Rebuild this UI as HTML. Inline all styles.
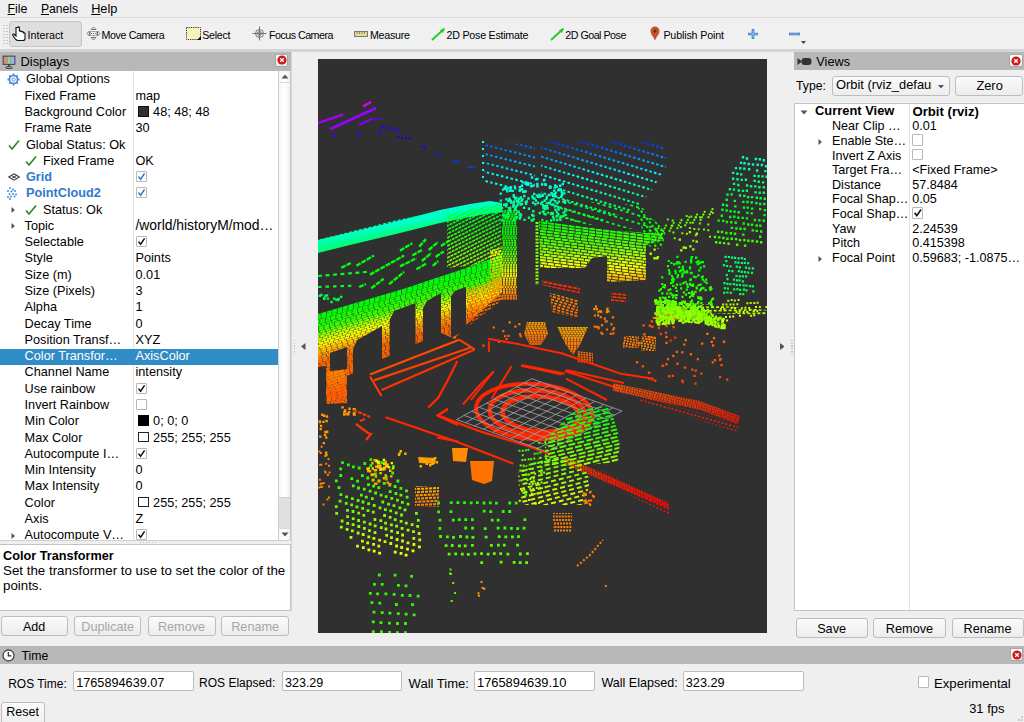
<!DOCTYPE html>
<html><head><meta charset="utf-8"><style>
html,body{margin:0;padding:0;width:1024px;height:722px;overflow:hidden;background:#efefef;}
.t{position:absolute;white-space:nowrap;line-height:1;font-family:"Liberation Sans",sans-serif;}
.r{position:absolute;}
</style></head><body>
<div class="r" style="left:318px;top:59px;width:449px;height:574px;background:#303030;overflow:hidden"><svg width="449" height="574" viewBox="318 59 449 574" style="position:absolute;left:0;top:0"><defs><clipPath id="i1"><path d="M541.0 141.0L663.0 142.0L667.0 165.0L652.0 190.0L637.0 208.0L600.0 222.0L541.0 222.0Z"/></clipPath><linearGradient id="i2" gradientUnits="userSpaceOnUse" x1="0" y1="143" x2="0" y2="222"><stop offset="0.000" stop-color="#0033ff"/><stop offset="0.051" stop-color="#004cff"/><stop offset="0.101" stop-color="#0066ff"/><stop offset="0.152" stop-color="#007fff"/><stop offset="0.203" stop-color="#0099ff"/><stop offset="0.253" stop-color="#00b2ff"/><stop offset="0.304" stop-color="#00cbff"/><stop offset="0.354" stop-color="#00e5ff"/><stop offset="0.405" stop-color="#00ffff"/><stop offset="0.479" stop-color="#00ffe2"/><stop offset="0.554" stop-color="#00ffc5"/><stop offset="0.628" stop-color="#00ffa8"/><stop offset="0.703" stop-color="#00ff8c"/><stop offset="0.777" stop-color="#00ff6f"/><stop offset="0.851" stop-color="#00ff52"/><stop offset="0.926" stop-color="#00ff36"/><stop offset="1" stop-color="#00ff19"/></linearGradient><clipPath id="i3"><path d="M484.0 140.0L535.0 146.0L535.0 190.0L505.0 192.0L484.0 186.0Z"/></clipPath><linearGradient id="i4" gradientUnits="userSpaceOnUse" x1="0" y1="142" x2="0" y2="190"><stop offset="0.000" stop-color="#004cff"/><stop offset="0.125" stop-color="#006aff"/><stop offset="0.250" stop-color="#0089ff"/><stop offset="0.375" stop-color="#00a7ff"/><stop offset="0.500" stop-color="#00c5ff"/><stop offset="0.625" stop-color="#00e3ff"/><stop offset="0.750" stop-color="#00fffb"/><stop offset="0.875" stop-color="#00ffdd"/><stop offset="1" stop-color="#00ffbf"/></linearGradient><linearGradient id="i5" gradientUnits="userSpaceOnUse" x1="0" y1="175" x2="0" y2="220"><stop offset="0.000" stop-color="#00f2ff"/><stop offset="0.125" stop-color="#00fff7"/><stop offset="0.250" stop-color="#00ffe2"/><stop offset="0.375" stop-color="#00ffcd"/><stop offset="0.500" stop-color="#00ffb8"/><stop offset="0.625" stop-color="#00ffa4"/><stop offset="0.750" stop-color="#00ff8f"/><stop offset="0.875" stop-color="#00ff7a"/><stop offset="1" stop-color="#00ff65"/></linearGradient><clipPath id="i6"><path d="M560.0 200.0L640.0 205.0L665.0 232.0L560.0 222.0Z"/></clipPath><linearGradient id="i7" gradientUnits="userSpaceOnUse" x1="0" y1="200" x2="0" y2="232"><stop offset="0.000" stop-color="#00ff3f"/><stop offset="0.125" stop-color="#00ff37"/><stop offset="0.250" stop-color="#00ff2f"/><stop offset="0.375" stop-color="#00ff27"/><stop offset="0.500" stop-color="#00ff1f"/><stop offset="0.625" stop-color="#00ff17"/><stop offset="0.750" stop-color="#00ff0f"/><stop offset="0.875" stop-color="#00ff07"/><stop offset="1" stop-color="#00ff00"/></linearGradient><linearGradient id="i8" gradientUnits="userSpaceOnUse" x1="380" y1="225.5" x2="382.5" y2="237.7"><stop offset="0.000" stop-color="#00ffd8"/><stop offset="0.167" stop-color="#00ffc7"/><stop offset="0.333" stop-color="#00ffb6"/><stop offset="0.500" stop-color="#00ffa5"/><stop offset="0.667" stop-color="#00ff94"/><stop offset="0.833" stop-color="#00ff83"/><stop offset="1" stop-color="#00ff72"/></linearGradient><clipPath id="i9"><path d="M447.0 214.0L500.0 203.0L502.0 258.0L470.0 266.0L447.0 268.0Z"/></clipPath><linearGradient id="i10" gradientUnits="userSpaceOnUse" x1="0" y1="210" x2="0" y2="262"><stop offset="0.000" stop-color="#00ff33"/><stop offset="0.125" stop-color="#00ff1c"/><stop offset="0.250" stop-color="#00ff06"/><stop offset="0.375" stop-color="#0fff00"/><stop offset="0.500" stop-color="#26ff00"/><stop offset="0.625" stop-color="#3cff00"/><stop offset="0.750" stop-color="#52ff00"/><stop offset="0.875" stop-color="#69ff00"/><stop offset="1" stop-color="#7fff00"/></linearGradient><clipPath id="i11"><path d="M318.0 314.0L403.0 289.0L458.6 270.5L502.0 255.0L502.0 292.0L466.0 325.0L455.0 339.0L441.0 333.0L414.0 345.0L380.0 360.0L347.0 376.0L347.0 403.0L327.0 404.0L318.0 366.0Z"/></clipPath><linearGradient id="i12" gradientUnits="userSpaceOnUse" x1="318" y1="315" x2="331" y2="360"><stop offset="0.000" stop-color="#00ff0c"/><stop offset="0.050" stop-color="#00ff02"/><stop offset="0.100" stop-color="#08ff00"/><stop offset="0.150" stop-color="#13ff00"/><stop offset="0.200" stop-color="#1dff00"/><stop offset="0.250" stop-color="#28ff00"/><stop offset="0.300" stop-color="#33ff00"/><stop offset="0.342" stop-color="#50ff00"/><stop offset="0.383" stop-color="#6eff00"/><stop offset="0.425" stop-color="#8cff00"/><stop offset="0.467" stop-color="#aaff00"/><stop offset="0.508" stop-color="#c7ff00"/><stop offset="0.550" stop-color="#e5ff00"/><stop offset="0.592" stop-color="#f8ff00"/><stop offset="0.633" stop-color="#fff200"/><stop offset="0.675" stop-color="#ffdf00"/><stop offset="0.717" stop-color="#ffcc00"/><stop offset="0.758" stop-color="#ffb800"/><stop offset="0.800" stop-color="#ffa500"/><stop offset="0.833" stop-color="#ff9b00"/><stop offset="0.867" stop-color="#ff9000"/><stop offset="0.900" stop-color="#ff8500"/><stop offset="0.933" stop-color="#ff7b00"/><stop offset="0.967" stop-color="#ff7000"/><stop offset="1" stop-color="#ff6600"/></linearGradient><clipPath id="i13"><path d="M327.0 372.0L345.0 370.0L345.0 397.0L327.0 398.0Z"/></clipPath><linearGradient id="i14" gradientUnits="userSpaceOnUse" x1="0" y1="370" x2="0" y2="398"><stop offset="0.000" stop-color="#ff9900"/><stop offset="0.167" stop-color="#ff8c00"/><stop offset="0.333" stop-color="#ff7f00"/><stop offset="0.500" stop-color="#ff7200"/><stop offset="0.667" stop-color="#ff6600"/><stop offset="0.833" stop-color="#ff5900"/><stop offset="1" stop-color="#ff4c00"/></linearGradient><clipPath id="i15"><path d="M466.0 290.0L502.0 278.0L502.0 300.0L470.0 325.0Z"/></clipPath><linearGradient id="i16" gradientUnits="userSpaceOnUse" x1="0" y1="280" x2="0" y2="325"><stop offset="0.000" stop-color="#ffb200"/><stop offset="0.125" stop-color="#ffa400"/><stop offset="0.250" stop-color="#ff9500"/><stop offset="0.375" stop-color="#ff8700"/><stop offset="0.500" stop-color="#ff7900"/><stop offset="0.625" stop-color="#ff6a00"/><stop offset="0.750" stop-color="#ff5c00"/><stop offset="0.875" stop-color="#ff4e00"/><stop offset="1" stop-color="#ff3f00"/></linearGradient><clipPath id="i17"><path d="M502.0 210.0L517.0 210.0L517.0 300.0L502.0 300.0Z"/></clipPath><linearGradient id="i18" gradientUnits="userSpaceOnUse" x1="0" y1="215" x2="0" y2="300"><stop offset="0.000" stop-color="#00ff26"/><stop offset="0.051" stop-color="#00ff1b"/><stop offset="0.103" stop-color="#00ff0f"/><stop offset="0.154" stop-color="#00ff04"/><stop offset="0.206" stop-color="#06ff00"/><stop offset="0.257" stop-color="#11ff00"/><stop offset="0.309" stop-color="#1cff00"/><stop offset="0.360" stop-color="#27ff00"/><stop offset="0.412" stop-color="#33ff00"/><stop offset="0.449" stop-color="#4cff00"/><stop offset="0.485" stop-color="#65ff00"/><stop offset="0.522" stop-color="#7fff00"/><stop offset="0.559" stop-color="#98ff00"/><stop offset="0.596" stop-color="#b2ff00"/><stop offset="0.632" stop-color="#ccff00"/><stop offset="0.669" stop-color="#e5ff00"/><stop offset="0.706" stop-color="#ffff00"/><stop offset="0.743" stop-color="#ffeb00"/><stop offset="0.779" stop-color="#ffd800"/><stop offset="0.816" stop-color="#ffc500"/><stop offset="0.853" stop-color="#ffb200"/><stop offset="0.890" stop-color="#ff9f00"/><stop offset="0.926" stop-color="#ff8c00"/><stop offset="0.963" stop-color="#ff7900"/><stop offset="1" stop-color="#ff6600"/></linearGradient><clipPath id="i19"><path d="M490.0 250.0L502.0 248.0L502.0 300.0L490.0 302.0Z"/></clipPath><linearGradient id="i20" gradientUnits="userSpaceOnUse" x1="0" y1="250" x2="0" y2="300"><stop offset="0.000" stop-color="#ffff00"/><stop offset="0.125" stop-color="#ffeb00"/><stop offset="0.250" stop-color="#ffd800"/><stop offset="0.375" stop-color="#ffc500"/><stop offset="0.500" stop-color="#ffb200"/><stop offset="0.625" stop-color="#ff9f00"/><stop offset="0.750" stop-color="#ff8c00"/><stop offset="0.875" stop-color="#ff7900"/><stop offset="1" stop-color="#ff6600"/></linearGradient><clipPath id="i21"><path d="M539.0 221.0L600.0 229.0L646.0 233.0L663.0 234.0L663.0 240.0L646.0 245.0L646.0 280.0L607.0 282.0L607.0 256.0L592.0 258.0L585.0 268.0L540.0 268.0Z"/></clipPath><linearGradient id="i22" gradientUnits="userSpaceOnUse" x1="0" y1="222" x2="0" y2="280"><stop offset="0.000" stop-color="#00ff00"/><stop offset="0.050" stop-color="#0bff00"/><stop offset="0.099" stop-color="#16ff00"/><stop offset="0.149" stop-color="#21ff00"/><stop offset="0.198" stop-color="#2cff00"/><stop offset="0.248" stop-color="#37ff00"/><stop offset="0.297" stop-color="#42ff00"/><stop offset="0.347" stop-color="#4eff00"/><stop offset="0.397" stop-color="#59ff00"/><stop offset="0.429" stop-color="#67ff00"/><stop offset="0.461" stop-color="#75ff00"/><stop offset="0.494" stop-color="#84ff00"/><stop offset="0.526" stop-color="#92ff00"/><stop offset="0.558" stop-color="#a0ff00"/><stop offset="0.591" stop-color="#afff00"/><stop offset="0.623" stop-color="#bdff00"/><stop offset="0.655" stop-color="#ccff00"/><stop offset="0.698" stop-color="#dbff00"/><stop offset="0.741" stop-color="#ebff00"/><stop offset="0.784" stop-color="#fbff00"/><stop offset="0.828" stop-color="#fff200"/><stop offset="0.871" stop-color="#ffe200"/><stop offset="0.914" stop-color="#ffd200"/><stop offset="0.957" stop-color="#ffc200"/><stop offset="1" stop-color="#ffb200"/></linearGradient><clipPath id="i23"><path d="M637.0 206.0L666.0 230.0L662.0 250.0L645.0 245.0Z"/></clipPath><linearGradient id="i24" gradientUnits="userSpaceOnUse" x1="0" y1="205" x2="0" y2="250"><stop offset="0.000" stop-color="#00ff19"/><stop offset="0.125" stop-color="#00ff13"/><stop offset="0.250" stop-color="#00ff0c"/><stop offset="0.375" stop-color="#00ff06"/><stop offset="0.500" stop-color="#00ff00"/><stop offset="0.625" stop-color="#06ff00"/><stop offset="0.750" stop-color="#0cff00"/><stop offset="0.875" stop-color="#13ff00"/><stop offset="1" stop-color="#19ff00"/></linearGradient><clipPath id="i25"><path d="M542.0 279.0L580.0 287.0L580.0 294.0L542.0 285.0Z"/></clipPath><linearGradient id="i26" gradientUnits="userSpaceOnUse" x1="0" y1="279" x2="0" y2="294"><stop offset="0.000" stop-color="#ff3f00"/><stop offset="0.125" stop-color="#ff3a00"/><stop offset="0.250" stop-color="#ff3600"/><stop offset="0.375" stop-color="#ff3100"/><stop offset="0.500" stop-color="#ff2c00"/><stop offset="0.625" stop-color="#ff2700"/><stop offset="0.750" stop-color="#ff2300"/><stop offset="0.875" stop-color="#ff1e00"/><stop offset="1" stop-color="#ff1900"/></linearGradient><linearGradient id="i27" gradientUnits="userSpaceOnUse" x1="0" y1="155" x2="0" y2="246"><stop offset="0.000" stop-color="#00ffcc"/><stop offset="0.062" stop-color="#00ffba"/><stop offset="0.124" stop-color="#00ffa8"/><stop offset="0.185" stop-color="#00ff97"/><stop offset="0.247" stop-color="#00ff85"/><stop offset="0.309" stop-color="#00ff74"/><stop offset="0.371" stop-color="#00ff62"/><stop offset="0.433" stop-color="#00ff51"/><stop offset="0.495" stop-color="#00ff3f"/><stop offset="0.558" stop-color="#00ff2e"/><stop offset="0.621" stop-color="#00ff1c"/><stop offset="0.684" stop-color="#00ff0b"/><stop offset="0.747" stop-color="#06ff00"/><stop offset="0.810" stop-color="#17ff00"/><stop offset="0.874" stop-color="#29ff00"/><stop offset="0.937" stop-color="#3aff00"/><stop offset="1" stop-color="#4cff00"/></linearGradient><linearGradient id="i28" gradientUnits="userSpaceOnUse" x1="0" y1="217" x2="0" y2="240"><stop offset="0.000" stop-color="#59ff00"/><stop offset="0.125" stop-color="#5eff00"/><stop offset="0.250" stop-color="#62ff00"/><stop offset="0.375" stop-color="#67ff00"/><stop offset="0.500" stop-color="#6cff00"/><stop offset="0.625" stop-color="#71ff00"/><stop offset="0.750" stop-color="#75ff00"/><stop offset="0.875" stop-color="#7aff00"/><stop offset="1" stop-color="#7fff00"/></linearGradient><linearGradient id="i29" gradientUnits="userSpaceOnUse" x1="0" y1="254" x2="0" y2="305"><stop offset="0.000" stop-color="#00ff19"/><stop offset="0.125" stop-color="#00ff0e"/><stop offset="0.250" stop-color="#00ff03"/><stop offset="0.375" stop-color="#07ff00"/><stop offset="0.500" stop-color="#13ff00"/><stop offset="0.625" stop-color="#1eff00"/><stop offset="0.750" stop-color="#29ff00"/><stop offset="0.875" stop-color="#34ff00"/><stop offset="1" stop-color="#3fff00"/></linearGradient><linearGradient id="i30" gradientUnits="userSpaceOnUse" x1="0" y1="298" x2="0" y2="328"><stop offset="0.000" stop-color="#59ff00"/><stop offset="0.125" stop-color="#64ff00"/><stop offset="0.250" stop-color="#6fff00"/><stop offset="0.375" stop-color="#7aff00"/><stop offset="0.500" stop-color="#85ff00"/><stop offset="0.625" stop-color="#91ff00"/><stop offset="0.750" stop-color="#9cff00"/><stop offset="0.875" stop-color="#a7ff00"/><stop offset="1" stop-color="#b2ff00"/></linearGradient><clipPath id="i31"><path d="M702.0 304.0L767.0 310.0L767.0 315.0L704.0 313.0Z"/></clipPath><linearGradient id="i32" gradientUnits="userSpaceOnUse" x1="0" y1="312" x2="0" y2="340"><stop offset="0.000" stop-color="#ff7200"/><stop offset="0.125" stop-color="#ff6900"/><stop offset="0.250" stop-color="#ff5f00"/><stop offset="0.375" stop-color="#ff5600"/><stop offset="0.500" stop-color="#ff4c00"/><stop offset="0.625" stop-color="#ff4200"/><stop offset="0.750" stop-color="#ff3900"/><stop offset="0.875" stop-color="#ff2f00"/><stop offset="1" stop-color="#ff2600"/></linearGradient><linearGradient id="i33" gradientUnits="userSpaceOnUse" x1="0" y1="254" x2="0" y2="295"><stop offset="0.000" stop-color="#00ff7f"/><stop offset="0.125" stop-color="#00ff77"/><stop offset="0.250" stop-color="#00ff6f"/><stop offset="0.375" stop-color="#00ff67"/><stop offset="0.500" stop-color="#00ff5f"/><stop offset="0.625" stop-color="#00ff57"/><stop offset="0.750" stop-color="#00ff4f"/><stop offset="0.875" stop-color="#00ff47"/><stop offset="1" stop-color="#00ff3f"/></linearGradient><linearGradient id="i34" gradientUnits="userSpaceOnUse" x1="0" y1="296" x2="0" y2="321"><stop offset="0.000" stop-color="#a5ff00"/><stop offset="0.125" stop-color="#adff00"/><stop offset="0.250" stop-color="#b5ff00"/><stop offset="0.375" stop-color="#bdff00"/><stop offset="0.500" stop-color="#c5ff00"/><stop offset="0.625" stop-color="#cdff00"/><stop offset="0.750" stop-color="#d5ff00"/><stop offset="0.875" stop-color="#ddff00"/><stop offset="1" stop-color="#e5ff00"/></linearGradient><linearGradient id="i35" gradientUnits="userSpaceOnUse" x1="0" y1="314" x2="0" y2="380"><stop offset="0.000" stop-color="#ff7f00"/><stop offset="0.125" stop-color="#ff7700"/><stop offset="0.250" stop-color="#ff6f00"/><stop offset="0.375" stop-color="#ff6700"/><stop offset="0.500" stop-color="#ff5f00"/><stop offset="0.625" stop-color="#ff5700"/><stop offset="0.750" stop-color="#ff4f00"/><stop offset="0.875" stop-color="#ff4700"/><stop offset="1" stop-color="#ff3f00"/></linearGradient><clipPath id="i36"><path d="M527.0 322.0L545.0 322.0L548.0 334.0L541.0 345.0L530.0 345.0L524.0 334.0Z"/></clipPath><linearGradient id="i37" gradientUnits="userSpaceOnUse" x1="0" y1="320" x2="0" y2="345"><stop offset="0.000" stop-color="#ffa500"/><stop offset="0.125" stop-color="#ff9d00"/><stop offset="0.250" stop-color="#ff9500"/><stop offset="0.375" stop-color="#ff8d00"/><stop offset="0.500" stop-color="#ff8500"/><stop offset="0.625" stop-color="#ff7d00"/><stop offset="0.750" stop-color="#ff7500"/><stop offset="0.875" stop-color="#ff6d00"/><stop offset="1" stop-color="#ff6600"/></linearGradient><clipPath id="i38"><path d="M557.0 327.0L588.0 327.0L580.0 345.0L573.0 355.0L566.0 345.0Z"/></clipPath><linearGradient id="i39" gradientUnits="userSpaceOnUse" x1="0" y1="326" x2="0" y2="355"><stop offset="0.000" stop-color="#ffb200"/><stop offset="0.125" stop-color="#ffa800"/><stop offset="0.250" stop-color="#ff9f00"/><stop offset="0.375" stop-color="#ff9500"/><stop offset="0.500" stop-color="#ff8c00"/><stop offset="0.625" stop-color="#ff8200"/><stop offset="0.750" stop-color="#ff7900"/><stop offset="0.875" stop-color="#ff6f00"/><stop offset="1" stop-color="#ff6600"/></linearGradient><clipPath id="i40"><path d="M577.0 351.0L593.0 353.0L593.0 364.0L577.0 362.0Z"/></clipPath><linearGradient id="i41" gradientUnits="userSpaceOnUse" x1="0" y1="350" x2="0" y2="364"><stop offset="0.000" stop-color="#ff7f00"/><stop offset="0.125" stop-color="#ff7900"/><stop offset="0.250" stop-color="#ff7200"/><stop offset="0.375" stop-color="#ff6c00"/><stop offset="0.500" stop-color="#ff6600"/><stop offset="0.625" stop-color="#ff5f00"/><stop offset="0.750" stop-color="#ff5900"/><stop offset="0.875" stop-color="#ff5200"/><stop offset="1" stop-color="#ff4c00"/></linearGradient><clipPath id="i42"><path d="M550.0 293.0L578.0 300.0L578.0 318.0L552.0 312.0Z"/></clipPath><linearGradient id="i43" gradientUnits="userSpaceOnUse" x1="0" y1="292" x2="0" y2="318"><stop offset="0.000" stop-color="#ff8c00"/><stop offset="0.125" stop-color="#ff8700"/><stop offset="0.250" stop-color="#ff8200"/><stop offset="0.375" stop-color="#ff7d00"/><stop offset="0.500" stop-color="#ff7900"/><stop offset="0.625" stop-color="#ff7400"/><stop offset="0.750" stop-color="#ff6f00"/><stop offset="0.875" stop-color="#ff6a00"/><stop offset="1" stop-color="#ff6600"/></linearGradient><clipPath id="i44"><path d="M611.0 292.0L626.0 293.0L626.0 303.0L611.0 302.0Z"/></clipPath><linearGradient id="i45" gradientUnits="userSpaceOnUse" x1="0" y1="305" x2="0" y2="333"><stop offset="0.000" stop-color="#ff8c00"/><stop offset="0.125" stop-color="#ff8700"/><stop offset="0.250" stop-color="#ff8200"/><stop offset="0.375" stop-color="#ff7d00"/><stop offset="0.500" stop-color="#ff7900"/><stop offset="0.625" stop-color="#ff7400"/><stop offset="0.750" stop-color="#ff6f00"/><stop offset="0.875" stop-color="#ff6a00"/><stop offset="1" stop-color="#ff6600"/></linearGradient><clipPath id="i46"><path d="M623.0 336.0L639.0 336.0L639.0 348.0L623.0 348.0Z"/></clipPath><clipPath id="i47"><path d="M641.0 336.0L656.0 336.0L656.0 351.0L641.0 351.0Z"/></clipPath><linearGradient id="i48" gradientUnits="userSpaceOnUse" x1="0" y1="330" x2="0" y2="385"><stop offset="0.000" stop-color="#ff7f00"/><stop offset="0.125" stop-color="#ff7700"/><stop offset="0.250" stop-color="#ff6f00"/><stop offset="0.375" stop-color="#ff6700"/><stop offset="0.500" stop-color="#ff5f00"/><stop offset="0.625" stop-color="#ff5700"/><stop offset="0.750" stop-color="#ff4f00"/><stop offset="0.875" stop-color="#ff4700"/><stop offset="1" stop-color="#ff3f00"/></linearGradient><linearGradient id="i49" gradientUnits="userSpaceOnUse" x1="0" y1="318" x2="0" y2="345"><stop offset="0.000" stop-color="#ff7f00"/><stop offset="0.125" stop-color="#ff7900"/><stop offset="0.250" stop-color="#ff7200"/><stop offset="0.375" stop-color="#ff6c00"/><stop offset="0.500" stop-color="#ff6600"/><stop offset="0.625" stop-color="#ff5f00"/><stop offset="0.750" stop-color="#ff5900"/><stop offset="0.875" stop-color="#ff5200"/><stop offset="1" stop-color="#ff4c00"/></linearGradient><clipPath id="i50"><path d="M415.0 486.0L439.0 486.0L439.0 507.0L415.0 507.0Z"/></clipPath><linearGradient id="i51" gradientUnits="userSpaceOnUse" x1="0" y1="486" x2="0" y2="507"><stop offset="0.000" stop-color="#ffb200"/><stop offset="0.125" stop-color="#ffaa00"/><stop offset="0.250" stop-color="#ffa200"/><stop offset="0.375" stop-color="#ff9a00"/><stop offset="0.500" stop-color="#ff9200"/><stop offset="0.625" stop-color="#ff8a00"/><stop offset="0.750" stop-color="#ff8200"/><stop offset="0.875" stop-color="#ff7a00"/><stop offset="1" stop-color="#ff7200"/></linearGradient><clipPath id="i52"><path d="M613.0 383.0L700.0 401.0L740.0 416.0L738.0 424.0L700.0 410.0L613.0 391.0Z"/></clipPath><linearGradient id="i53" gradientUnits="userSpaceOnUse" x1="0" y1="384" x2="0" y2="424"><stop offset="0.000" stop-color="#ff5900"/><stop offset="0.125" stop-color="#ff4f00"/><stop offset="0.250" stop-color="#ff4600"/><stop offset="0.375" stop-color="#ff3c00"/><stop offset="0.500" stop-color="#ff3300"/><stop offset="0.625" stop-color="#ff2900"/><stop offset="0.750" stop-color="#ff1f00"/><stop offset="0.875" stop-color="#ff1600"/><stop offset="1" stop-color="#ff0c00"/></linearGradient><clipPath id="i54"><path d="M640.0 396.0L738.0 424.0L738.0 432.0L640.0 402.0Z"/></clipPath><clipPath id="i55"><path d="M564.0 456.0L669.0 503.0L669.0 509.0L564.0 464.0Z"/></clipPath><linearGradient id="i56" gradientUnits="userSpaceOnUse" x1="0" y1="456" x2="0" y2="509"><stop offset="0.000" stop-color="#ff3f00"/><stop offset="0.125" stop-color="#ff3700"/><stop offset="0.250" stop-color="#ff2f00"/><stop offset="0.375" stop-color="#ff2700"/><stop offset="0.500" stop-color="#ff1f00"/><stop offset="0.625" stop-color="#ff1700"/><stop offset="0.750" stop-color="#ff0f00"/><stop offset="0.875" stop-color="#ff0700"/><stop offset="1" stop-color="#ff0000"/></linearGradient><clipPath id="i57"><path d="M600.0 470.0L669.0 505.0L669.0 515.0L600.0 480.0Z"/></clipPath><clipPath id="i58"><path d="M545.0 440.0L575.0 410.0L610.0 406.0L620.0 440.0L618.0 462.0L575.0 466.0L545.0 465.0Z"/></clipPath><linearGradient id="i59" gradientUnits="userSpaceOnUse" x1="0" y1="410" x2="0" y2="466"><stop offset="0.000" stop-color="#00ff19"/><stop offset="0.067" stop-color="#00ff0c"/><stop offset="0.134" stop-color="#00ff00"/><stop offset="0.201" stop-color="#0cff00"/><stop offset="0.268" stop-color="#19ff00"/><stop offset="0.335" stop-color="#26ff00"/><stop offset="0.402" stop-color="#33ff00"/><stop offset="0.469" stop-color="#3fff00"/><stop offset="0.536" stop-color="#4cff00"/><stop offset="0.594" stop-color="#57ff00"/><stop offset="0.652" stop-color="#62ff00"/><stop offset="0.710" stop-color="#6dff00"/><stop offset="0.768" stop-color="#79ff00"/><stop offset="0.826" stop-color="#84ff00"/><stop offset="0.884" stop-color="#8fff00"/><stop offset="0.942" stop-color="#9aff00"/><stop offset="1" stop-color="#a5ff00"/></linearGradient><clipPath id="i60"><path d="M518.0 470.0L545.0 455.0L580.0 460.0L590.0 480.0L585.0 505.0L520.0 505.0Z"/></clipPath><linearGradient id="i61" gradientUnits="userSpaceOnUse" x1="0" y1="455" x2="0" y2="505"><stop offset="0.000" stop-color="#59ff00"/><stop offset="0.125" stop-color="#6aff00"/><stop offset="0.250" stop-color="#7cff00"/><stop offset="0.375" stop-color="#8dff00"/><stop offset="0.500" stop-color="#9fff00"/><stop offset="0.625" stop-color="#b0ff00"/><stop offset="0.750" stop-color="#c2ff00"/><stop offset="0.875" stop-color="#d3ff00"/><stop offset="1" stop-color="#e5ff00"/></linearGradient><linearGradient id="i62" gradientUnits="userSpaceOnUse" x1="0" y1="445" x2="0" y2="505"><stop offset="0.000" stop-color="#33ff00"/><stop offset="0.125" stop-color="#49ff00"/><stop offset="0.250" stop-color="#5fff00"/><stop offset="0.375" stop-color="#75ff00"/><stop offset="0.500" stop-color="#8cff00"/><stop offset="0.625" stop-color="#a2ff00"/><stop offset="0.750" stop-color="#b8ff00"/><stop offset="0.875" stop-color="#cfff00"/><stop offset="1" stop-color="#e5ff00"/></linearGradient><clipPath id="i64"><path d="M553.0 513.0L572.0 513.0L572.0 532.0L553.0 532.0Z"/></clipPath><linearGradient id="i67" gradientUnits="userSpaceOnUse" x1="0" y1="458" x2="0" y2="555"><stop offset="0.000" stop-color="#0cff00"/><stop offset="0.080" stop-color="#1bff00"/><stop offset="0.160" stop-color="#29ff00"/><stop offset="0.240" stop-color="#37ff00"/><stop offset="0.320" stop-color="#46ff00"/><stop offset="0.399" stop-color="#54ff00"/><stop offset="0.479" stop-color="#62ff00"/><stop offset="0.559" stop-color="#71ff00"/><stop offset="0.639" stop-color="#7fff00"/><stop offset="0.684" stop-color="#8fff00"/><stop offset="0.729" stop-color="#9fff00"/><stop offset="0.774" stop-color="#afff00"/><stop offset="0.820" stop-color="#bfff00"/><stop offset="0.865" stop-color="#cfff00"/><stop offset="0.910" stop-color="#dfff00"/><stop offset="0.955" stop-color="#efff00"/><stop offset="1" stop-color="#ffff00"/></linearGradient><linearGradient id="i68" gradientUnits="userSpaceOnUse" x1="0" y1="566" x2="0" y2="632"><stop offset="0.000" stop-color="#26ff00"/><stop offset="0.125" stop-color="#27ff00"/><stop offset="0.250" stop-color="#29ff00"/><stop offset="0.375" stop-color="#2bff00"/><stop offset="0.500" stop-color="#2cff00"/><stop offset="0.625" stop-color="#2eff00"/><stop offset="0.750" stop-color="#2fff00"/><stop offset="0.875" stop-color="#31ff00"/><stop offset="1" stop-color="#33ff00"/></linearGradient><linearGradient id="i69" gradientUnits="userSpaceOnUse" x1="0" y1="500" x2="0" y2="563"><stop offset="0.000" stop-color="#19ff00"/><stop offset="0.125" stop-color="#23ff00"/><stop offset="0.250" stop-color="#2cff00"/><stop offset="0.375" stop-color="#36ff00"/><stop offset="0.500" stop-color="#3fff00"/><stop offset="0.625" stop-color="#49ff00"/><stop offset="0.750" stop-color="#52ff00"/><stop offset="0.875" stop-color="#5cff00"/><stop offset="1" stop-color="#65ff00"/></linearGradient><linearGradient id="i73" gradientUnits="userSpaceOnUse" x1="0" y1="458" x2="0" y2="483"><stop offset="0.000" stop-color="#ffff00"/><stop offset="0.125" stop-color="#fff200"/><stop offset="0.250" stop-color="#ffe500"/><stop offset="0.375" stop-color="#ffd800"/><stop offset="0.500" stop-color="#ffcc00"/><stop offset="0.625" stop-color="#ffbf00"/><stop offset="0.750" stop-color="#ffb200"/><stop offset="0.875" stop-color="#ffa500"/><stop offset="1" stop-color="#ff9900"/></linearGradient></defs><path d="M318.0 123.0L343.0 114.6" fill="none" stroke="#a500ff" stroke-width="2.2"/><path d="M330.5 129.0L376.0 108.0" fill="none" stroke="#9900ff" stroke-width="2.6"/><path d="M363.0 106.5L371.0 102.0" fill="none" stroke="#d800ff" stroke-width="2.4"/><path d="M359.0 125.0L372.6 118.4" fill="none" stroke="#7f00ff" stroke-width="2.2"/><path d="M374.5 119.3L382.0 118.3" fill="none" stroke="#6600ff" stroke-width="2.0" stroke-dasharray="2 1"/><path d="M333.0 136.0L336.0 135.0" fill="none" stroke="#3f00ff" stroke-width="2.0"/><path d="M359.5 131.5L358.5 136.0" fill="none" stroke="#3f00ff" stroke-width="2.0"/><path d="M380.7 130.0L380.0 134.5" fill="none" stroke="#3300ff" stroke-width="2.0"/><path d="M382.0 126.5L400.0 130.5" fill="none" stroke="#2600ff" stroke-width="2.0" stroke-dasharray="2.5 1.5"/><path d="M397.0 137.0L412.0 138.7" fill="none" stroke="#0c00ff" stroke-width="2.0" stroke-dasharray="2 2"/><path d="M420.8 146.7L426.0 147.2" fill="none" stroke="#000cff" stroke-width="2.0" stroke-dasharray="2 1"/><path d="M434.5 153.7L441.3 154.7" fill="none" stroke="#0019ff" stroke-width="2.0" stroke-dasharray="2 1"/><path d="M452.6 160.8L459.6 161.8" fill="none" stroke="#0033ff" stroke-width="2.0" stroke-dasharray="2 1"/><path d="M467.6 167.3L474.6 167.3" fill="none" stroke="#004cff" stroke-width="2.0" stroke-dasharray="2 1"/><g clip-path="url(#i1)" fill="none" stroke="url(#i2)" stroke-width="2.0"><path d="M539.0 93.0L669.0 132.0M539.0 138.0L669.0 177.0M539.0 192.0L669.0 231.0" stroke-dasharray="2.6 2.2" stroke-dashoffset="0.0"/><path d="M539.0 102.0L669.0 141.0M539.0 210.0L669.0 249.0" stroke-dasharray="2.6 2.2" stroke-dashoffset="1.3"/><path d="M539.0 111.0L669.0 150.0M539.0 120.0L669.0 159.0M539.0 129.0L669.0 168.0M539.0 156.0L669.0 195.0M539.0 201.0L669.0 240.0M539.0 219.0L669.0 258.0M539.0 228.0L669.0 267.0" stroke-dasharray="2.6 2.2" stroke-dashoffset="2.6"/><path d="M539.0 147.0L669.0 186.0M539.0 165.0L669.0 204.0M539.0 174.0L669.0 213.0M539.0 183.0L669.0 222.0" stroke-dasharray="2.6 2.2" stroke-dashoffset="3.9"/></g><g clip-path="url(#i3)" fill="none" stroke="url(#i4)" stroke-width="2.0"><path d="M482.0 126.2L537.0 140.0M482.0 135.2L537.0 149.0M482.0 162.2L537.0 176.0M482.0 171.2L537.0 185.0" stroke-dasharray="2.5 2.4" stroke-dashoffset="0.0"/><path d="M482.0 117.2L537.0 131.0M482.0 144.2L537.0 158.0M482.0 153.2L537.0 167.0M482.0 180.2L537.0 194.0M482.0 198.2L537.0 212.0" stroke-dasharray="2.5 2.4" stroke-dashoffset="1.3"/><path d="M482.0 189.2L537.0 203.0" stroke-dasharray="2.5 2.4" stroke-dashoffset="2.6"/></g><path d="M483.0 141.0L483.0 183.0" fill="none" stroke="#00ffff" stroke-width="2" stroke-dasharray="2 5"/><path d="M507.0 213.1h2.4v2.4h-2.4zM549.2 186.5h2.4v2.4h-2.4zM531.2 195.2h2.4v2.4h-2.4zM541.7 210.5h2.4v2.4h-2.4zM554.0 194.5h2.4v2.4h-2.4zM527.8 207.5h2.4v2.4h-2.4zM513.3 217.5h2.4v2.4h-2.4zM499.7 199.4h2.4v2.4h-2.4zM560.9 192.2h2.4v2.4h-2.4zM512.5 194.0h2.4v2.4h-2.4zM527.3 197.3h2.4v2.4h-2.4zM513.6 185.4h2.4v2.4h-2.4zM512.7 195.7h2.4v2.4h-2.4zM554.1 200.0h2.4v2.4h-2.4zM541.0 183.4h2.4v2.4h-2.4zM564.5 213.7h2.4v2.4h-2.4zM506.1 190.0h2.4v2.4h-2.4zM546.3 207.0h2.4v2.4h-2.4zM560.7 194.0h2.4v2.4h-2.4zM553.6 205.2h2.4v2.4h-2.4zM518.3 201.4h2.4v2.4h-2.4zM557.1 213.1h2.4v2.4h-2.4zM531.9 201.5h2.4v2.4h-2.4zM551.4 193.6h2.4v2.4h-2.4zM509.6 199.7h2.4v2.4h-2.4zM545.1 205.4h2.4v2.4h-2.4zM523.1 194.8h2.4v2.4h-2.4zM532.1 210.0h2.4v2.4h-2.4zM532.9 192.7h2.4v2.4h-2.4zM530.8 176.3h2.4v2.4h-2.4zM500.9 206.7h2.4v2.4h-2.4zM563.9 201.7h2.4v2.4h-2.4zM524.4 182.7h2.4v2.4h-2.4zM531.6 219.2h2.4v2.4h-2.4zM549.6 199.3h2.4v2.4h-2.4zM555.6 185.4h2.4v2.4h-2.4zM532.4 217.9h2.4v2.4h-2.4zM536.7 195.7h2.4v2.4h-2.4zM516.0 199.7h2.4v2.4h-2.4zM550.5 211.9h2.4v2.4h-2.4zM557.4 208.3h2.4v2.4h-2.4zM552.2 198.3h2.4v2.4h-2.4zM535.6 194.2h2.4v2.4h-2.4zM501.8 214.2h2.4v2.4h-2.4zM536.2 184.0h2.4v2.4h-2.4zM531.8 196.8h2.4v2.4h-2.4zM521.9 190.6h2.4v2.4h-2.4zM534.1 203.1h2.4v2.4h-2.4zM539.0 195.6h2.4v2.4h-2.4zM509.9 201.3h2.4v2.4h-2.4zM555.7 210.9h2.4v2.4h-2.4zM551.4 211.7h2.4v2.4h-2.4zM515.1 212.9h2.4v2.4h-2.4zM543.1 178.7h2.4v2.4h-2.4zM548.6 186.2h2.4v2.4h-2.4zM505.3 203.1h2.4v2.4h-2.4zM508.7 198.7h2.4v2.4h-2.4zM509.3 187.3h2.4v2.4h-2.4zM545.7 195.5h2.4v2.4h-2.4zM519.6 196.3h2.4v2.4h-2.4zM499.6 192.4h2.4v2.4h-2.4zM526.2 183.5h2.4v2.4h-2.4zM505.3 215.5h2.4v2.4h-2.4zM532.2 184.4h2.4v2.4h-2.4zM538.6 211.8h2.4v2.4h-2.4zM507.8 207.3h2.4v2.4h-2.4zM508.7 206.7h2.4v2.4h-2.4zM543.4 199.5h2.4v2.4h-2.4zM512.8 218.9h2.4v2.4h-2.4zM551.5 198.2h2.4v2.4h-2.4zM513.0 204.2h2.4v2.4h-2.4zM524.5 200.9h2.4v2.4h-2.4zM519.5 203.4h2.4v2.4h-2.4zM501.9 188.4h2.4v2.4h-2.4zM562.8 214.4h2.4v2.4h-2.4zM518.5 213.6h2.4v2.4h-2.4zM518.8 217.3h2.4v2.4h-2.4zM547.8 193.7h2.4v2.4h-2.4zM552.9 218.3h2.4v2.4h-2.4zM536.2 182.7h2.4v2.4h-2.4zM556.1 218.8h2.4v2.4h-2.4zM545.2 197.9h2.4v2.4h-2.4zM523.3 190.6h2.4v2.4h-2.4zM511.8 205.3h2.4v2.4h-2.4zM527.0 183.7h2.4v2.4h-2.4zM505.0 205.0h2.4v2.4h-2.4zM517.8 197.5h2.4v2.4h-2.4zM519.8 214.2h2.4v2.4h-2.4zM511.5 189.7h2.4v2.4h-2.4zM564.1 210.2h2.4v2.4h-2.4zM520.7 184.6h2.4v2.4h-2.4zM543.2 212.7h2.4v2.4h-2.4zM560.5 190.5h2.4v2.4h-2.4zM557.1 205.9h2.4v2.4h-2.4zM530.5 219.3h2.4v2.4h-2.4zM513.7 207.6h2.4v2.4h-2.4zM559.0 184.6h2.4v2.4h-2.4zM548.9 202.0h2.4v2.4h-2.4zM554.4 191.6h2.4v2.4h-2.4zM520.8 188.1h2.4v2.4h-2.4zM556.1 202.2h2.4v2.4h-2.4zM561.9 214.9h2.4v2.4h-2.4zM507.1 199.8h2.4v2.4h-2.4zM502.9 214.0h2.4v2.4h-2.4zM550.8 212.3h2.4v2.4h-2.4zM520.8 202.7h2.4v2.4h-2.4zM550.4 192.0h2.4v2.4h-2.4zM536.2 185.1h2.4v2.4h-2.4zM503.5 187.0h2.4v2.4h-2.4zM557.7 200.4h2.4v2.4h-2.4zM560.0 195.6h2.4v2.4h-2.4zM516.6 210.4h2.4v2.4h-2.4zM542.9 179.1h2.4v2.4h-2.4zM505.7 214.8h2.4v2.4h-2.4zM514.2 208.5h2.4v2.4h-2.4zM504.9 216.0h2.4v2.4h-2.4zM523.3 218.7h2.4v2.4h-2.4zM558.9 188.2h2.4v2.4h-2.4zM515.0 196.5h2.4v2.4h-2.4zM504.7 204.3h2.4v2.4h-2.4zM538.0 195.2h2.4v2.4h-2.4zM559.2 218.6h2.4v2.4h-2.4zM512.4 202.8h2.4v2.4h-2.4zM563.7 199.4h2.4v2.4h-2.4zM544.1 204.8h2.4v2.4h-2.4zM515.4 199.4h2.4v2.4h-2.4zM518.6 186.1h2.4v2.4h-2.4zM503.5 187.6h2.4v2.4h-2.4zM541.7 204.0h2.4v2.4h-2.4zM561.0 192.6h2.4v2.4h-2.4zM518.6 189.7h2.4v2.4h-2.4zM519.2 213.1h2.4v2.4h-2.4zM557.9 188.6h2.4v2.4h-2.4zM520.4 199.5h2.4v2.4h-2.4zM536.8 201.8h2.4v2.4h-2.4zM534.9 178.2h2.4v2.4h-2.4zM503.0 203.6h2.4v2.4h-2.4zM517.5 210.6h2.4v2.4h-2.4zM531.0 213.8h2.4v2.4h-2.4zM508.3 197.6h2.4v2.4h-2.4zM561.6 182.8h2.4v2.4h-2.4zM550.0 219.3h2.4v2.4h-2.4zM553.0 189.4h2.4v2.4h-2.4zM505.2 198.1h2.4v2.4h-2.4zM559.6 188.2h2.4v2.4h-2.4zM519.2 215.6h2.4v2.4h-2.4zM551.9 215.8h2.4v2.4h-2.4zM554.3 208.6h2.4v2.4h-2.4zM544.2 183.0h2.4v2.4h-2.4zM527.0 182.1h2.4v2.4h-2.4zM545.9 205.1h2.4v2.4h-2.4zM562.5 211.4h2.4v2.4h-2.4zM534.8 199.4h2.4v2.4h-2.4zM555.0 195.4h2.4v2.4h-2.4zM524.5 190.2h2.4v2.4h-2.4zM541.3 193.8h2.4v2.4h-2.4zM536.2 177.8h2.4v2.4h-2.4zM521.8 181.2h2.4v2.4h-2.4zM506.4 186.7h2.4v2.4h-2.4zM553.5 192.9h2.4v2.4h-2.4zM524.9 202.6h2.4v2.4h-2.4zM533.4 197.5h2.4v2.4h-2.4zM541.5 194.7h2.4v2.4h-2.4zM544.0 207.9h2.4v2.4h-2.4zM514.0 197.3h2.4v2.4h-2.4zM530.1 185.1h2.4v2.4h-2.4zM525.6 200.2h2.4v2.4h-2.4zM558.8 216.3h2.4v2.4h-2.4zM516.4 204.1h2.4v2.4h-2.4zM532.3 214.5h2.4v2.4h-2.4zM508.7 209.5h2.4v2.4h-2.4zM557.2 189.0h2.4v2.4h-2.4zM544.4 213.2h2.4v2.4h-2.4zM522.9 206.6h2.4v2.4h-2.4zM547.3 201.8h2.4v2.4h-2.4zM555.4 215.3h2.4v2.4h-2.4zM562.3 200.7h2.4v2.4h-2.4zM509.8 186.3h2.4v2.4h-2.4zM512.6 200.6h2.4v2.4h-2.4zM543.7 207.3h2.4v2.4h-2.4zM521.3 198.2h2.4v2.4h-2.4zM509.0 207.8h2.4v2.4h-2.4zM500.7 219.2h2.4v2.4h-2.4zM552.1 203.3h2.4v2.4h-2.4zM515.9 216.1h2.4v2.4h-2.4zM550.0 212.9h2.4v2.4h-2.4zM542.2 206.5h2.4v2.4h-2.4zM527.8 216.6h2.4v2.4h-2.4zM563.1 192.2h2.4v2.4h-2.4zM551.8 194.5h2.4v2.4h-2.4zM509.0 189.6h2.4v2.4h-2.4zM506.5 215.9h2.4v2.4h-2.4zM538.2 193.4h2.4v2.4h-2.4zM505.9 188.3h2.4v2.4h-2.4zM514.6 208.7h2.4v2.4h-2.4zM540.0 202.3h2.4v2.4h-2.4zM554.0 184.3h2.4v2.4h-2.4zM517.1 199.4h2.4v2.4h-2.4zM516.3 201.4h2.4v2.4h-2.4zM514.8 205.8h2.4v2.4h-2.4z" fill="url(#i5)"/><g clip-path="url(#i6)" fill="none" stroke="url(#i7)" stroke-width="1.8"><path d="M558.0 167.3L667.0 200.0" stroke-dasharray="3 3" stroke-dashoffset="0.0"/><path d="M558.0 159.3L667.0 192.0M558.0 191.3L667.0 224.0M558.0 199.3L667.0 232.0M558.0 223.3L667.0 256.0" stroke-dasharray="3 3" stroke-dashoffset="1.3"/><path d="M558.0 183.3L667.0 216.0M558.0 239.3L667.0 272.0" stroke-dasharray="3 3" stroke-dashoffset="2.6"/><path d="M558.0 175.3L667.0 208.0M558.0 207.3L667.0 240.0M558.0 215.3L667.0 248.0M558.0 231.3L667.0 264.0" stroke-dasharray="3 3" stroke-dashoffset="3.9"/></g><path d="M318.0 240.0L350.0 232.5L396.0 221.5L440.0 210.0L470.0 204.0L490.0 201.0L502.0 203.0L502.0 212.0L480.0 215.0L440.0 223.0L396.0 234.0L350.0 245.0L318.0 253.0Z" fill="url(#i8)"/><path d="M320.0 240.0L396.0 221.0L490.0 202.0" fill="none" stroke="#00ff99" stroke-width="1.5" stroke-dasharray="3 2"/><path d="M341.2 267.8L350.8 263.0" fill="none" stroke="#00ff0c" stroke-width="2.4" stroke-dasharray="5 1"/><path d="M356.3 265.8L374.0 255.5" fill="none" stroke="#00ff0c" stroke-width="2.4" stroke-dasharray="5 1"/><path d="M370.0 274.6L404.1 255.5" fill="none" stroke="#00ff0c" stroke-width="2.4" stroke-dasharray="5 1"/><path d="M400.0 266.4L416.4 258.2" fill="none" stroke="#00ff0c" stroke-width="2.4" stroke-dasharray="5 1"/><path d="M400.0 250.7L412.3 243.2" fill="none" stroke="#00ff0c" stroke-width="2.4" stroke-dasharray="5 1"/><path d="M412.3 255.5L421.9 250.0" fill="none" stroke="#00ff0c" stroke-width="2.4" stroke-dasharray="5 1"/><path d="M419.2 246.6L426.0 239.1" fill="none" stroke="#00ff0c" stroke-width="2.4" stroke-dasharray="5 1"/><path d="M416.4 269.2L426.0 263.7" fill="none" stroke="#00ff0c" stroke-width="2.4" stroke-dasharray="5 1"/><path d="M421.9 261.0L431.5 252.8" fill="none" stroke="#00ff0c" stroke-width="2.4" stroke-dasharray="5 1"/><path d="M428.7 250.0L438.3 241.8" fill="none" stroke="#00ff0c" stroke-width="2.4" stroke-dasharray="5 1"/><path d="M432.8 265.8L438.3 261.0" fill="none" stroke="#00ff0c" stroke-width="2.4" stroke-dasharray="5 1"/><path d="M435.6 256.9L443.8 251.4" fill="none" stroke="#00ff0c" stroke-width="2.4" stroke-dasharray="5 1"/><path d="M441.0 246.0L449.3 240.5" fill="none" stroke="#00ff0c" stroke-width="2.4" stroke-dasharray="5 1"/><path d="M371.3 288.3L383.6 278.8" fill="none" stroke="#00ff0c" stroke-width="2.4" stroke-dasharray="5 1"/><path d="M389.1 284.2L404.1 271.9" fill="none" stroke="#00ff0c" stroke-width="2.4" stroke-dasharray="5 1"/><path d="M359.0 287.0L365.9 284.2" fill="none" stroke="#00ff0c" stroke-width="2.4" stroke-dasharray="5 1"/><path d="M318.0 276.0L367.2 271.9" fill="none" stroke="#00ff19" stroke-width="2.2" stroke-dasharray="4 3.5"/><path d="M318.0 287.0L355.0 285.6" fill="none" stroke="#00ff26" stroke-width="2.2" stroke-dasharray="3.5 4"/><path d="M324.3 294.8h2.4v2.4h-2.4zM334.9 298.4h2.4v2.4h-2.4zM323.0 297.0h2.4v2.4h-2.4zM318.6 294.6h2.4v2.4h-2.4zM332.9 297.4h2.4v2.4h-2.4zM323.1 297.7h2.4v2.4h-2.4zM336.5 298.6h2.4v2.4h-2.4zM325.8 294.2h2.4v2.4h-2.4zM340.0 295.7h2.4v2.4h-2.4zM320.1 293.8h2.4v2.4h-2.4zM337.5 297.8h2.4v2.4h-2.4zM336.6 298.8h2.4v2.4h-2.4zM330.3 300.8h2.4v2.4h-2.4zM326.7 297.4h2.4v2.4h-2.4z" fill="#00ff4c"/><g clip-path="url(#i9)" fill="none" stroke="url(#i10)" stroke-width="1.7"><path d="M445.0 203.0L504.0 173.5M445.0 235.0L504.0 205.5M445.0 243.0L504.0 213.5M445.0 255.0L504.0 225.5M445.0 267.0L504.0 237.5M445.0 283.0L504.0 253.5M445.0 291.0L504.0 261.5" stroke-dasharray="3 0.8" stroke-dashoffset="0.0"/><path d="M445.0 207.0L504.0 177.5M445.0 215.0L504.0 185.5M445.0 219.0L504.0 189.5M445.0 239.0L504.0 209.5M445.0 247.0L504.0 217.5M445.0 259.0L504.0 229.5M445.0 279.0L504.0 249.5" stroke-dasharray="3 0.8" stroke-dashoffset="1.3"/><path d="M445.0 211.0L504.0 181.5M445.0 223.0L504.0 193.5M445.0 227.0L504.0 197.5M445.0 263.0L504.0 233.5M445.0 271.0L504.0 241.5M445.0 275.0L504.0 245.5M445.0 295.0L504.0 265.5M445.0 299.0L504.0 269.5" stroke-dasharray="3 0.8" stroke-dashoffset="2.6"/><path d="M445.0 199.0L504.0 169.5M445.0 231.0L504.0 201.5M445.0 251.0L504.0 221.5M445.0 287.0L504.0 257.5" stroke-dasharray="3 0.8" stroke-dashoffset="3.9"/></g><g clip-path="url(#i11)" fill="none" stroke="url(#i12)" stroke-width="2.1"><path d="M316.0 271.1L504.0 214.7M316.0 275.7L504.0 219.3M316.0 291.8L504.0 235.4M316.0 294.1L504.0 237.7M316.0 296.4L504.0 240.0M316.0 305.6L504.0 249.2M316.0 314.8L504.0 258.4M316.0 317.1L504.0 260.7M316.0 319.4L504.0 263.0M316.0 326.3L504.0 269.9M316.0 335.5L504.0 279.1M316.0 342.4L504.0 286.0M316.0 351.6L504.0 295.2M316.0 353.9L504.0 297.5M316.0 358.5L504.0 302.1M316.0 367.7L504.0 311.3M316.0 370.0L504.0 313.6M316.0 374.6L504.0 318.2M316.0 386.1L504.0 329.7M316.0 388.4L504.0 332.0M316.0 399.9L504.0 343.5M316.0 402.2L504.0 345.8M316.0 404.5L504.0 348.1M316.0 411.4L504.0 355.0M316.0 416.0L504.0 359.6M316.0 434.4L504.0 378.0M316.0 457.4L504.0 401.0" stroke-dasharray="5 0.6" stroke-dashoffset="0.0"/><path d="M316.0 257.3L504.0 200.9M316.0 259.6L504.0 203.2M316.0 273.4L504.0 217.0M316.0 280.3L504.0 223.9M316.0 282.6L504.0 226.2M316.0 287.2L504.0 230.8M316.0 303.3L504.0 246.9M316.0 312.5L504.0 256.1M316.0 321.7L504.0 265.3M316.0 324.0L504.0 267.6M316.0 333.2L504.0 276.8M316.0 337.8L504.0 281.4M316.0 349.3L504.0 292.9M316.0 365.4L504.0 309.0M316.0 372.3L504.0 315.9M316.0 395.3L504.0 338.9M316.0 397.6L504.0 341.2M316.0 406.8L504.0 350.4M316.0 418.3L504.0 361.9M316.0 420.6L504.0 364.2M316.0 439.0L504.0 382.6M316.0 441.3L504.0 384.9M316.0 459.7L504.0 403.3M316.0 462.0L504.0 405.6" stroke-dasharray="5 0.6" stroke-dashoffset="1.3"/><path d="M316.0 255.0L504.0 198.6M316.0 264.2L504.0 207.8M316.0 266.5L504.0 210.1M316.0 284.9L504.0 228.5M316.0 289.5L504.0 233.1M316.0 301.0L504.0 244.6M316.0 307.9L504.0 251.5M316.0 328.6L504.0 272.2M316.0 330.9L504.0 274.5M316.0 344.7L504.0 288.3M316.0 383.8L504.0 327.4M316.0 393.0L504.0 336.6M316.0 425.2L504.0 368.8M316.0 436.7L504.0 380.3M316.0 443.6L504.0 387.2M316.0 448.2L504.0 391.8M316.0 452.8L504.0 396.4" stroke-dasharray="5 0.6" stroke-dashoffset="2.6"/><path d="M316.0 252.7L504.0 196.3M316.0 261.9L504.0 205.5M316.0 268.8L504.0 212.4M316.0 278.0L504.0 221.6M316.0 298.7L504.0 242.3M316.0 310.2L504.0 253.8M316.0 340.1L504.0 283.7M316.0 347.0L504.0 290.6M316.0 356.2L504.0 299.8M316.0 360.8L504.0 304.4M316.0 363.1L504.0 306.7M316.0 376.9L504.0 320.5M316.0 379.2L504.0 322.8M316.0 381.5L504.0 325.1M316.0 390.7L504.0 334.3M316.0 409.1L504.0 352.7M316.0 413.7L504.0 357.3M316.0 422.9L504.0 366.5M316.0 427.5L504.0 371.1M316.0 429.8L504.0 373.4M316.0 432.1L504.0 375.7M316.0 445.9L504.0 389.5M316.0 450.5L504.0 394.1M316.0 455.1L504.0 398.7" stroke-dasharray="5 0.6" stroke-dashoffset="3.9"/></g><path d="M330.0 353.0L347.0 347.0L347.0 369.0L330.0 371.0Z" fill="#303030"/><path d="M318.0 367.0L326.0 366.0L326.0 402.0L318.0 402.0Z" fill="#303030"/><path d="M353.0 350.0L357.0 340.0L382.0 326.0L382.0 380.0L353.0 390.0Z" fill="#303030"/><path d="M389.6 320.0L394.0 311.0L415.5 303.0L415.5 355.0L389.6 365.0Z" fill="#303030"/><path d="M423.0 308.0L427.0 301.0L441.0 293.0L441.0 340.0L423.0 348.0Z" fill="#303030"/><path d="M451.0 296.0L455.0 291.0L466.0 287.0L466.0 330.0L451.0 338.0Z" fill="#303030"/><g clip-path="url(#i13)" fill="none" stroke="url(#i14)" stroke-width="2.0"><path d="M325.0 388.0L347.0 381.4" stroke-dasharray="3 0.6" stroke-dashoffset="0.0"/><path d="M325.0 370.0L347.0 363.4M325.0 376.0L347.0 369.4M325.0 382.0L347.0 375.4M325.0 385.0L347.0 378.4M325.0 394.0L347.0 387.4M325.0 397.0L347.0 390.4M325.0 400.0L347.0 393.4M325.0 406.0L347.0 399.4" stroke-dasharray="3 0.6" stroke-dashoffset="1.3"/><path d="M325.0 367.0L347.0 360.4M325.0 373.0L347.0 366.4" stroke-dasharray="3 0.6" stroke-dashoffset="2.6"/><path d="M325.0 379.0L347.0 372.4M325.0 391.0L347.0 384.4M325.0 403.0L347.0 396.4" stroke-dasharray="3 0.6" stroke-dashoffset="3.9"/></g><g clip-path="url(#i15)" fill="none" stroke="url(#i16)" stroke-width="1.7"><path d="M464.0 274.8L504.0 262.8M464.0 284.4L504.0 272.4M464.0 290.8L504.0 278.8M464.0 294.0L504.0 282.0M464.0 306.8L504.0 294.8M464.0 322.8L504.0 310.8M464.0 332.4L504.0 320.4" stroke-dasharray="3 1" stroke-dashoffset="0.0"/><path d="M464.0 300.4L504.0 288.4M464.0 310.0L504.0 298.0M464.0 326.0L504.0 314.0M464.0 329.2L504.0 317.2" stroke-dasharray="3 1" stroke-dashoffset="1.3"/><path d="M464.0 278.0L504.0 266.0M464.0 287.6L504.0 275.6M464.0 297.2L504.0 285.2M464.0 313.2L504.0 301.2M464.0 316.4L504.0 304.4" stroke-dasharray="3 1" stroke-dashoffset="2.6"/><path d="M464.0 281.2L504.0 269.2M464.0 303.6L504.0 291.6M464.0 319.6L504.0 307.6M464.0 335.6L504.0 323.6M464.0 338.8L504.0 326.8" stroke-dasharray="3 1" stroke-dashoffset="3.9"/></g><path d="M370.0 374.6L459.2 339.7" fill="none" stroke="#ff4c00" stroke-width="2.2"/><path d="M373.9 380.4L470.9 347.5" fill="none" stroke="#ff3f00" stroke-width="2.2"/><path d="M381.6 390.0L474.7 349.4" fill="none" stroke="#ff3300" stroke-width="2.2"/><path d="M370.0 376.5L381.6 396.0" fill="none" stroke="#ff3f00" stroke-width="2.0"/><path d="M459.2 339.7L474.7 349.4" fill="none" stroke="#ff3f00" stroke-width="2.0"/><g clip-path="url(#i17)" fill="none" stroke="url(#i18)" stroke-width="2.0"><path d="M500.0 207.8L519.0 207.8M500.0 216.6L519.0 216.6M500.0 223.2L519.0 223.2M500.0 240.8L519.0 240.8M500.0 245.2L519.0 245.2M500.0 249.6L519.0 249.6M500.0 256.2L519.0 256.2M500.0 262.8L519.0 262.8M500.0 282.6L519.0 282.6M500.0 284.8L519.0 284.8" stroke-dasharray="2 0.8" stroke-dashoffset="0.0"/><path d="M500.0 210.0L519.0 210.0M500.0 212.2L519.0 212.2M500.0 218.8L519.0 218.8M500.0 247.4L519.0 247.4M500.0 254.0L519.0 254.0M500.0 260.6L519.0 260.6M500.0 267.2L519.0 267.2M500.0 269.4L519.0 269.4M500.0 271.6L519.0 271.6M500.0 276.0L519.0 276.0M500.0 295.8L519.0 295.8M500.0 298.0L519.0 298.0" stroke-dasharray="2 0.8" stroke-dashoffset="1.3"/><path d="M500.0 214.4L519.0 214.4M500.0 221.0L519.0 221.0M500.0 225.4L519.0 225.4M500.0 236.4L519.0 236.4M500.0 243.0L519.0 243.0M500.0 278.2L519.0 278.2M500.0 280.4L519.0 280.4M500.0 289.2L519.0 289.2M500.0 291.4L519.0 291.4M500.0 293.6L519.0 293.6" stroke-dasharray="2 0.8" stroke-dashoffset="2.6"/><path d="M500.0 227.6L519.0 227.6M500.0 229.8L519.0 229.8M500.0 232.0L519.0 232.0M500.0 234.2L519.0 234.2M500.0 238.6L519.0 238.6M500.0 251.8L519.0 251.8M500.0 258.4L519.0 258.4M500.0 265.0L519.0 265.0M500.0 273.8L519.0 273.8M500.0 287.0L519.0 287.0M500.0 300.2L519.0 300.2" stroke-dasharray="2 0.8" stroke-dashoffset="3.9"/></g><path d="M537.0 222.0L537.0 285.0" fill="none" stroke="#7fff00" stroke-width="3" stroke-dasharray="2 1.3"/><g clip-path="url(#i19)" fill="none" stroke="url(#i20)" stroke-width="1.8"><path d="M488.0 245.0L504.0 241.0M488.0 251.0L504.0 247.0M488.0 272.0L504.0 268.0M488.0 287.0L504.0 283.0" stroke-dasharray="3 1" stroke-dashoffset="0.0"/><path d="M488.0 254.0L504.0 250.0M488.0 275.0L504.0 271.0M488.0 296.0L504.0 292.0M488.0 299.0L504.0 295.0M488.0 302.0L504.0 298.0M488.0 308.0L504.0 304.0" stroke-dasharray="3 1" stroke-dashoffset="1.3"/><path d="M488.0 248.0L504.0 244.0M488.0 257.0L504.0 253.0M488.0 263.0L504.0 259.0M488.0 278.0L504.0 274.0M488.0 293.0L504.0 289.0" stroke-dasharray="3 1" stroke-dashoffset="2.6"/><path d="M488.0 260.0L504.0 256.0M488.0 266.0L504.0 262.0M488.0 269.0L504.0 265.0M488.0 281.0L504.0 277.0M488.0 284.0L504.0 280.0M488.0 290.0L504.0 286.0M488.0 305.0L504.0 301.0" stroke-dasharray="3 1" stroke-dashoffset="3.9"/></g><g clip-path="url(#i21)" fill="none" stroke="url(#i22)" stroke-width="2.1"><path d="M537.0 210.2L665.0 226.8M537.0 239.2L665.0 255.8M537.0 242.1L665.0 258.7M537.0 253.7L665.0 270.3M537.0 265.3L665.0 281.9M537.0 268.2L665.0 284.8M537.0 276.9L665.0 293.5" stroke-dasharray="6 0.9" stroke-dashoffset="0.0"/><path d="M537.0 201.5L665.0 218.1M537.0 204.4L665.0 221.0M537.0 207.3L665.0 223.9M537.0 213.1L665.0 229.7M537.0 247.9L665.0 264.5M537.0 271.1L665.0 287.7M537.0 279.8L665.0 296.4" stroke-dasharray="6 0.9" stroke-dashoffset="1.3"/><path d="M537.0 221.8L665.0 238.4M537.0 224.7L665.0 241.3M537.0 227.6L665.0 244.2M537.0 236.3L665.0 252.9M537.0 262.4L665.0 279.0M537.0 274.0L665.0 290.6M537.0 282.7L665.0 299.3" stroke-dasharray="6 0.9" stroke-dashoffset="2.6"/><path d="M537.0 216.0L665.0 232.6M537.0 218.9L665.0 235.5M537.0 230.5L665.0 247.1M537.0 233.4L665.0 250.0M537.0 245.0L665.0 261.6M537.0 250.8L665.0 267.4M537.0 256.6L665.0 273.2M537.0 259.5L665.0 276.1" stroke-dasharray="6 0.9" stroke-dashoffset="3.9"/></g><path d="M646.0 240.0L651.0 230.0" fill="none" stroke="#33ff00" stroke-width="2.0" stroke-dasharray="2 1"/><path d="M653.8 237.2L658.8 227.2" fill="none" stroke="#3cff00" stroke-width="2.0" stroke-dasharray="2 1"/><path d="M661.5 234.5L666.5 224.5" fill="none" stroke="#46ff00" stroke-width="2.0" stroke-dasharray="2 1"/><path d="M669.2 231.8L674.2 221.8" fill="none" stroke="#4fff00" stroke-width="2.0" stroke-dasharray="2 1"/><path d="M677.0 229.0L682.0 219.0" fill="none" stroke="#59ff00" stroke-width="2.0" stroke-dasharray="2 1"/><path d="M684.8 226.2L689.8 216.2" fill="none" stroke="#62ff00" stroke-width="2.0" stroke-dasharray="2 1"/><path d="M692.5 223.5L697.5 213.5" fill="none" stroke="#6cff00" stroke-width="2.0" stroke-dasharray="2 1"/><path d="M700.2 220.8L705.2 210.8" fill="none" stroke="#75ff00" stroke-width="2.0" stroke-dasharray="2 1"/><path d="M708.0 218.0L713.0 208.0" fill="none" stroke="#7fff00" stroke-width="2.0" stroke-dasharray="2 1"/><path d="M655.8 257.0h2.4v2.4h-2.4zM680.1 249.2h2.4v2.4h-2.4zM678.6 238.4h2.4v2.4h-2.4zM689.2 245.2h2.4v2.4h-2.4zM692.1 248.2h2.4v2.4h-2.4zM695.5 240.4h2.4v2.4h-2.4zM688.7 230.9h2.4v2.4h-2.4zM684.6 246.7h2.4v2.4h-2.4zM649.5 252.5h2.4v2.4h-2.4zM695.6 232.6h2.4v2.4h-2.4zM653.4 248.4h2.4v2.4h-2.4zM653.3 257.0h2.4v2.4h-2.4zM682.6 246.3h2.4v2.4h-2.4zM656.7 256.1h2.4v2.4h-2.4z" fill="#a5ff00"/><g clip-path="url(#i23)" fill="none" stroke="url(#i24)" stroke-width="2.0"><path d="M635.0 155.1L668.0 198.0M635.0 163.1L668.0 206.0M635.0 179.1L668.0 222.0" stroke-dasharray="2.5 2" stroke-dashoffset="0.0"/><path d="M635.0 171.1L668.0 214.0M635.0 251.1L668.0 294.0" stroke-dasharray="2.5 2" stroke-dashoffset="1.3"/><path d="M635.0 187.1L668.0 230.0M635.0 195.1L668.0 238.0M635.0 235.1L668.0 278.0" stroke-dasharray="2.5 2" stroke-dashoffset="2.6"/><path d="M635.0 203.1L668.0 246.0M635.0 211.1L668.0 254.0M635.0 219.1L668.0 262.0M635.0 227.1L668.0 270.0M635.0 243.1L668.0 286.0" stroke-dasharray="2.5 2" stroke-dashoffset="3.9"/></g><g clip-path="url(#i25)" fill="none" stroke="url(#i26)" stroke-width="1.8"><path d="M540.0 267.1L582.0 275.5M540.0 288.1L582.0 296.5" stroke-dasharray="4 1" stroke-dashoffset="0.0"/><path d="M540.0 281.1L582.0 289.5M540.0 291.6L582.0 300.0M540.0 295.1L582.0 303.5" stroke-dasharray="4 1" stroke-dashoffset="1.3"/><path d="M540.0 270.6L582.0 279.0M540.0 284.6L582.0 293.0" stroke-dasharray="4 1" stroke-dashoffset="2.6"/><path d="M540.0 274.1L582.0 282.5M540.0 277.6L582.0 286.0" stroke-dasharray="4 1" stroke-dashoffset="3.9"/></g><path d="M741.8 156.1h2.4v2.4h-2.4zM745.8 157.3h2.4v2.4h-2.4zM754.7 157.8h2.4v2.4h-2.4zM758.6 158.1h2.4v2.4h-2.4zM762.6 159.1h2.4v2.4h-2.4zM739.9 161.7h2.4v2.4h-2.4zM743.3 162.1h2.4v2.4h-2.4zM747.5 162.8h2.4v2.4h-2.4zM751.8 163.3h2.4v2.4h-2.4zM756.5 163.6h2.4v2.4h-2.4zM760.7 163.8h2.4v2.4h-2.4zM764.9 165.1h2.4v2.4h-2.4zM734.8 166.9h2.4v2.4h-2.4zM739.0 167.1h2.4v2.4h-2.4zM743.1 167.5h2.4v2.4h-2.4zM747.9 168.1h2.4v2.4h-2.4zM755.9 169.3h2.4v2.4h-2.4zM764.2 169.9h2.4v2.4h-2.4zM731.9 171.7h2.4v2.4h-2.4zM736.2 172.6h2.4v2.4h-2.4zM740.0 173.2h2.4v2.4h-2.4zM753.4 174.7h2.4v2.4h-2.4zM757.4 175.1h2.4v2.4h-2.4zM761.4 175.2h2.4v2.4h-2.4zM765.4 175.5h2.4v2.4h-2.4zM731.9 177.5h2.4v2.4h-2.4zM736.3 178.0h2.4v2.4h-2.4zM740.6 178.7h2.4v2.4h-2.4zM744.7 178.6h2.4v2.4h-2.4zM753.5 179.7h2.4v2.4h-2.4zM757.5 180.6h2.4v2.4h-2.4zM761.9 181.2h2.4v2.4h-2.4zM732.9 182.7h2.4v2.4h-2.4zM737.1 183.8h2.4v2.4h-2.4zM745.9 184.3h2.4v2.4h-2.4zM749.9 185.1h2.4v2.4h-2.4zM754.1 185.2h2.4v2.4h-2.4zM758.2 186.0h2.4v2.4h-2.4zM762.6 186.1h2.4v2.4h-2.4zM766.8 187.1h2.4v2.4h-2.4zM728.7 188.0h2.4v2.4h-2.4zM732.7 188.4h2.4v2.4h-2.4zM737.6 189.3h2.4v2.4h-2.4zM741.8 189.7h2.4v2.4h-2.4zM745.7 189.6h2.4v2.4h-2.4zM754.4 191.2h2.4v2.4h-2.4zM758.5 191.5h2.4v2.4h-2.4zM762.6 191.6h2.4v2.4h-2.4zM766.9 192.1h2.4v2.4h-2.4zM726.3 193.4h2.4v2.4h-2.4zM730.4 193.2h2.4v2.4h-2.4zM738.8 194.3h2.4v2.4h-2.4zM743.1 194.7h2.4v2.4h-2.4zM747.0 195.9h2.4v2.4h-2.4zM750.9 195.9h2.4v2.4h-2.4zM755.6 196.5h2.4v2.4h-2.4zM759.5 197.0h2.4v2.4h-2.4zM763.5 197.6h2.4v2.4h-2.4zM725.5 198.6h2.4v2.4h-2.4zM733.6 199.7h2.4v2.4h-2.4zM742.2 200.7h2.4v2.4h-2.4zM746.3 200.8h2.4v2.4h-2.4zM750.5 201.3h2.4v2.4h-2.4zM755.2 201.9h2.4v2.4h-2.4zM759.0 202.8h2.4v2.4h-2.4zM763.1 202.8h2.4v2.4h-2.4zM721.9 203.5h2.4v2.4h-2.4zM725.7 204.3h2.4v2.4h-2.4zM734.1 205.2h2.4v2.4h-2.4zM742.7 206.4h2.4v2.4h-2.4zM746.5 206.4h2.4v2.4h-2.4zM751.0 207.4h2.4v2.4h-2.4zM759.0 207.9h2.4v2.4h-2.4zM763.7 208.9h2.4v2.4h-2.4zM721.2 208.6h2.4v2.4h-2.4zM725.4 209.3h2.4v2.4h-2.4zM729.4 210.1h2.4v2.4h-2.4zM733.4 210.4h2.4v2.4h-2.4zM737.5 211.1h2.4v2.4h-2.4zM746.2 211.7h2.4v2.4h-2.4zM750.5 212.2h2.4v2.4h-2.4zM763.3 213.9h2.4v2.4h-2.4zM720.6 214.5h2.4v2.4h-2.4zM729.0 215.8h2.4v2.4h-2.4zM733.1 215.6h2.4v2.4h-2.4zM737.1 216.6h2.4v2.4h-2.4zM741.5 216.7h2.4v2.4h-2.4zM745.7 217.2h2.4v2.4h-2.4zM753.7 218.8h2.4v2.4h-2.4zM758.1 219.1h2.4v2.4h-2.4zM762.5 219.6h2.4v2.4h-2.4zM717.4 219.4h2.4v2.4h-2.4zM722.0 219.7h2.4v2.4h-2.4zM725.7 220.8h2.4v2.4h-2.4zM730.0 221.0h2.4v2.4h-2.4zM734.5 221.5h2.4v2.4h-2.4zM742.5 222.3h2.4v2.4h-2.4zM747.1 223.3h2.4v2.4h-2.4zM750.8 223.5h2.4v2.4h-2.4zM755.5 224.3h2.4v2.4h-2.4zM759.2 224.5h2.4v2.4h-2.4zM730.7 226.7h2.4v2.4h-2.4zM735.2 227.3h2.4v2.4h-2.4zM739.3 227.6h2.4v2.4h-2.4zM743.4 227.8h2.4v2.4h-2.4zM751.6 229.2h2.4v2.4h-2.4zM755.6 229.7h2.4v2.4h-2.4zM760.0 230.3h2.4v2.4h-2.4zM717.0 230.6h2.4v2.4h-2.4zM720.8 230.8h2.4v2.4h-2.4zM725.2 231.8h2.4v2.4h-2.4zM729.6 232.1h2.4v2.4h-2.4zM733.8 232.6h2.4v2.4h-2.4zM742.1 233.4h2.4v2.4h-2.4zM759.0 235.5h2.4v2.4h-2.4zM713.8 235.8h2.4v2.4h-2.4zM718.0 236.2h2.4v2.4h-2.4zM722.2 236.8h2.4v2.4h-2.4zM726.2 237.5h2.4v2.4h-2.4zM730.5 237.5h2.4v2.4h-2.4zM734.9 237.9h2.4v2.4h-2.4zM738.8 238.9h2.4v2.4h-2.4zM743.2 238.9h2.4v2.4h-2.4zM747.2 239.6h2.4v2.4h-2.4zM751.3 239.8h2.4v2.4h-2.4zM755.8 240.3h2.4v2.4h-2.4zM760.0 241.1h2.4v2.4h-2.4zM715.0 241.0h2.4v2.4h-2.4zM718.8 241.5h2.4v2.4h-2.4zM722.9 241.9h2.4v2.4h-2.4zM727.4 242.6h2.4v2.4h-2.4zM736.0 243.6h2.4v2.4h-2.4zM743.9 244.4h2.4v2.4h-2.4z" fill="url(#i27)"/><path d="M711.8 212.1h2.0v2.0h-2.0zM685.7 215.0h2.0v2.0h-2.0zM690.3 215.6h2.0v2.0h-2.0zM695.0 216.3h2.0v2.0h-2.0zM699.1 216.3h2.0v2.0h-2.0zM666.8 218.6h2.0v2.0h-2.0zM671.7 219.5h2.0v2.0h-2.0zM689.4 221.7h2.0v2.0h-2.0zM698.9 222.5h2.0v2.0h-2.0zM707.3 223.4h2.0v2.0h-2.0zM670.7 224.8h2.0v2.0h-2.0zM679.9 225.9h2.0v2.0h-2.0zM688.9 226.9h2.0v2.0h-2.0zM693.3 227.9h2.0v2.0h-2.0zM697.7 228.3h2.0v2.0h-2.0zM703.0 228.6h2.0v2.0h-2.0zM707.3 229.3h2.0v2.0h-2.0zM672.4 231.6h2.0v2.0h-2.0zM681.3 232.2h2.0v2.0h-2.0zM685.9 232.7h2.0v2.0h-2.0zM694.8 234.3h2.0v2.0h-2.0zM709.0 235.7h2.0v2.0h-2.0zM673.7 237.2h2.0v2.0h-2.0zM692.2 239.8h2.0v2.0h-2.0z" fill="url(#i28)"/><path d="M690.5 291.8h2.2v2.2h-2.2zM700.3 302.1h2.2v2.2h-2.2zM697.2 301.0h2.2v2.2h-2.2zM708.8 287.1h2.2v2.2h-2.2zM681.7 266.6h2.2v2.2h-2.2zM686.0 283.3h2.2v2.2h-2.2zM670.9 300.7h2.2v2.2h-2.2zM698.6 262.1h2.2v2.2h-2.2zM700.4 261.1h2.2v2.2h-2.2zM690.2 260.5h2.2v2.2h-2.2zM666.9 265.0h2.2v2.2h-2.2zM711.0 298.5h2.2v2.2h-2.2zM685.7 288.6h2.2v2.2h-2.2zM666.7 302.0h2.2v2.2h-2.2zM694.4 303.3h2.2v2.2h-2.2zM675.6 262.5h2.2v2.2h-2.2zM672.2 284.8h2.2v2.2h-2.2zM674.3 269.8h2.2v2.2h-2.2zM701.7 278.5h2.2v2.2h-2.2zM673.0 278.5h2.2v2.2h-2.2zM695.2 256.9h2.2v2.2h-2.2zM697.7 297.1h2.2v2.2h-2.2zM675.9 283.5h2.2v2.2h-2.2zM666.2 292.5h2.2v2.2h-2.2zM708.0 302.0h2.2v2.2h-2.2zM674.6 272.1h2.2v2.2h-2.2zM684.9 293.6h2.2v2.2h-2.2zM661.2 292.2h2.2v2.2h-2.2zM700.4 297.8h2.2v2.2h-2.2zM689.8 300.8h2.2v2.2h-2.2zM674.4 301.1h2.2v2.2h-2.2zM686.1 269.9h2.2v2.2h-2.2zM673.1 263.1h2.2v2.2h-2.2zM678.1 266.1h2.2v2.2h-2.2zM688.9 296.1h2.2v2.2h-2.2zM681.0 275.5h2.2v2.2h-2.2zM658.2 300.7h2.2v2.2h-2.2zM696.7 302.4h2.2v2.2h-2.2zM690.9 294.2h2.2v2.2h-2.2zM661.1 276.2h2.2v2.2h-2.2zM663.5 297.1h2.2v2.2h-2.2zM671.8 277.1h2.2v2.2h-2.2zM712.0 297.5h2.2v2.2h-2.2zM682.8 291.2h2.2v2.2h-2.2zM682.3 268.8h2.2v2.2h-2.2zM678.0 261.5h2.2v2.2h-2.2zM709.7 286.0h2.2v2.2h-2.2zM683.5 271.3h2.2v2.2h-2.2zM699.6 298.2h2.2v2.2h-2.2zM675.6 294.1h2.2v2.2h-2.2zM699.2 289.4h2.2v2.2h-2.2zM692.8 292.7h2.2v2.2h-2.2zM675.7 289.9h2.2v2.2h-2.2zM671.0 278.8h2.2v2.2h-2.2zM698.9 289.2h2.2v2.2h-2.2zM671.7 302.2h2.2v2.2h-2.2zM692.0 283.6h2.2v2.2h-2.2zM669.3 288.3h2.2v2.2h-2.2zM681.4 295.7h2.2v2.2h-2.2zM691.9 294.7h2.2v2.2h-2.2zM674.8 286.8h2.2v2.2h-2.2zM697.1 296.2h2.2v2.2h-2.2zM675.0 297.0h2.2v2.2h-2.2zM704.6 289.1h2.2v2.2h-2.2zM710.6 302.8h2.2v2.2h-2.2zM684.5 281.0h2.2v2.2h-2.2zM664.5 296.7h2.2v2.2h-2.2zM694.4 290.7h2.2v2.2h-2.2zM696.6 262.8h2.2v2.2h-2.2zM699.5 283.6h2.2v2.2h-2.2zM692.9 275.5h2.2v2.2h-2.2zM690.6 293.5h2.2v2.2h-2.2zM691.3 290.7h2.2v2.2h-2.2zM680.1 287.2h2.2v2.2h-2.2zM667.5 289.0h2.2v2.2h-2.2zM691.0 256.1h2.2v2.2h-2.2zM681.9 265.5h2.2v2.2h-2.2zM673.1 263.3h2.2v2.2h-2.2zM681.5 273.4h2.2v2.2h-2.2zM689.9 284.1h2.2v2.2h-2.2zM668.6 300.1h2.2v2.2h-2.2zM670.9 274.9h2.2v2.2h-2.2zM661.6 296.4h2.2v2.2h-2.2zM676.3 255.8h2.2v2.2h-2.2zM690.0 258.8h2.2v2.2h-2.2zM686.1 271.3h2.2v2.2h-2.2zM688.1 302.9h2.2v2.2h-2.2zM701.7 275.4h2.2v2.2h-2.2zM701.3 286.8h2.2v2.2h-2.2zM676.1 261.2h2.2v2.2h-2.2zM689.0 282.8h2.2v2.2h-2.2zM709.6 303.4h2.2v2.2h-2.2zM689.7 271.9h2.2v2.2h-2.2zM661.2 282.9h2.2v2.2h-2.2zM690.1 261.2h2.2v2.2h-2.2zM690.9 299.5h2.2v2.2h-2.2zM676.4 276.0h2.2v2.2h-2.2zM667.9 268.9h2.2v2.2h-2.2zM709.8 300.6h2.2v2.2h-2.2zM689.0 267.3h2.2v2.2h-2.2zM678.7 270.3h2.2v2.2h-2.2zM671.3 278.3h2.2v2.2h-2.2zM661.9 285.7h2.2v2.2h-2.2zM680.3 268.9h2.2v2.2h-2.2zM699.6 296.2h2.2v2.2h-2.2zM670.6 301.7h2.2v2.2h-2.2zM699.6 266.5h2.2v2.2h-2.2zM670.3 261.9h2.2v2.2h-2.2zM689.7 278.2h2.2v2.2h-2.2zM691.8 284.8h2.2v2.2h-2.2zM697.4 260.0h2.2v2.2h-2.2zM698.3 269.3h2.2v2.2h-2.2zM685.4 271.1h2.2v2.2h-2.2zM671.9 281.0h2.2v2.2h-2.2zM681.5 272.4h2.2v2.2h-2.2zM697.5 284.1h2.2v2.2h-2.2zM681.0 300.7h2.2v2.2h-2.2zM705.6 281.8h2.2v2.2h-2.2zM679.4 283.4h2.2v2.2h-2.2zM695.4 286.2h2.2v2.2h-2.2zM682.5 300.5h2.2v2.2h-2.2zM677.0 274.0h2.2v2.2h-2.2zM671.9 296.3h2.2v2.2h-2.2zM658.8 296.7h2.2v2.2h-2.2zM694.6 276.1h2.2v2.2h-2.2zM671.3 293.8h2.2v2.2h-2.2zM682.3 282.0h2.2v2.2h-2.2zM683.4 270.9h2.2v2.2h-2.2zM663.8 283.9h2.2v2.2h-2.2zM668.1 295.8h2.2v2.2h-2.2zM700.1 287.8h2.2v2.2h-2.2zM710.8 304.9h2.2v2.2h-2.2zM695.0 256.5h2.2v2.2h-2.2zM703.0 265.2h2.2v2.2h-2.2zM691.8 302.6h2.2v2.2h-2.2zM695.6 260.9h2.2v2.2h-2.2zM671.7 300.8h2.2v2.2h-2.2zM663.5 285.1h2.2v2.2h-2.2zM678.6 262.2h2.2v2.2h-2.2zM690.5 256.2h2.2v2.2h-2.2zM687.8 291.9h2.2v2.2h-2.2zM679.6 270.0h2.2v2.2h-2.2zM689.2 279.0h2.2v2.2h-2.2zM658.2 289.6h2.2v2.2h-2.2zM663.6 286.2h2.2v2.2h-2.2zM683.8 300.4h2.2v2.2h-2.2zM686.6 285.7h2.2v2.2h-2.2zM670.0 282.1h2.2v2.2h-2.2zM669.5 292.3h2.2v2.2h-2.2zM684.5 260.8h2.2v2.2h-2.2zM668.4 272.9h2.2v2.2h-2.2zM697.0 263.1h2.2v2.2h-2.2zM695.7 287.4h2.2v2.2h-2.2zM659.9 288.1h2.2v2.2h-2.2zM688.9 266.2h2.2v2.2h-2.2zM705.0 278.5h2.2v2.2h-2.2zM673.4 294.6h2.2v2.2h-2.2zM709.3 288.7h2.2v2.2h-2.2zM667.7 259.9h2.2v2.2h-2.2zM710.4 287.9h2.2v2.2h-2.2zM701.8 261.1h2.2v2.2h-2.2zM690.6 272.1h2.2v2.2h-2.2zM668.4 271.0h2.2v2.2h-2.2zM690.0 271.8h2.2v2.2h-2.2zM677.0 261.0h2.2v2.2h-2.2zM702.4 287.0h2.2v2.2h-2.2zM700.9 276.1h2.2v2.2h-2.2zM703.5 280.4h2.2v2.2h-2.2zM688.8 283.2h2.2v2.2h-2.2zM697.2 274.2h2.2v2.2h-2.2z" fill="url(#i29)"/><path d="M682.4 306.6h2.2v2.2h-2.2zM690.5 314.5h2.2v2.2h-2.2zM677.1 317.2h2.2v2.2h-2.2zM692.8 305.9h2.2v2.2h-2.2zM699.6 316.7h2.2v2.2h-2.2zM656.2 301.4h2.2v2.2h-2.2zM709.6 322.7h2.2v2.2h-2.2zM662.7 308.5h2.2v2.2h-2.2zM694.0 309.0h2.2v2.2h-2.2zM698.1 309.9h2.2v2.2h-2.2zM686.8 319.0h2.2v2.2h-2.2zM706.9 321.4h2.2v2.2h-2.2zM665.2 310.9h2.2v2.2h-2.2zM664.5 322.4h2.2v2.2h-2.2zM683.7 302.0h2.2v2.2h-2.2zM669.9 314.7h2.2v2.2h-2.2zM666.8 315.3h2.2v2.2h-2.2zM703.2 317.2h2.2v2.2h-2.2zM672.0 311.6h2.2v2.2h-2.2zM713.9 324.0h2.2v2.2h-2.2zM662.4 300.7h2.2v2.2h-2.2zM706.5 310.9h2.2v2.2h-2.2zM703.2 317.4h2.2v2.2h-2.2zM723.3 323.8h2.2v2.2h-2.2zM723.6 325.1h2.2v2.2h-2.2zM693.4 310.2h2.2v2.2h-2.2zM664.5 323.2h2.2v2.2h-2.2zM687.9 312.6h2.2v2.2h-2.2zM673.8 307.9h2.2v2.2h-2.2zM688.8 317.3h2.2v2.2h-2.2zM675.0 302.5h2.2v2.2h-2.2zM665.8 321.9h2.2v2.2h-2.2zM665.4 319.6h2.2v2.2h-2.2zM664.0 302.1h2.2v2.2h-2.2zM702.7 313.1h2.2v2.2h-2.2zM699.6 314.9h2.2v2.2h-2.2zM686.7 306.1h2.2v2.2h-2.2zM668.5 313.8h2.2v2.2h-2.2zM707.0 309.6h2.2v2.2h-2.2zM671.7 302.8h2.2v2.2h-2.2zM678.5 302.9h2.2v2.2h-2.2zM704.4 320.2h2.2v2.2h-2.2zM671.9 306.3h2.2v2.2h-2.2zM717.5 326.1h2.2v2.2h-2.2zM708.3 315.2h2.2v2.2h-2.2zM682.7 315.7h2.2v2.2h-2.2zM692.2 309.2h2.2v2.2h-2.2zM667.6 299.7h2.2v2.2h-2.2zM671.5 302.8h2.2v2.2h-2.2zM704.6 322.3h2.2v2.2h-2.2zM705.5 312.7h2.2v2.2h-2.2zM699.5 320.5h2.2v2.2h-2.2zM668.4 317.4h2.2v2.2h-2.2zM699.8 313.0h2.2v2.2h-2.2zM720.9 320.9h2.2v2.2h-2.2zM687.8 317.7h2.2v2.2h-2.2zM665.8 299.5h2.2v2.2h-2.2zM670.5 316.4h2.2v2.2h-2.2zM721.5 320.7h2.2v2.2h-2.2zM667.3 314.9h2.2v2.2h-2.2zM707.2 317.3h2.2v2.2h-2.2zM699.6 315.1h2.2v2.2h-2.2zM721.8 323.3h2.2v2.2h-2.2zM654.8 302.5h2.2v2.2h-2.2zM668.0 322.3h2.2v2.2h-2.2zM664.5 316.5h2.2v2.2h-2.2zM669.5 316.6h2.2v2.2h-2.2zM660.2 301.3h2.2v2.2h-2.2zM680.1 314.8h2.2v2.2h-2.2zM706.0 322.5h2.2v2.2h-2.2zM661.8 314.8h2.2v2.2h-2.2zM661.5 319.1h2.2v2.2h-2.2zM684.0 314.7h2.2v2.2h-2.2zM687.8 320.0h2.2v2.2h-2.2zM654.8 299.7h2.2v2.2h-2.2zM697.6 320.1h2.2v2.2h-2.2zM667.0 305.2h2.2v2.2h-2.2zM714.8 316.4h2.2v2.2h-2.2zM672.5 305.8h2.2v2.2h-2.2zM700.7 308.3h2.2v2.2h-2.2zM672.1 318.8h2.2v2.2h-2.2zM666.7 308.2h2.2v2.2h-2.2zM665.5 306.6h2.2v2.2h-2.2zM677.7 310.1h2.2v2.2h-2.2zM684.9 310.1h2.2v2.2h-2.2zM675.2 308.2h2.2v2.2h-2.2zM679.5 306.6h2.2v2.2h-2.2zM698.3 317.1h2.2v2.2h-2.2zM720.5 325.6h2.2v2.2h-2.2zM695.6 321.6h2.2v2.2h-2.2zM655.1 313.1h2.2v2.2h-2.2zM694.4 306.8h2.2v2.2h-2.2zM719.4 316.5h2.2v2.2h-2.2zM660.0 316.0h2.2v2.2h-2.2zM670.1 305.4h2.2v2.2h-2.2zM660.7 315.0h2.2v2.2h-2.2zM661.3 309.4h2.2v2.2h-2.2zM706.1 322.6h2.2v2.2h-2.2zM669.5 314.0h2.2v2.2h-2.2zM687.1 316.7h2.2v2.2h-2.2zM704.8 317.3h2.2v2.2h-2.2zM684.7 312.2h2.2v2.2h-2.2zM693.8 311.7h2.2v2.2h-2.2zM657.8 312.7h2.2v2.2h-2.2zM689.5 315.4h2.2v2.2h-2.2zM685.2 307.3h2.2v2.2h-2.2zM687.9 319.4h2.2v2.2h-2.2zM684.9 307.3h2.2v2.2h-2.2zM690.7 308.3h2.2v2.2h-2.2zM697.6 305.6h2.2v2.2h-2.2zM662.8 310.0h2.2v2.2h-2.2zM677.5 306.5h2.2v2.2h-2.2zM683.8 320.0h2.2v2.2h-2.2zM714.3 325.2h2.2v2.2h-2.2zM710.1 321.4h2.2v2.2h-2.2zM657.2 303.0h2.2v2.2h-2.2zM661.5 322.9h2.2v2.2h-2.2zM671.6 322.2h2.2v2.2h-2.2zM683.2 318.0h2.2v2.2h-2.2zM656.6 309.4h2.2v2.2h-2.2zM691.8 318.8h2.2v2.2h-2.2zM658.2 323.5h2.2v2.2h-2.2zM658.9 316.2h2.2v2.2h-2.2zM657.1 303.0h2.2v2.2h-2.2zM671.0 308.5h2.2v2.2h-2.2zM689.0 313.4h2.2v2.2h-2.2zM668.7 309.9h2.2v2.2h-2.2zM665.7 316.6h2.2v2.2h-2.2zM711.7 315.1h2.2v2.2h-2.2zM659.4 298.8h2.2v2.2h-2.2zM689.1 302.9h2.2v2.2h-2.2zM666.7 306.7h2.2v2.2h-2.2zM681.7 311.8h2.2v2.2h-2.2zM669.9 311.8h2.2v2.2h-2.2zM671.2 301.4h2.2v2.2h-2.2zM662.4 308.1h2.2v2.2h-2.2zM696.7 318.5h2.2v2.2h-2.2zM705.6 315.8h2.2v2.2h-2.2zM679.6 309.7h2.2v2.2h-2.2zM662.4 315.9h2.2v2.2h-2.2zM717.3 317.2h2.2v2.2h-2.2zM693.6 309.9h2.2v2.2h-2.2zM694.0 318.3h2.2v2.2h-2.2zM663.0 301.0h2.2v2.2h-2.2zM692.8 312.4h2.2v2.2h-2.2zM666.8 303.1h2.2v2.2h-2.2zM681.7 321.5h2.2v2.2h-2.2zM658.7 320.4h2.2v2.2h-2.2zM667.7 303.5h2.2v2.2h-2.2zM674.3 303.9h2.2v2.2h-2.2zM699.3 316.9h2.2v2.2h-2.2zM722.1 317.7h2.2v2.2h-2.2zM661.7 318.8h2.2v2.2h-2.2zM710.9 313.9h2.2v2.2h-2.2zM713.5 318.3h2.2v2.2h-2.2zM679.9 310.3h2.2v2.2h-2.2zM717.4 319.0h2.2v2.2h-2.2zM722.4 324.3h2.2v2.2h-2.2zM685.4 320.4h2.2v2.2h-2.2zM709.8 316.8h2.2v2.2h-2.2zM666.0 304.4h2.2v2.2h-2.2zM667.3 314.8h2.2v2.2h-2.2zM723.5 327.0h2.2v2.2h-2.2zM700.1 305.1h2.2v2.2h-2.2zM662.3 317.4h2.2v2.2h-2.2zM679.2 310.7h2.2v2.2h-2.2zM658.3 321.1h2.2v2.2h-2.2zM713.6 320.9h2.2v2.2h-2.2zM672.5 317.1h2.2v2.2h-2.2zM720.5 327.1h2.2v2.2h-2.2zM698.7 317.6h2.2v2.2h-2.2zM714.3 322.5h2.2v2.2h-2.2zM656.3 313.9h2.2v2.2h-2.2zM717.9 324.8h2.2v2.2h-2.2zM655.5 299.9h2.2v2.2h-2.2zM708.5 317.4h2.2v2.2h-2.2zM663.5 310.3h2.2v2.2h-2.2zM696.9 306.5h2.2v2.2h-2.2zM694.4 308.6h2.2v2.2h-2.2zM688.7 310.6h2.2v2.2h-2.2zM707.5 323.7h2.2v2.2h-2.2zM657.5 306.1h2.2v2.2h-2.2zM693.8 308.0h2.2v2.2h-2.2zM657.0 309.5h2.2v2.2h-2.2zM693.0 304.3h2.2v2.2h-2.2zM703.8 316.6h2.2v2.2h-2.2zM687.1 306.0h2.2v2.2h-2.2zM667.9 320.6h2.2v2.2h-2.2zM709.6 312.3h2.2v2.2h-2.2zM670.6 319.3h2.2v2.2h-2.2zM668.4 310.1h2.2v2.2h-2.2zM688.4 313.0h2.2v2.2h-2.2zM656.1 307.8h2.2v2.2h-2.2zM716.5 317.9h2.2v2.2h-2.2zM679.5 318.5h2.2v2.2h-2.2zM672.8 300.6h2.2v2.2h-2.2zM719.2 316.6h2.2v2.2h-2.2zM672.7 303.5h2.2v2.2h-2.2zM696.5 311.3h2.2v2.2h-2.2zM667.9 311.0h2.2v2.2h-2.2zM662.9 321.3h2.2v2.2h-2.2zM700.6 314.9h2.2v2.2h-2.2zM657.4 311.1h2.2v2.2h-2.2zM696.3 310.0h2.2v2.2h-2.2zM700.6 311.7h2.2v2.2h-2.2zM657.5 315.3h2.2v2.2h-2.2zM706.5 319.5h2.2v2.2h-2.2zM672.5 321.3h2.2v2.2h-2.2zM692.3 305.0h2.2v2.2h-2.2zM689.6 309.5h2.2v2.2h-2.2zM659.2 300.0h2.2v2.2h-2.2zM661.8 304.0h2.2v2.2h-2.2zM656.7 317.1h2.2v2.2h-2.2zM657.4 306.7h2.2v2.2h-2.2zM711.4 314.3h2.2v2.2h-2.2zM707.5 316.9h2.2v2.2h-2.2zM711.1 321.3h2.2v2.2h-2.2zM722.9 324.1h2.2v2.2h-2.2zM667.8 302.6h2.2v2.2h-2.2zM655.8 320.5h2.2v2.2h-2.2zM666.3 299.3h2.2v2.2h-2.2zM662.9 315.9h2.2v2.2h-2.2zM659.9 319.4h2.2v2.2h-2.2zM690.5 321.0h2.2v2.2h-2.2zM692.7 319.2h2.2v2.2h-2.2zM706.1 317.3h2.2v2.2h-2.2zM719.5 317.3h2.2v2.2h-2.2zM664.6 301.3h2.2v2.2h-2.2zM669.0 310.7h2.2v2.2h-2.2zM674.7 300.9h2.2v2.2h-2.2zM696.6 307.1h2.2v2.2h-2.2zM679.2 307.1h2.2v2.2h-2.2zM723.1 324.1h2.2v2.2h-2.2zM658.2 321.1h2.2v2.2h-2.2zM711.5 324.1h2.2v2.2h-2.2zM678.1 319.9h2.2v2.2h-2.2zM655.0 299.1h2.2v2.2h-2.2zM672.3 318.7h2.2v2.2h-2.2zM686.4 310.8h2.2v2.2h-2.2zM659.6 303.5h2.2v2.2h-2.2zM678.6 307.5h2.2v2.2h-2.2zM689.9 313.9h2.2v2.2h-2.2zM693.9 311.9h2.2v2.2h-2.2zM656.4 309.3h2.2v2.2h-2.2zM691.1 305.8h2.2v2.2h-2.2zM656.7 305.7h2.2v2.2h-2.2zM654.2 299.1h2.2v2.2h-2.2zM686.9 314.6h2.2v2.2h-2.2zM705.9 320.1h2.2v2.2h-2.2zM703.0 309.0h2.2v2.2h-2.2zM679.5 313.4h2.2v2.2h-2.2zM720.9 319.2h2.2v2.2h-2.2zM721.0 324.1h2.2v2.2h-2.2zM697.2 312.6h2.2v2.2h-2.2zM693.1 318.4h2.2v2.2h-2.2zM697.7 321.8h2.2v2.2h-2.2zM665.1 306.1h2.2v2.2h-2.2zM685.4 304.1h2.2v2.2h-2.2zM656.6 310.0h2.2v2.2h-2.2zM706.5 321.3h2.2v2.2h-2.2zM678.9 301.9h2.2v2.2h-2.2zM687.5 309.9h2.2v2.2h-2.2zM656.3 321.2h2.2v2.2h-2.2zM666.7 314.9h2.2v2.2h-2.2zM672.0 302.6h2.2v2.2h-2.2zM712.6 317.9h2.2v2.2h-2.2zM700.6 318.0h2.2v2.2h-2.2zM694.6 307.9h2.2v2.2h-2.2zM682.3 321.5h2.2v2.2h-2.2zM666.1 311.8h2.2v2.2h-2.2zM675.1 306.3h2.2v2.2h-2.2zM688.0 320.7h2.2v2.2h-2.2zM675.8 316.9h2.2v2.2h-2.2zM701.9 307.1h2.2v2.2h-2.2zM709.8 318.2h2.2v2.2h-2.2zM686.6 313.9h2.2v2.2h-2.2zM655.7 302.4h2.2v2.2h-2.2zM714.0 317.3h2.2v2.2h-2.2zM695.1 318.1h2.2v2.2h-2.2zM656.2 302.3h2.2v2.2h-2.2zM694.3 309.0h2.2v2.2h-2.2zM683.8 314.9h2.2v2.2h-2.2zM656.0 312.7h2.2v2.2h-2.2zM662.4 308.9h2.2v2.2h-2.2zM665.1 319.9h2.2v2.2h-2.2zM653.9 300.4h2.2v2.2h-2.2zM654.2 312.2h2.2v2.2h-2.2zM670.8 306.3h2.2v2.2h-2.2zM671.6 300.1h2.2v2.2h-2.2zM668.2 322.4h2.2v2.2h-2.2zM676.9 313.6h2.2v2.2h-2.2zM686.5 313.7h2.2v2.2h-2.2zM664.7 323.1h2.2v2.2h-2.2zM680.9 302.7h2.2v2.2h-2.2zM688.1 315.2h2.2v2.2h-2.2zM654.8 301.0h2.2v2.2h-2.2zM656.7 300.5h2.2v2.2h-2.2zM711.4 323.1h2.2v2.2h-2.2zM656.5 317.3h2.2v2.2h-2.2zM674.3 316.2h2.2v2.2h-2.2zM698.6 313.7h2.2v2.2h-2.2zM659.4 305.6h2.2v2.2h-2.2zM668.3 302.6h2.2v2.2h-2.2zM714.8 315.6h2.2v2.2h-2.2zM686.7 312.6h2.2v2.2h-2.2zM663.5 311.7h2.2v2.2h-2.2zM690.0 309.5h2.2v2.2h-2.2zM686.6 319.9h2.2v2.2h-2.2zM696.1 309.1h2.2v2.2h-2.2zM678.6 312.5h2.2v2.2h-2.2zM707.4 318.2h2.2v2.2h-2.2zM676.8 307.3h2.2v2.2h-2.2zM717.2 319.0h2.2v2.2h-2.2zM676.2 310.9h2.2v2.2h-2.2zM658.0 316.6h2.2v2.2h-2.2zM700.8 319.6h2.2v2.2h-2.2zM701.0 309.7h2.2v2.2h-2.2zM668.6 314.3h2.2v2.2h-2.2zM661.9 306.5h2.2v2.2h-2.2zM662.9 322.7h2.2v2.2h-2.2zM686.1 302.8h2.2v2.2h-2.2zM673.0 318.9h2.2v2.2h-2.2zM687.9 317.4h2.2v2.2h-2.2zM676.3 315.8h2.2v2.2h-2.2zM703.2 311.6h2.2v2.2h-2.2zM674.0 301.3h2.2v2.2h-2.2zM659.1 314.9h2.2v2.2h-2.2zM659.6 319.4h2.2v2.2h-2.2zM687.0 310.1h2.2v2.2h-2.2zM662.4 317.7h2.2v2.2h-2.2zM685.9 319.5h2.2v2.2h-2.2zM672.1 305.0h2.2v2.2h-2.2zM664.2 299.3h2.2v2.2h-2.2zM680.2 319.9h2.2v2.2h-2.2zM670.0 303.6h2.2v2.2h-2.2zM667.7 302.1h2.2v2.2h-2.2zM713.4 317.5h2.2v2.2h-2.2zM672.8 317.3h2.2v2.2h-2.2zM715.0 325.5h2.2v2.2h-2.2zM670.2 305.9h2.2v2.2h-2.2zM720.3 326.8h2.2v2.2h-2.2zM667.2 308.6h2.2v2.2h-2.2zM707.1 311.0h2.2v2.2h-2.2zM654.2 299.3h2.2v2.2h-2.2zM698.5 310.9h2.2v2.2h-2.2zM666.1 307.3h2.2v2.2h-2.2zM667.5 307.9h2.2v2.2h-2.2zM696.0 316.2h2.2v2.2h-2.2zM657.4 322.7h2.2v2.2h-2.2zM709.8 322.4h2.2v2.2h-2.2zM697.1 319.9h2.2v2.2h-2.2zM718.5 317.1h2.2v2.2h-2.2zM675.8 305.6h2.2v2.2h-2.2zM687.3 311.3h2.2v2.2h-2.2zM672.7 308.1h2.2v2.2h-2.2zM706.5 309.0h2.2v2.2h-2.2zM690.3 305.9h2.2v2.2h-2.2zM678.1 305.4h2.2v2.2h-2.2zM723.6 325.0h2.2v2.2h-2.2zM682.2 305.0h2.2v2.2h-2.2zM674.8 305.7h2.2v2.2h-2.2zM683.2 306.0h2.2v2.2h-2.2zM666.5 305.4h2.2v2.2h-2.2zM671.1 320.4h2.2v2.2h-2.2zM680.6 318.5h2.2v2.2h-2.2zM656.8 323.2h2.2v2.2h-2.2zM692.0 309.7h2.2v2.2h-2.2zM659.3 319.4h2.2v2.2h-2.2zM669.9 314.7h2.2v2.2h-2.2zM660.7 301.2h2.2v2.2h-2.2zM672.5 320.3h2.2v2.2h-2.2zM688.8 312.8h2.2v2.2h-2.2zM721.9 327.0h2.2v2.2h-2.2zM717.0 323.2h2.2v2.2h-2.2zM699.7 316.2h2.2v2.2h-2.2zM655.5 320.0h2.2v2.2h-2.2zM701.0 307.4h2.2v2.2h-2.2zM692.0 307.5h2.2v2.2h-2.2zM667.8 319.2h2.2v2.2h-2.2zM690.5 312.6h2.2v2.2h-2.2zM708.3 320.0h2.2v2.2h-2.2zM693.9 321.1h2.2v2.2h-2.2zM664.8 310.9h2.2v2.2h-2.2zM669.3 306.0h2.2v2.2h-2.2zM687.8 303.9h2.2v2.2h-2.2zM689.3 304.4h2.2v2.2h-2.2zM672.4 300.1h2.2v2.2h-2.2zM689.7 307.2h2.2v2.2h-2.2zM722.8 325.6h2.2v2.2h-2.2zM697.2 313.8h2.2v2.2h-2.2zM684.7 320.6h2.2v2.2h-2.2zM661.7 322.5h2.2v2.2h-2.2zM706.0 321.0h2.2v2.2h-2.2zM699.3 305.7h2.2v2.2h-2.2zM680.3 316.2h2.2v2.2h-2.2zM669.0 315.4h2.2v2.2h-2.2zM696.7 312.5h2.2v2.2h-2.2zM666.0 306.0h2.2v2.2h-2.2zM698.1 315.2h2.2v2.2h-2.2zM681.0 314.7h2.2v2.2h-2.2zM693.9 304.9h2.2v2.2h-2.2zM673.6 314.8h2.2v2.2h-2.2zM665.1 312.4h2.2v2.2h-2.2zM722.8 318.2h2.2v2.2h-2.2zM674.4 315.7h2.2v2.2h-2.2zM705.5 313.4h2.2v2.2h-2.2zM680.1 311.7h2.2v2.2h-2.2zM687.7 312.1h2.2v2.2h-2.2zM678.5 313.5h2.2v2.2h-2.2zM674.2 307.5h2.2v2.2h-2.2zM693.2 313.3h2.2v2.2h-2.2zM654.4 316.9h2.2v2.2h-2.2zM709.5 320.2h2.2v2.2h-2.2zM655.0 300.7h2.2v2.2h-2.2zM669.3 317.8h2.2v2.2h-2.2zM655.9 309.7h2.2v2.2h-2.2zM666.7 305.1h2.2v2.2h-2.2zM676.8 308.5h2.2v2.2h-2.2zM675.8 313.9h2.2v2.2h-2.2zM700.1 312.9h2.2v2.2h-2.2z" fill="url(#i30)"/><path d="M656.0 306.0L680.0 308.0L705.0 314.0L722.0 324.0L700.0 320.0L676.0 319.0L656.0 321.0Z" fill="#8cff00" opacity="0.8"/><g clip-path="url(#i31)" fill="none" stroke="#b2ff00" stroke-width="1.8"><path d="M700.0 318.0L769.0 316.6" stroke-dasharray="3 2" stroke-dashoffset="0.0"/><path d="M700.0 311.0L769.0 309.6" stroke-dasharray="3 2" stroke-dashoffset="1.3"/><path d="M700.0 300.5L769.0 299.1M700.0 314.5L769.0 313.1" stroke-dasharray="3 2" stroke-dashoffset="2.6"/><path d="M700.0 304.0L769.0 302.6M700.0 307.5L769.0 306.1" stroke-dasharray="3 2" stroke-dashoffset="3.9"/></g><path d="M642.5 324.2h2.4v2.4h-2.4zM648.6 324.5h2.4v2.4h-2.4zM649.0 336.1h2.4v2.4h-2.4zM659.6 332.8h2.4v2.4h-2.4zM672.4 325.9h2.4v2.4h-2.4zM656.4 315.6h2.4v2.4h-2.4zM667.4 313.9h2.4v2.4h-2.4zM652.7 316.7h2.4v2.4h-2.4zM665.5 324.8h2.4v2.4h-2.4zM657.7 326.8h2.4v2.4h-2.4zM669.5 339.4h2.4v2.4h-2.4zM653.0 336.7h2.4v2.4h-2.4zM664.8 331.5h2.4v2.4h-2.4zM674.2 317.8h2.4v2.4h-2.4zM651.1 325.5h2.4v2.4h-2.4zM650.7 320.2h2.4v2.4h-2.4zM647.0 337.8h2.4v2.4h-2.4zM674.0 336.5h2.4v2.4h-2.4z" fill="url(#i32)"/><path d="M724.5 255.7h2.2v2.2h-2.2zM727.8 255.9h2.2v2.2h-2.2zM731.0 256.5h2.2v2.2h-2.2zM734.0 256.8h2.2v2.2h-2.2zM737.5 257.2h2.2v2.2h-2.2zM740.7 257.1h2.2v2.2h-2.2zM743.7 257.9h2.2v2.2h-2.2zM725.2 260.0h2.2v2.2h-2.2zM734.4 261.2h2.2v2.2h-2.2zM737.3 261.6h2.2v2.2h-2.2zM740.8 261.9h2.2v2.2h-2.2zM743.7 261.7h2.2v2.2h-2.2zM747.1 262.1h2.2v2.2h-2.2zM722.8 264.1h2.2v2.2h-2.2zM725.9 264.9h2.2v2.2h-2.2zM729.4 265.4h2.2v2.2h-2.2zM735.7 265.5h2.2v2.2h-2.2zM738.8 266.2h2.2v2.2h-2.2zM744.9 266.6h2.2v2.2h-2.2zM748.1 267.2h2.2v2.2h-2.2zM751.8 267.2h2.2v2.2h-2.2zM728.0 269.8h2.2v2.2h-2.2zM731.3 270.0h2.2v2.2h-2.2zM737.8 270.1h2.2v2.2h-2.2zM740.7 270.8h2.2v2.2h-2.2zM743.9 271.1h2.2v2.2h-2.2zM747.1 271.5h2.2v2.2h-2.2zM750.9 271.8h2.2v2.2h-2.2zM725.7 274.0h2.2v2.2h-2.2zM735.4 274.9h2.2v2.2h-2.2zM738.8 275.3h2.2v2.2h-2.2zM741.8 275.2h2.2v2.2h-2.2zM745.0 275.2h2.2v2.2h-2.2zM726.4 278.0h2.2v2.2h-2.2zM732.9 278.5h2.2v2.2h-2.2zM736.0 279.3h2.2v2.2h-2.2zM738.5 279.2h2.2v2.2h-2.2zM741.8 280.2h2.2v2.2h-2.2zM723.3 282.1h2.2v2.2h-2.2zM726.3 282.7h2.2v2.2h-2.2zM729.2 283.1h2.2v2.2h-2.2zM732.7 283.1h2.2v2.2h-2.2zM735.6 283.7h2.2v2.2h-2.2zM738.9 283.8h2.2v2.2h-2.2zM742.6 284.3h2.2v2.2h-2.2zM745.4 284.4h2.2v2.2h-2.2zM748.9 285.0h2.2v2.2h-2.2zM751.8 285.2h2.2v2.2h-2.2zM723.8 287.0h2.2v2.2h-2.2zM726.8 287.4h2.2v2.2h-2.2zM733.1 288.3h2.2v2.2h-2.2zM736.3 288.1h2.2v2.2h-2.2zM739.0 288.7h2.2v2.2h-2.2zM742.8 288.5h2.2v2.2h-2.2zM745.4 289.2h2.2v2.2h-2.2zM752.3 290.2h2.2v2.2h-2.2zM723.1 291.7h2.2v2.2h-2.2zM726.3 291.4h2.2v2.2h-2.2zM729.7 291.7h2.2v2.2h-2.2zM739.1 293.1h2.2v2.2h-2.2zM742.1 293.1h2.2v2.2h-2.2z" fill="url(#i33)"/><path d="M727.2 299.7h2.0v2.0h-2.0zM730.7 299.1h2.0v2.0h-2.0zM733.9 299.4h2.0v2.0h-2.0zM737.6 298.9h2.0v2.0h-2.0zM722.1 303.6h2.0v2.0h-2.0zM725.5 303.5h2.0v2.0h-2.0zM729.4 303.6h2.0v2.0h-2.0zM732.6 303.4h2.0v2.0h-2.0zM736.3 303.3h2.0v2.0h-2.0zM746.4 302.3h2.0v2.0h-2.0zM749.7 302.1h2.0v2.0h-2.0zM753.3 302.1h2.0v2.0h-2.0zM756.6 301.8h2.0v2.0h-2.0zM720.0 307.8h2.0v2.0h-2.0zM723.3 308.0h2.0v2.0h-2.0zM730.6 307.0h2.0v2.0h-2.0zM734.0 307.0h2.0v2.0h-2.0zM740.8 307.2h2.0v2.0h-2.0zM744.4 306.7h2.0v2.0h-2.0zM748.2 306.9h2.0v2.0h-2.0zM755.0 306.0h2.0v2.0h-2.0zM758.9 306.0h2.0v2.0h-2.0zM765.4 305.9h2.0v2.0h-2.0zM735.5 311.0h2.0v2.0h-2.0zM738.6 310.8h2.0v2.0h-2.0zM742.6 311.1h2.0v2.0h-2.0zM746.3 311.0h2.0v2.0h-2.0zM752.7 310.0h2.0v2.0h-2.0zM756.2 310.2h2.0v2.0h-2.0zM725.0 315.9h2.0v2.0h-2.0zM729.0 315.8h2.0v2.0h-2.0zM732.2 315.6h2.0v2.0h-2.0zM739.0 314.7h2.0v2.0h-2.0zM750.1 314.8h2.0v2.0h-2.0zM753.2 314.3h2.0v2.0h-2.0zM722.0 319.7h2.0v2.0h-2.0zM726.1 319.5h2.0v2.0h-2.0z" fill="url(#i34)"/><path d="M651.1 378.1h2.4v2.4h-2.4zM641.7 365.2h2.4v2.4h-2.4zM637.9 342.4h2.4v2.4h-2.4zM722.9 340.5h2.4v2.4h-2.4zM689.7 353.0h2.4v2.4h-2.4zM672.1 354.7h2.4v2.4h-2.4zM647.9 371.5h2.4v2.4h-2.4zM638.3 341.7h2.4v2.4h-2.4zM631.9 343.3h2.4v2.4h-2.4zM667.9 375.1h2.4v2.4h-2.4zM665.3 335.7h2.4v2.4h-2.4zM654.0 379.6h2.4v2.4h-2.4zM635.9 361.0h2.4v2.4h-2.4zM665.1 363.0h2.4v2.4h-2.4zM661.5 364.6h2.4v2.4h-2.4zM676.3 362.5h2.4v2.4h-2.4zM713.8 359.1h2.4v2.4h-2.4zM643.2 333.2h2.4v2.4h-2.4zM718.0 354.4h2.4v2.4h-2.4zM648.0 377.3h2.4v2.4h-2.4zM683.8 366.4h2.4v2.4h-2.4zM711.9 344.3h2.4v2.4h-2.4z" fill="url(#i35)"/><path d="M428.2 407.6L438.0 398.0L448.0 380.0L457.3 361.0" fill="none" stroke="#ff2600" stroke-width="2.2"/><path d="M463.0 404.4L480.0 385.0L493.0 372.2" fill="none" stroke="#ff2600" stroke-width="2.0"/><path d="M385.5 417.3L453.4 440.5L513.5 463.8" fill="none" stroke="#ff2600" stroke-width="2.2"/><path d="M447.6 409.5L437.9 415.3L478.6 430.9L529.0 446.4L550.0 454.0" fill="none" stroke="#ff2600" stroke-width="2.2"/><path d="M521.0 365.8L561.8 374.4" fill="none" stroke="#ff2600" stroke-width="2.0"/><path d="M566.0 378.7L606.9 400.0" fill="none" stroke="#ff2600" stroke-width="2.0"/><path d="M566.0 370.0L624.0 383.0" fill="none" stroke="#ff2600" stroke-width="2.0"/><ellipse cx="534" cy="411.5" rx="58" ry="27.5" fill="none" stroke="#ff2600" stroke-width="4.0" transform="rotate(4 534 411.5)"/><ellipse cx="537.5" cy="413" rx="48" ry="22.5" fill="none" stroke="#ff2600" stroke-width="4.4" transform="rotate(4 537.5 413)"/><ellipse cx="541" cy="414" rx="38.5" ry="17.5" fill="none" stroke="#ff2600" stroke-width="4.6" transform="rotate(4 541 414)"/><path d="M456.5 419.5L546.8 451.8" fill="none" stroke="#9a9a9a" stroke-width="0.9"/><path d="M456.5 419.5L531.7 378.7" fill="none" stroke="#9a9a9a" stroke-width="0.9"/><path d="M464.0 415.4L554.3 447.7" fill="none" stroke="#9a9a9a" stroke-width="0.9"/><path d="M465.5 422.7L540.7 381.9" fill="none" stroke="#9a9a9a" stroke-width="0.9"/><path d="M471.5 411.3L561.8 443.6" fill="none" stroke="#9a9a9a" stroke-width="0.9"/><path d="M474.6 426.0L549.8 385.2" fill="none" stroke="#9a9a9a" stroke-width="0.9"/><path d="M479.1 407.3L569.4 439.6" fill="none" stroke="#9a9a9a" stroke-width="0.9"/><path d="M483.6 429.2L558.8 388.4" fill="none" stroke="#9a9a9a" stroke-width="0.9"/><path d="M486.6 403.2L576.9 435.5" fill="none" stroke="#9a9a9a" stroke-width="0.9"/><path d="M492.6 432.4L567.8 391.6" fill="none" stroke="#9a9a9a" stroke-width="0.9"/><path d="M494.1 399.1L584.4 431.4" fill="none" stroke="#9a9a9a" stroke-width="0.9"/><path d="M501.6 435.6L576.9 394.9" fill="none" stroke="#9a9a9a" stroke-width="0.9"/><path d="M501.6 395.0L591.9 427.3" fill="none" stroke="#9a9a9a" stroke-width="0.9"/><path d="M510.7 438.9L585.9 398.1" fill="none" stroke="#9a9a9a" stroke-width="0.9"/><path d="M509.1 390.9L599.4 423.2" fill="none" stroke="#9a9a9a" stroke-width="0.9"/><path d="M519.7 442.1L594.9 401.3" fill="none" stroke="#9a9a9a" stroke-width="0.9"/><path d="M516.7 386.9L607.0 419.2" fill="none" stroke="#9a9a9a" stroke-width="0.9"/><path d="M528.7 445.3L603.9 404.5" fill="none" stroke="#9a9a9a" stroke-width="0.9"/><path d="M524.2 382.8L614.5 415.1" fill="none" stroke="#9a9a9a" stroke-width="0.9"/><path d="M537.8 448.6L613.0 407.8" fill="none" stroke="#9a9a9a" stroke-width="0.9"/><path d="M531.7 378.7L622.0 411.0" fill="none" stroke="#9a9a9a" stroke-width="0.9"/><path d="M546.8 451.8L622.0 411.0" fill="none" stroke="#9a9a9a" stroke-width="0.9"/><g clip-path="url(#i36)" fill="none" stroke="url(#i37)" stroke-width="2.0"><path d="M522.0 319.8L550.0 319.8M522.0 324.2L550.0 324.2M522.0 335.2L550.0 335.2M522.0 337.4L550.0 337.4" stroke-dasharray="2.5 0.6" stroke-dashoffset="0.0"/><path d="M522.0 330.8L550.0 330.8M522.0 341.8L550.0 341.8" stroke-dasharray="2.5 0.6" stroke-dashoffset="1.3"/><path d="M522.0 322.0L550.0 322.0M522.0 328.6L550.0 328.6M522.0 339.6L550.0 339.6M522.0 344.0L550.0 344.0" stroke-dasharray="2.5 0.6" stroke-dashoffset="2.6"/><path d="M522.0 326.4L550.0 326.4M522.0 333.0L550.0 333.0M522.0 346.2L550.0 346.2" stroke-dasharray="2.5 0.6" stroke-dashoffset="3.9"/></g><g clip-path="url(#i38)" fill="none" stroke="url(#i39)" stroke-width="2.0"><path d="M555.0 327.0L590.0 327.0M555.0 333.6L590.0 333.6M555.0 340.2L590.0 340.2M555.0 346.8L590.0 346.8M555.0 349.0L590.0 349.0M555.0 355.6L590.0 355.6" stroke-dasharray="2.5 0.6" stroke-dashoffset="0.0"/><path d="M555.0 324.8L590.0 324.8M555.0 331.4L590.0 331.4M555.0 335.8L590.0 335.8" stroke-dasharray="2.5 0.6" stroke-dashoffset="1.3"/><path d="M555.0 329.2L590.0 329.2M555.0 338.0L590.0 338.0M555.0 342.4L590.0 342.4M555.0 344.6L590.0 344.6" stroke-dasharray="2.5 0.6" stroke-dashoffset="2.6"/><path d="M555.0 351.2L590.0 351.2M555.0 353.4L590.0 353.4" stroke-dasharray="2.5 0.6" stroke-dashoffset="3.9"/></g><g clip-path="url(#i40)" fill="none" stroke="url(#i41)" stroke-width="1.8"><path d="M575.0 351.4L595.0 353.4M575.0 353.8L595.0 355.8" stroke-dasharray="2 0.8" stroke-dashoffset="0.0"/><path d="M575.0 349.0L595.0 351.0" stroke-dasharray="2 0.8" stroke-dashoffset="1.3"/><path d="M575.0 346.6L595.0 348.6M575.0 356.2L595.0 358.2M575.0 358.6L595.0 360.6M575.0 361.0L595.0 363.0M575.0 363.4L595.0 365.4" stroke-dasharray="2 0.8" stroke-dashoffset="2.6"/><path d="M575.0 365.8L595.0 367.8" stroke-dasharray="2 0.8" stroke-dashoffset="3.9"/></g><g clip-path="url(#i42)" fill="none" stroke="url(#i43)" stroke-width="1.8"><path d="M548.0 283.4L580.0 293.0M548.0 286.4L580.0 296.0M548.0 310.4L580.0 320.0M548.0 316.4L580.0 326.0" stroke-dasharray="3 1.5" stroke-dashoffset="0.0"/><path d="M548.0 289.4L580.0 299.0M548.0 298.4L580.0 308.0" stroke-dasharray="3 1.5" stroke-dashoffset="1.3"/><path d="M548.0 280.4L580.0 290.0M548.0 301.4L580.0 311.0M548.0 319.4L580.0 329.0" stroke-dasharray="3 1.5" stroke-dashoffset="2.6"/><path d="M548.0 292.4L580.0 302.0M548.0 295.4L580.0 305.0M548.0 304.4L580.0 314.0M548.0 307.4L580.0 317.0M548.0 313.4L580.0 323.0" stroke-dasharray="3 1.5" stroke-dashoffset="3.9"/></g><g clip-path="url(#i44)" fill="none" stroke="#ff3300" stroke-width="1.6"><path d="M609.0 286.9L628.0 288.8M609.0 290.1L628.0 292.0M609.0 293.3L628.0 295.2M609.0 296.5L628.0 298.4M609.0 302.9L628.0 304.8" stroke-dasharray="4 1" stroke-dashoffset="1.3"/><path d="M609.0 299.7L628.0 301.6M609.0 306.1L628.0 308.0" stroke-dasharray="4 1" stroke-dashoffset="3.9"/></g><path d="M593.2 308.1h2.2v2.2h-2.2zM600.9 324.1h2.2v2.2h-2.2zM595.8 308.1h2.2v2.2h-2.2zM597.6 326.2h2.2v2.2h-2.2zM595.9 325.7h2.2v2.2h-2.2zM606.2 308.8h2.2v2.2h-2.2zM603.7 317.5h2.2v2.2h-2.2zM601.3 332.9h2.2v2.2h-2.2zM594.9 305.6h2.2v2.2h-2.2zM611.8 316.3h2.2v2.2h-2.2zM597.0 314.2h2.2v2.2h-2.2zM600.3 331.7h2.2v2.2h-2.2zM597.2 311.1h2.2v2.2h-2.2zM604.7 320.3h2.2v2.2h-2.2zM612.1 328.5h2.2v2.2h-2.2zM600.1 310.7h2.2v2.2h-2.2zM609.7 332.7h2.2v2.2h-2.2zM593.6 325.6h2.2v2.2h-2.2zM610.4 323.2h2.2v2.2h-2.2zM597.4 327.3h2.2v2.2h-2.2zM607.6 310.4h2.2v2.2h-2.2zM605.8 311.1h2.2v2.2h-2.2zM593.8 314.4h2.2v2.2h-2.2zM599.7 316.1h2.2v2.2h-2.2zM605.9 328.4h2.2v2.2h-2.2zM612.2 332.3h2.2v2.2h-2.2zM612.9 327.1h2.2v2.2h-2.2zM599.1 309.9h2.2v2.2h-2.2zM605.5 320.3h2.2v2.2h-2.2zM606.5 307.6h2.2v2.2h-2.2z" fill="url(#i45)"/><g clip-path="url(#i46)" fill="none" stroke="#ff7f00" stroke-width="1.8"><path d="M621.0 337.2L641.0 341.2M621.0 339.8L641.0 343.8" stroke-dasharray="2 1" stroke-dashoffset="0.0"/><path d="M621.0 332.0L641.0 336.0M621.0 345.0L641.0 349.0M621.0 347.6L641.0 351.6" stroke-dasharray="2 1" stroke-dashoffset="1.3"/><path d="M621.0 329.4L641.0 333.4M621.0 350.2L641.0 354.2" stroke-dasharray="2 1" stroke-dashoffset="2.6"/><path d="M621.0 334.6L641.0 338.6M621.0 342.4L641.0 346.4" stroke-dasharray="2 1" stroke-dashoffset="3.9"/></g><g clip-path="url(#i47)" fill="none" stroke="#ff8c00" stroke-width="1.8"><path d="M639.0 337.4L658.0 341.2" stroke-dasharray="2 1.2" stroke-dashoffset="0.0"/><path d="M639.0 329.6L658.0 333.4M639.0 332.2L658.0 336.0M639.0 342.6L658.0 346.4M639.0 345.2L658.0 349.0" stroke-dasharray="2 1.2" stroke-dashoffset="1.3"/><path d="M639.0 340.0L658.0 343.8M639.0 347.8L658.0 351.6M639.0 350.4L658.0 354.2M639.0 353.0L658.0 356.8" stroke-dasharray="2 1.2" stroke-dashoffset="2.6"/><path d="M639.0 334.8L658.0 338.6" stroke-dasharray="2 1.2" stroke-dashoffset="3.9"/></g><path d="M665.4 341.7h2.2v2.2h-2.2zM681.2 379.5h2.2v2.2h-2.2zM694.7 369.6h2.2v2.2h-2.2zM667.0 358.0h2.2v2.2h-2.2zM719.0 358.8h2.2v2.2h-2.2zM726.1 378.5h2.2v2.2h-2.2zM712.9 337.0h2.2v2.2h-2.2zM719.0 376.0h2.2v2.2h-2.2zM684.7 339.0h2.2v2.2h-2.2zM681.7 381.1h2.2v2.2h-2.2zM671.7 374.8h2.2v2.2h-2.2zM711.7 361.3h2.2v2.2h-2.2zM700.3 372.4h2.2v2.2h-2.2zM701.1 342.6h2.2v2.2h-2.2zM683.1 343.4h2.2v2.2h-2.2zM693.4 374.7h2.2v2.2h-2.2zM691.2 368.6h2.2v2.2h-2.2zM706.3 332.7h2.2v2.2h-2.2zM681.1 351.2h2.2v2.2h-2.2zM694.4 382.5h2.2v2.2h-2.2zM720.4 364.0h2.2v2.2h-2.2zM696.8 358.0h2.2v2.2h-2.2zM675.8 350.7h2.2v2.2h-2.2zM710.6 340.7h2.2v2.2h-2.2zM719.5 358.0h2.2v2.2h-2.2z" fill="url(#i48)"/><path d="M504.0 335.1h2.2v2.2h-2.2zM514.3 325.5h2.2v2.2h-2.2zM518.2 323.0h2.2v2.2h-2.2zM507.4 334.7h2.2v2.2h-2.2zM502.2 330.0h2.2v2.2h-2.2zM519.6 335.2h2.2v2.2h-2.2zM492.7 326.4h2.2v2.2h-2.2zM505.5 337.9h2.2v2.2h-2.2zM497.9 340.9h2.2v2.2h-2.2zM519.0 333.0h2.2v2.2h-2.2zM508.6 321.2h2.2v2.2h-2.2zM482.4 344.5h2.2v2.2h-2.2z" fill="url(#i49)"/><path d="M488.3 338.7L515.5 343.6L562.4 353.5L620.8 373.8L653.8 378.8" fill="none" stroke="#ff2600" stroke-width="2.0"/><path d="M521.8 364.9L565.0 373.8" fill="none" stroke="#ff2600" stroke-width="2.0"/><path d="M565.0 371.0L620.8 389.0" fill="none" stroke="#ff2600" stroke-width="2.0"/><path d="M511.7 366.0L491.4 399.0" fill="none" stroke="#ff2600" stroke-width="2.0"/><path d="M494.0 371.0L471.0 400.0" fill="none" stroke="#ff2600" stroke-width="2.0"/><path d="M488.8 340.8L489.0 352.0" fill="none" stroke="#ff2600" stroke-width="2.0"/><path d="M470.0 461.0L494.0 461.0L492.0 481.0L484.0 484.0L472.0 480.0Z" fill="#ff7200"/><path d="M452.0 448.0L468.0 448.0L466.0 462.0L453.0 461.0Z" fill="#ff8c00"/><path d="M418.0 457.0L436.0 458.0L435.0 464.0L419.0 463.0Z" fill="#ff9900"/><g clip-path="url(#i50)" fill="none" stroke="url(#i51)" stroke-width="2.0"><path d="M413.0 492.4L441.0 491.0M413.0 498.8L441.0 497.4M413.0 505.2L441.0 503.8M413.0 508.4L441.0 507.0" stroke-dasharray="3 1" stroke-dashoffset="0.0"/><path d="M413.0 486.0L441.0 484.6M413.0 495.6L441.0 494.2M413.0 511.6L441.0 510.2" stroke-dasharray="3 1" stroke-dashoffset="1.3"/><path d="M413.0 502.0L441.0 500.6" stroke-dasharray="3 1" stroke-dashoffset="2.6"/><path d="M413.0 482.8L441.0 481.4M413.0 489.2L441.0 487.8" stroke-dasharray="3 1" stroke-dashoffset="3.9"/></g><g clip-path="url(#i52)" fill="none" stroke="url(#i53)" stroke-width="2.0"><path d="M611.0 359.8L742.0 392.6M611.0 362.2L742.0 395.0M611.0 374.2L742.0 407.0M611.0 383.8L742.0 416.6M611.0 391.0L742.0 423.8M611.0 403.0L742.0 435.8M611.0 407.8L742.0 440.6M611.0 412.6L742.0 445.4M611.0 422.2L742.0 455.0M611.0 424.6L742.0 457.4" stroke-dasharray="2 0.6" stroke-dashoffset="0.0"/><path d="M611.0 371.8L742.0 404.6M611.0 381.4L742.0 414.2M611.0 388.6L742.0 421.4M611.0 398.2L742.0 431.0M611.0 405.4L742.0 438.2" stroke-dasharray="2 0.6" stroke-dashoffset="1.3"/><path d="M611.0 350.2L742.0 383.0M611.0 355.0L742.0 387.8M611.0 357.4L742.0 390.2M611.0 364.6L742.0 397.4M611.0 367.0L742.0 399.8M611.0 369.4L742.0 402.2M611.0 386.2L742.0 419.0M611.0 395.8L742.0 428.6M611.0 400.6L742.0 433.4M611.0 410.2L742.0 443.0M611.0 415.0L742.0 447.8M611.0 417.4L742.0 450.2" stroke-dasharray="2 0.6" stroke-dashoffset="2.6"/><path d="M611.0 347.9L742.0 380.6M611.0 352.6L742.0 385.4M611.0 376.6L742.0 409.4M611.0 379.0L742.0 411.8M611.0 393.4L742.0 426.2M611.0 419.8L742.0 452.6" stroke-dasharray="2 0.6" stroke-dashoffset="3.9"/></g><g clip-path="url(#i54)" fill="none" stroke="#ff1900" stroke-width="1.6"><path d="M638.0 375.4L740.0 404.0M638.0 383.4L740.0 412.0M638.0 407.4L740.0 436.0M638.0 411.4L740.0 440.0M638.0 427.4L740.0 456.0" stroke-dasharray="2 2" stroke-dashoffset="0.0"/><path d="M638.0 367.4L740.0 396.0M638.0 371.4L740.0 400.0M638.0 391.4L740.0 420.0M638.0 399.4L740.0 428.0" stroke-dasharray="2 2" stroke-dashoffset="1.3"/><path d="M638.0 415.4L740.0 444.0M638.0 419.4L740.0 448.0M638.0 423.4L740.0 452.0M638.0 431.4L740.0 460.0" stroke-dasharray="2 2" stroke-dashoffset="2.6"/><path d="M638.0 363.4L740.0 392.0M638.0 379.4L740.0 408.0M638.0 387.4L740.0 416.0M638.0 395.4L740.0 424.0M638.0 403.4L740.0 432.0M638.0 435.4L740.0 464.0" stroke-dasharray="2 2" stroke-dashoffset="3.9"/></g><g clip-path="url(#i55)" fill="none" stroke="url(#i56)" stroke-width="2.0"><path d="M562.0 414.1L671.0 463.2M562.0 421.3L671.0 470.4M562.0 447.7L671.0 496.8M562.0 454.9L671.0 504.0M562.0 459.7L671.0 508.8M562.0 471.7L671.0 520.8M562.0 476.5L671.0 525.6M562.0 486.1L671.0 535.2M562.0 488.5L671.0 537.6M562.0 500.5L671.0 549.6" stroke-dasharray="2 0.8" stroke-dashoffset="0.0"/><path d="M562.0 423.7L671.0 472.8M562.0 450.1L671.0 499.2M562.0 474.1L671.0 523.2M562.0 478.9L671.0 528.0M562.0 481.3L671.0 530.4M562.0 498.1L671.0 547.2M562.0 502.9L671.0 552.0M562.0 507.7L671.0 556.8M562.0 510.1L671.0 559.2" stroke-dasharray="2 0.8" stroke-dashoffset="1.3"/><path d="M562.0 404.6L671.0 453.6M562.0 406.9L671.0 456.0M562.0 411.7L671.0 460.8M562.0 418.9L671.0 468.0M562.0 426.1L671.0 475.2M562.0 428.5L671.0 477.6M562.0 430.9L671.0 480.0M562.0 433.3L671.0 482.4M562.0 435.7L671.0 484.8M562.0 438.1L671.0 487.2M562.0 440.5L671.0 489.6M562.0 442.9L671.0 492.0M562.0 445.3L671.0 494.4M562.0 452.5L671.0 501.6M562.0 457.3L671.0 506.4M562.0 462.1L671.0 511.2M562.0 464.5L671.0 513.6M562.0 466.9L671.0 516.0M562.0 469.3L671.0 518.4M562.0 495.7L671.0 544.8M562.0 505.3L671.0 554.4" stroke-dasharray="2 0.8" stroke-dashoffset="2.6"/><path d="M562.0 409.3L671.0 458.4M562.0 416.5L671.0 465.6M562.0 483.7L671.0 532.8M562.0 490.9L671.0 540.0M562.0 493.3L671.0 542.4" stroke-dasharray="2 0.8" stroke-dashoffset="3.9"/></g><g clip-path="url(#i57)" fill="none" stroke="#ff0c00" stroke-width="1.6"><path d="M598.0 437.1L671.0 470.0M598.0 469.1L671.0 502.0M598.0 477.1L671.0 510.0M598.0 481.1L671.0 514.0M598.0 509.1L671.0 542.0M598.0 513.1L671.0 546.0" stroke-dasharray="2 2" stroke-dashoffset="0.0"/><path d="M598.0 449.1L671.0 482.0M598.0 457.1L671.0 490.0M598.0 461.1L671.0 494.0M598.0 473.1L671.0 506.0M598.0 485.1L671.0 518.0M598.0 489.1L671.0 522.0" stroke-dasharray="2 2" stroke-dashoffset="1.3"/><path d="M598.0 493.1L671.0 526.0M598.0 497.1L671.0 530.0M598.0 517.1L671.0 550.0" stroke-dasharray="2 2" stroke-dashoffset="2.6"/><path d="M598.0 433.1L671.0 466.0M598.0 441.1L671.0 474.0M598.0 445.1L671.0 478.0M598.0 453.1L671.0 486.0M598.0 465.1L671.0 498.0M598.0 501.1L671.0 534.0M598.0 505.1L671.0 538.0" stroke-dasharray="2 2" stroke-dashoffset="3.9"/></g><g clip-path="url(#i58)" fill="none" stroke="url(#i59)" stroke-width="1.9"><path d="M543.0 402.2L622.0 382.4M543.0 432.6L622.0 412.9M543.0 463.0L622.0 443.3M543.0 466.8L622.0 447.1" stroke-dasharray="7 2.2" stroke-dashoffset="0.0"/><path d="M543.0 406.0L622.0 386.2M543.0 417.4L622.0 397.7M543.0 421.2L622.0 401.5M543.0 451.6L622.0 431.9M543.0 470.6L622.0 450.9M543.0 482.0L622.0 462.3" stroke-dasharray="7 2.2" stroke-dashoffset="1.3"/><path d="M543.0 413.6L622.0 393.9M543.0 428.8L622.0 409.1M543.0 440.2L622.0 420.5M543.0 459.2L622.0 439.5M543.0 478.2L622.0 458.5M543.0 485.8L622.0 466.1" stroke-dasharray="7 2.2" stroke-dashoffset="2.6"/><path d="M543.0 409.8L622.0 390.1M543.0 425.0L622.0 405.3M543.0 436.4L622.0 416.7M543.0 444.0L622.0 424.3M543.0 447.8L622.0 428.1M543.0 455.4L622.0 435.7M543.0 474.4L622.0 454.7" stroke-dasharray="7 2.2" stroke-dashoffset="3.9"/></g><g clip-path="url(#i60)" fill="none" stroke="url(#i61)" stroke-width="1.9"><path d="M516.0 507.8L592.0 488.8M516.0 516.6L592.0 497.6" stroke-dasharray="5 3" stroke-dashoffset="0.0"/><path d="M516.0 450.6L592.0 431.6M516.0 468.2L592.0 449.2M516.0 477.0L592.0 458.0M516.0 481.4L592.0 462.4M516.0 485.8L592.0 466.8M516.0 494.6L592.0 475.6M516.0 503.4L592.0 484.4M516.0 521.0L592.0 502.0M516.0 525.4L592.0 506.4" stroke-dasharray="5 3" stroke-dashoffset="1.3"/><path d="M516.0 463.8L592.0 444.8M516.0 472.6L592.0 453.6M516.0 499.0L592.0 480.0" stroke-dasharray="5 3" stroke-dashoffset="2.6"/><path d="M516.0 455.0L592.0 436.0M516.0 459.4L592.0 440.4M516.0 490.2L592.0 471.2M516.0 512.2L592.0 493.2" stroke-dasharray="5 3" stroke-dashoffset="3.9"/></g><path d="M538.3 441.9h2.0v2.0h-2.0zM544.2 441.0h2.0v2.0h-2.0zM518.5 449.8h2.0v2.0h-2.0zM521.8 449.8h2.0v2.0h-2.0zM524.9 449.3h2.0v2.0h-2.0zM527.4 448.8h2.0v2.0h-2.0zM536.6 447.5h2.0v2.0h-2.0zM521.8 454.2h2.0v2.0h-2.0zM533.7 452.7h2.0v2.0h-2.0zM536.5 452.4h2.0v2.0h-2.0zM539.4 451.5h2.0v2.0h-2.0zM521.4 459.1h2.0v2.0h-2.0zM524.2 458.7h2.0v2.0h-2.0zM527.7 458.3h2.0v2.0h-2.0zM530.2 458.2h2.0v2.0h-2.0zM533.3 457.6h2.0v2.0h-2.0zM539.2 456.8h2.0v2.0h-2.0zM519.7 464.6h2.0v2.0h-2.0zM522.6 464.6h2.0v2.0h-2.0zM528.7 463.7h2.0v2.0h-2.0zM531.6 462.9h2.0v2.0h-2.0zM534.4 462.3h2.0v2.0h-2.0zM537.2 462.0h2.0v2.0h-2.0zM540.8 461.7h2.0v2.0h-2.0zM543.8 460.9h2.0v2.0h-2.0zM519.3 469.6h2.0v2.0h-2.0zM522.2 469.6h2.0v2.0h-2.0zM525.7 468.7h2.0v2.0h-2.0zM528.4 468.1h2.0v2.0h-2.0zM531.3 467.9h2.0v2.0h-2.0zM540.5 466.3h2.0v2.0h-2.0zM521.7 474.0h2.0v2.0h-2.0zM525.3 473.7h2.0v2.0h-2.0zM527.9 473.4h2.0v2.0h-2.0zM534.1 472.7h2.0v2.0h-2.0zM540.3 471.7h2.0v2.0h-2.0zM543.1 471.5h2.0v2.0h-2.0zM520.4 479.6h2.0v2.0h-2.0zM526.5 479.1h2.0v2.0h-2.0zM529.4 477.9h2.0v2.0h-2.0zM532.9 477.5h2.0v2.0h-2.0zM528.5 483.1h2.0v2.0h-2.0zM531.7 483.0h2.0v2.0h-2.0zM534.5 482.5h2.0v2.0h-2.0zM536.9 481.9h2.0v2.0h-2.0zM540.6 481.5h2.0v2.0h-2.0zM521.0 489.8h2.0v2.0h-2.0zM523.4 489.1h2.0v2.0h-2.0zM529.3 488.2h2.0v2.0h-2.0zM532.3 487.9h2.0v2.0h-2.0zM535.8 487.1h2.0v2.0h-2.0zM538.6 486.8h2.0v2.0h-2.0zM544.6 486.3h2.0v2.0h-2.0zM525.0 493.6h2.0v2.0h-2.0zM530.9 492.8h2.0v2.0h-2.0zM533.6 493.0h2.0v2.0h-2.0zM536.6 492.3h2.0v2.0h-2.0zM539.7 491.4h2.0v2.0h-2.0zM542.9 491.2h2.0v2.0h-2.0zM518.8 499.8h2.0v2.0h-2.0zM528.0 498.9h2.0v2.0h-2.0zM534.7 502.8h2.0v2.0h-2.0zM538.1 501.9h2.0v2.0h-2.0z" fill="url(#i62)"/><path d="M583.2 500.2h2v2h-2zM589.2 504.0h2v2h-2zM585.0 493.1h2v2h-2zM590.1 499.5h2v2h-2zM585.3 499.9h2v2h-2zM586.4 501.4h2v2h-2zM583.3 492.6h2v2h-2zM591.9 494.7h2v2h-2zM584.9 501.9h2v2h-2zM588.9 491.4h2v2h-2zM588.1 499.6h2v2h-2zM583.8 499.4h2v2h-2zM583.4 494.4h2v2h-2zM582.9 492.3h2v2h-2zM592.8 495.5h2v2h-2zM592.9 496.0h2v2h-2zM588.7 503.0h2v2h-2zM589.6 490.8h2v2h-2z" fill="#ff7f00"/><g clip-path="url(#i64)" fill="none" stroke="#ff7f00" stroke-width="1.8"><path d="M551.0 509.5L574.0 509.5M551.0 523.5L574.0 523.5M551.0 530.5L574.0 530.5" stroke-dasharray="2 1" stroke-dashoffset="0.0"/><path d="M551.0 516.5L574.0 516.5" stroke-dasharray="2 1" stroke-dashoffset="1.3"/><path d="M551.0 527.0L574.0 527.0M551.0 534.0L574.0 534.0" stroke-dasharray="2 1" stroke-dashoffset="2.6"/><path d="M551.0 513.0L574.0 513.0M551.0 520.0L574.0 520.0" stroke-dasharray="2 1" stroke-dashoffset="3.9"/></g><path d="M577.0 566.0L590.0 555.0L603.0 540.0" fill="none" stroke="#ff7f00" stroke-width="2" stroke-dasharray="2 2"/><path d="M604.8 585.1h2v2h-2z" fill="#ff7f00"/><path d="M369.5 458.3h2.8v2.8h-2.8zM375.1 459.7h2.8v2.8h-2.8zM380.5 461.2h2.8v2.8h-2.8zM386.0 463.5h2.8v2.8h-2.8zM392.0 465.1h2.8v2.8h-2.8zM363.4 462.1h2.8v2.8h-2.8zM369.5 464.2h2.8v2.8h-2.8zM380.6 467.6h2.8v2.8h-2.8zM391.3 471.6h2.8v2.8h-2.8zM341.1 461.2h2.8v2.8h-2.8zM347.0 463.4h2.8v2.8h-2.8zM352.0 465.5h2.8v2.8h-2.8zM357.8 466.6h2.8v2.8h-2.8zM374.0 472.5h2.8v2.8h-2.8zM384.8 475.7h2.8v2.8h-2.8zM396.5 479.6h2.8v2.8h-2.8zM339.3 467.5h2.8v2.8h-2.8zM361.0 474.3h2.8v2.8h-2.8zM366.4 476.6h2.8v2.8h-2.8zM371.9 478.4h2.8v2.8h-2.8zM377.3 479.6h2.8v2.8h-2.8zM382.8 482.0h2.8v2.8h-2.8zM388.3 483.6h2.8v2.8h-2.8zM393.7 485.1h2.8v2.8h-2.8zM399.5 487.0h2.8v2.8h-2.8zM405.1 489.4h2.8v2.8h-2.8zM339.4 474.1h2.8v2.8h-2.8zM350.4 477.2h2.8v2.8h-2.8zM356.2 479.7h2.8v2.8h-2.8zM367.1 483.2h2.8v2.8h-2.8zM372.2 484.7h2.8v2.8h-2.8zM377.4 486.2h2.8v2.8h-2.8zM388.8 490.3h2.8v2.8h-2.8zM394.5 492.1h2.8v2.8h-2.8zM399.5 493.7h2.8v2.8h-2.8zM405.7 495.7h2.8v2.8h-2.8zM334.9 479.4h2.8v2.8h-2.8zM351.9 484.5h2.8v2.8h-2.8zM357.1 486.6h2.8v2.8h-2.8zM362.9 487.8h2.8v2.8h-2.8zM368.7 489.7h2.8v2.8h-2.8zM374.2 491.6h2.8v2.8h-2.8zM379.7 493.8h2.8v2.8h-2.8zM384.7 495.2h2.8v2.8h-2.8zM390.4 496.9h2.8v2.8h-2.8zM396.1 498.7h2.8v2.8h-2.8zM401.0 500.9h2.8v2.8h-2.8zM406.7 502.7h2.8v2.8h-2.8zM337.6 486.2h2.8v2.8h-2.8zM360.0 493.7h2.8v2.8h-2.8zM364.9 495.8h2.8v2.8h-2.8zM370.9 497.3h2.8v2.8h-2.8zM381.4 500.6h2.8v2.8h-2.8zM387.2 502.7h2.8v2.8h-2.8zM392.6 504.3h2.8v2.8h-2.8zM398.5 506.5h2.8v2.8h-2.8zM403.6 508.4h2.8v2.8h-2.8zM415.0 512.0h2.8v2.8h-2.8zM339.5 493.2h2.8v2.8h-2.8zM345.2 495.4h2.8v2.8h-2.8zM351.0 497.3h2.8v2.8h-2.8zM356.7 499.1h2.8v2.8h-2.8zM361.6 500.6h2.8v2.8h-2.8zM367.2 502.3h2.8v2.8h-2.8zM372.8 504.1h2.8v2.8h-2.8zM378.6 506.5h2.8v2.8h-2.8zM384.0 508.2h2.8v2.8h-2.8zM389.3 509.5h2.8v2.8h-2.8zM394.8 511.4h2.8v2.8h-2.8zM400.1 513.6h2.8v2.8h-2.8zM416.9 519.0h2.8v2.8h-2.8zM338.7 499.7h2.8v2.8h-2.8zM344.8 501.9h2.8v2.8h-2.8zM350.3 503.4h2.8v2.8h-2.8zM355.5 505.4h2.8v2.8h-2.8zM361.3 507.0h2.8v2.8h-2.8zM366.6 509.2h2.8v2.8h-2.8zM371.9 510.7h2.8v2.8h-2.8zM383.2 514.1h2.8v2.8h-2.8zM388.7 516.0h2.8v2.8h-2.8zM393.8 518.3h2.8v2.8h-2.8zM399.7 520.0h2.8v2.8h-2.8zM404.9 521.7h2.8v2.8h-2.8zM410.7 523.3h2.8v2.8h-2.8zM416.3 525.0h2.8v2.8h-2.8zM334.9 505.3h2.8v2.8h-2.8zM346.1 508.9h2.8v2.8h-2.8zM351.6 510.1h2.8v2.8h-2.8zM357.3 511.8h2.8v2.8h-2.8zM362.4 513.9h2.8v2.8h-2.8zM373.5 518.1h2.8v2.8h-2.8zM379.4 519.3h2.8v2.8h-2.8zM384.2 521.7h2.8v2.8h-2.8zM390.0 523.5h2.8v2.8h-2.8zM395.2 524.8h2.8v2.8h-2.8zM400.7 527.0h2.8v2.8h-2.8zM406.7 528.7h2.8v2.8h-2.8zM412.1 530.2h2.8v2.8h-2.8zM417.8 532.1h2.8v2.8h-2.8zM335.3 511.9h2.8v2.8h-2.8zM346.2 515.2h2.8v2.8h-2.8zM351.8 517.3h2.8v2.8h-2.8zM357.2 519.1h2.8v2.8h-2.8zM362.9 520.8h2.8v2.8h-2.8zM368.7 522.6h2.8v2.8h-2.8zM373.8 524.4h2.8v2.8h-2.8zM379.9 526.2h2.8v2.8h-2.8zM384.6 527.6h2.8v2.8h-2.8zM390.2 529.7h2.8v2.8h-2.8zM396.2 531.3h2.8v2.8h-2.8zM401.2 533.6h2.8v2.8h-2.8zM412.4 536.9h2.8v2.8h-2.8zM418.3 538.5h2.8v2.8h-2.8zM340.7 519.6h2.8v2.8h-2.8zM346.3 522.0h2.8v2.8h-2.8zM351.7 523.3h2.8v2.8h-2.8zM357.4 525.1h2.8v2.8h-2.8zM363.0 526.9h2.8v2.8h-2.8zM368.1 529.2h2.8v2.8h-2.8zM373.6 531.2h2.8v2.8h-2.8zM385.3 534.0h2.8v2.8h-2.8zM390.1 536.3h2.8v2.8h-2.8zM395.7 538.1h2.8v2.8h-2.8zM401.1 539.6h2.8v2.8h-2.8zM406.6 541.5h2.8v2.8h-2.8zM412.5 543.1h2.8v2.8h-2.8zM418.0 545.5h2.8v2.8h-2.8zM339.9 525.8h2.8v2.8h-2.8zM345.7 527.9h2.8v2.8h-2.8zM351.0 529.5h2.8v2.8h-2.8zM356.7 531.6h2.8v2.8h-2.8zM361.8 533.1h2.8v2.8h-2.8zM367.4 535.4h2.8v2.8h-2.8zM372.5 536.9h2.8v2.8h-2.8zM378.3 538.7h2.8v2.8h-2.8zM383.6 540.3h2.8v2.8h-2.8zM389.4 542.1h2.8v2.8h-2.8zM395.2 544.6h2.8v2.8h-2.8zM400.3 546.1h2.8v2.8h-2.8zM406.1 547.8h2.8v2.8h-2.8zM411.6 549.4h2.8v2.8h-2.8zM349.6 535.9h2.8v2.8h-2.8zM361.0 539.8h2.8v2.8h-2.8zM366.3 541.4h2.8v2.8h-2.8zM372.2 542.9h2.8v2.8h-2.8zM377.4 544.7h2.8v2.8h-2.8zM393.8 550.7h2.8v2.8h-2.8zM399.6 552.0h2.8v2.8h-2.8zM404.7 553.7h2.8v2.8h-2.8zM356.1 544.7h2.8v2.8h-2.8zM361.9 546.2h2.8v2.8h-2.8zM367.5 548.4h2.8v2.8h-2.8zM372.8 549.7h2.8v2.8h-2.8zM378.2 551.7h2.8v2.8h-2.8z" fill="url(#i67)"/><path d="M378.0 573.6h2.8v2.8h-2.8zM393.7 573.8h2.8v2.8h-2.8zM410.2 574.9h2.8v2.8h-2.8zM373.0 583.0h2.8v2.8h-2.8zM380.8 582.9h2.8v2.8h-2.8zM397.0 583.9h2.8v2.8h-2.8zM404.6 584.4h2.8v2.8h-2.8zM368.9 592.0h2.8v2.8h-2.8zM376.2 592.5h2.8v2.8h-2.8zM384.5 592.5h2.8v2.8h-2.8zM392.7 593.0h2.8v2.8h-2.8zM400.9 593.9h2.8v2.8h-2.8zM408.6 594.1h2.8v2.8h-2.8zM416.7 594.7h2.8v2.8h-2.8zM370.5 601.3h2.8v2.8h-2.8zM378.4 601.7h2.8v2.8h-2.8zM395.0 603.1h2.8v2.8h-2.8zM411.1 603.2h2.8v2.8h-2.8zM372.6 610.8h2.8v2.8h-2.8zM380.8 611.3h2.8v2.8h-2.8zM388.5 611.7h2.8v2.8h-2.8zM396.9 612.3h2.8v2.8h-2.8zM404.7 612.8h2.8v2.8h-2.8zM412.7 613.5h2.8v2.8h-2.8zM371.9 620.4h2.8v2.8h-2.8zM379.6 621.2h2.8v2.8h-2.8zM388.0 621.7h2.8v2.8h-2.8zM396.1 622.1h2.8v2.8h-2.8zM404.1 622.1h2.8v2.8h-2.8zM371.9 630.2h2.8v2.8h-2.8zM380.1 630.3h2.8v2.8h-2.8zM388.2 631.1h2.8v2.8h-2.8zM396.0 631.3h2.8v2.8h-2.8zM404.0 631.3h2.8v2.8h-2.8z" fill="url(#i68)"/><path d="M524.4 493.4h2.8v2.8h-2.8zM437.2 501.5h2.8v2.8h-2.8zM449.8 501.3h2.8v2.8h-2.8zM456.5 501.2h2.8v2.8h-2.8zM463.1 501.3h2.8v2.8h-2.8zM469.8 501.5h2.8v2.8h-2.8zM475.9 501.2h2.8v2.8h-2.8zM482.6 501.6h2.8v2.8h-2.8zM488.9 501.5h2.8v2.8h-2.8zM495.0 501.7h2.8v2.8h-2.8zM508.3 501.6h2.8v2.8h-2.8zM514.8 501.8h2.8v2.8h-2.8zM437.2 510.4h2.8v2.8h-2.8zM449.6 510.3h2.8v2.8h-2.8zM482.8 509.8h2.8v2.8h-2.8zM489.3 510.2h2.8v2.8h-2.8zM501.8 510.1h2.8v2.8h-2.8zM508.3 510.1h2.8v2.8h-2.8zM438.6 518.7h2.8v2.8h-2.8zM451.9 518.7h2.8v2.8h-2.8zM457.9 518.3h2.8v2.8h-2.8zM464.3 518.2h2.8v2.8h-2.8zM471.0 518.2h2.8v2.8h-2.8zM490.8 518.7h2.8v2.8h-2.8zM496.7 518.7h2.8v2.8h-2.8zM523.5 518.2h2.8v2.8h-2.8zM438.5 527.0h2.8v2.8h-2.8zM464.3 526.6h2.8v2.8h-2.8zM471.2 526.8h2.8v2.8h-2.8zM483.8 527.2h2.8v2.8h-2.8zM496.7 526.8h2.8v2.8h-2.8zM503.5 526.6h2.8v2.8h-2.8zM510.0 527.0h2.8v2.8h-2.8zM516.3 527.3h2.8v2.8h-2.8zM522.7 526.7h2.8v2.8h-2.8zM439.1 535.1h2.8v2.8h-2.8zM446.0 535.5h2.8v2.8h-2.8zM452.1 535.9h2.8v2.8h-2.8zM459.1 535.1h2.8v2.8h-2.8zM465.5 535.6h2.8v2.8h-2.8zM471.5 535.9h2.8v2.8h-2.8zM484.7 535.8h2.8v2.8h-2.8zM497.8 535.3h2.8v2.8h-2.8zM504.4 535.5h2.8v2.8h-2.8zM511.0 535.4h2.8v2.8h-2.8zM517.1 535.3h2.8v2.8h-2.8zM444.7 544.3h2.8v2.8h-2.8zM450.8 544.1h2.8v2.8h-2.8zM458.0 544.4h2.8v2.8h-2.8zM463.8 544.4h2.8v2.8h-2.8zM471.0 544.0h2.8v2.8h-2.8zM490.0 543.9h2.8v2.8h-2.8zM497.0 543.8h2.8v2.8h-2.8zM502.9 543.7h2.8v2.8h-2.8zM516.2 543.7h2.8v2.8h-2.8zM447.7 552.7h2.8v2.8h-2.8zM454.3 552.4h2.8v2.8h-2.8zM460.9 552.8h2.8v2.8h-2.8zM466.9 552.9h2.8v2.8h-2.8zM473.6 552.4h2.8v2.8h-2.8zM480.1 552.2h2.8v2.8h-2.8zM486.7 552.8h2.8v2.8h-2.8zM492.9 552.3h2.8v2.8h-2.8zM499.3 552.3h2.8v2.8h-2.8zM506.5 552.7h2.8v2.8h-2.8zM518.9 552.6h2.8v2.8h-2.8zM526.0 552.3h2.8v2.8h-2.8zM480.3 561.2h2.8v2.8h-2.8zM499.7 560.8h2.8v2.8h-2.8zM512.7 561.0h2.8v2.8h-2.8zM518.8 561.2h2.8v2.8h-2.8zM525.2 561.2h2.8v2.8h-2.8z" fill="url(#i69)"/><path d="M454.1 592.0h2v2h-2zM452.2 581.9h2v2h-2zM450.7 599.9h2v2h-2zM449.5 568.5h2v2h-2zM449.1 572.6h2v2h-2zM449.9 572.9h2v2h-2z" fill="#59ff00"/><path d="M328.0 485.5h2v2h-2zM326.4 498.4h2v2h-2zM320.9 482.5h2v2h-2zM328.0 496.5h2v2h-2zM324.3 455.0h2v2h-2zM322.5 503.6h2v2h-2zM319.1 463.8h2v2h-2zM328.5 471.5h2v2h-2zM320.3 463.7h2v2h-2zM328.0 464.8h2v2h-2zM322.7 482.0h2v2h-2zM326.9 474.0h2v2h-2zM318.9 478.8h2v2h-2zM318.4 450.6h2v2h-2zM320.1 485.9h2v2h-2zM321.1 485.7h2v2h-2zM319.8 451.9h2v2h-2zM318.3 486.6h2v2h-2zM327.5 458.0h2v2h-2zM320.6 445.8h2v2h-2zM325.1 462.7h2v2h-2zM319.5 483.2h2v2h-2zM324.6 471.4h2v2h-2zM319.7 482.7h2v2h-2zM324.1 470.5h2v2h-2z" fill="#ff7f00"/><path d="M477.5 592.2h2v2h-2zM481.7 587.0h2v2h-2zM477.9 594.8h2v2h-2zM483.3 587.8h2v2h-2zM480.5 580.9h2v2h-2z" fill="#ff9900"/><path d="M379.4 471.9h2.4v2.4h-2.4zM387.9 466.0h2.4v2.4h-2.4zM374.7 475.3h2.4v2.4h-2.4zM379.1 467.0h2.4v2.4h-2.4zM376.9 466.2h2.4v2.4h-2.4zM370.5 473.8h2.4v2.4h-2.4zM390.1 475.2h2.4v2.4h-2.4zM383.1 466.4h2.4v2.4h-2.4zM377.7 461.6h2.4v2.4h-2.4zM385.7 465.4h2.4v2.4h-2.4zM373.9 482.5h2.4v2.4h-2.4zM375.2 482.5h2.4v2.4h-2.4zM382.7 477.0h2.4v2.4h-2.4zM383.0 462.5h2.4v2.4h-2.4zM385.2 464.5h2.4v2.4h-2.4zM377.0 461.3h2.4v2.4h-2.4zM367.6 467.2h2.4v2.4h-2.4zM366.4 467.6h2.4v2.4h-2.4zM389.0 483.0h2.4v2.4h-2.4zM377.4 460.7h2.4v2.4h-2.4zM375.3 459.6h2.4v2.4h-2.4zM371.9 473.5h2.4v2.4h-2.4zM382.7 458.8h2.4v2.4h-2.4zM379.2 468.6h2.4v2.4h-2.4zM376.7 461.4h2.4v2.4h-2.4zM376.6 460.6h2.4v2.4h-2.4zM384.5 474.2h2.4v2.4h-2.4zM383.0 468.2h2.4v2.4h-2.4zM391.8 467.2h2.4v2.4h-2.4zM371.5 467.3h2.4v2.4h-2.4zM390.6 461.9h2.4v2.4h-2.4zM386.6 481.5h2.4v2.4h-2.4zM389.0 469.6h2.4v2.4h-2.4zM378.2 479.8h2.4v2.4h-2.4zM385.2 478.2h2.4v2.4h-2.4zM370.8 473.2h2.4v2.4h-2.4zM385.9 464.0h2.4v2.4h-2.4zM371.6 479.0h2.4v2.4h-2.4zM381.3 468.2h2.4v2.4h-2.4zM379.1 464.4h2.4v2.4h-2.4z" fill="url(#i73)"/><path d="M344.0 409.3h2.4v2.4h-2.4zM343.0 413.3h2.4v2.4h-2.4zM343.9 409.9h2.4v2.4h-2.4zM352.6 408.0h2.4v2.4h-2.4zM353.1 412.1h2.4v2.4h-2.4zM347.9 410.9h2.4v2.4h-2.4zM348.3 407.5h2.4v2.4h-2.4zM353.5 408.0h2.4v2.4h-2.4zM353.3 413.7h2.4v2.4h-2.4zM341.4 406.2h2.4v2.4h-2.4zM347.0 413.2h2.4v2.4h-2.4zM343.2 410.7h2.4v2.4h-2.4zM345.6 412.8h2.4v2.4h-2.4zM352.6 412.5h2.4v2.4h-2.4z" fill="#ff9900"/><path d="M353.5 410.0L370.0 417.0" fill="none" stroke="#ff3300" stroke-width="2.2" stroke-dasharray="4 1"/><path d="M356.0 424.0L368.0 433.0L371.0 434.0L366.0 440.0" fill="none" stroke="#ff3300" stroke-width="2.2"/><path d="M360.0 421.0L365.0 419.0" fill="none" stroke="#ff3300" stroke-width="2.2"/><path d="M437.0 415.5L448.0 408.7" fill="none" stroke="#ff2600" stroke-width="2.0"/><path d="M437.0 415.5L458.0 425.0" fill="none" stroke="#ff2600" stroke-width="2.0"/><path d="M437.0 437.4L458.0 441.5" fill="none" stroke="#ff2600" stroke-width="2.0"/><path d="M325.8 415.3h2.4v2.4h-2.4zM323.8 433.8h2.4v2.4h-2.4zM325.5 430.5h2.4v2.4h-2.4zM325.4 419.8h2.4v2.4h-2.4zM326.0 430.8h2.4v2.4h-2.4zM319.5 427.9h2.4v2.4h-2.4zM323.0 414.5h2.4v2.4h-2.4zM321.1 413.5h2.4v2.4h-2.4zM318.6 420.3h2.4v2.4h-2.4zM319.8 424.8h2.4v2.4h-2.4zM324.2 430.9h2.4v2.4h-2.4zM324.9 451.6h2.4v2.4h-2.4zM325.2 453.8h2.4v2.4h-2.4zM322.6 441.9h2.4v2.4h-2.4zM325.1 436.4h2.4v2.4h-2.4zM319.1 435.4h2.4v2.4h-2.4zM322.2 420.7h2.4v2.4h-2.4zM318.7 420.9h2.4v2.4h-2.4z" fill="#ff9900"/><path d="M429.0 464.1h2.4v2.4h-2.4zM425.6 462.6h2.4v2.4h-2.4zM435.7 461.0h2.4v2.4h-2.4zM431.4 462.7h2.4v2.4h-2.4zM434.0 456.9h2.4v2.4h-2.4zM419.6 465.0h2.4v2.4h-2.4zM431.7 458.8h2.4v2.4h-2.4zM431.6 458.0h2.4v2.4h-2.4zM423.6 460.3h2.4v2.4h-2.4zM420.8 457.8h2.4v2.4h-2.4z" fill="#ffb200"/><path d="M384.3 460.5h2.4v2.4h-2.4zM377.1 464.3h2.4v2.4h-2.4zM385.2 463.2h2.4v2.4h-2.4zM374.9 465.4h2.4v2.4h-2.4zM373.6 469.0h2.4v2.4h-2.4zM383.6 467.0h2.4v2.4h-2.4zM367.1 469.9h2.4v2.4h-2.4zM377.0 465.6h2.4v2.4h-2.4zM376.8 464.7h2.4v2.4h-2.4zM384.6 462.0h2.4v2.4h-2.4zM368.8 470.0h2.4v2.4h-2.4zM371.2 462.1h2.4v2.4h-2.4zM374.8 468.9h2.4v2.4h-2.4zM373.5 459.1h2.4v2.4h-2.4z" fill="#ffb200"/><path d="M397.8 453.7h2.4v2.4h-2.4zM398.3 452.4h2.4v2.4h-2.4zM404.2 452.5h2.4v2.4h-2.4zM399.6 450.1h2.4v2.4h-2.4z" fill="#ffb200"/><path d="M345.0 383.0L338.0 403.0" fill="none" stroke="#ff5900" stroke-width="2.2"/></svg></div>
<div class="t" style="left:7.60px;top:3.04px;font-size:12.30px;color:#000;"><u>F</u>ile</div>
<div class="t" style="left:40.90px;top:3.13px;font-size:12.20px;color:#000;"><u>P</u>anels</div>
<div class="t" style="left:91.20px;top:2.70px;font-size:12.70px;color:#000;"><u>H</u>elp</div>
<div class="r" style="left:0.00px;top:16.50px;width:1024.00px;height:1.00px;background:#dadada;"></div>
<div class="r" style="left:0.00px;top:17.50px;width:1024.00px;height:31.50px;background:#f0f0f0;"></div>
<div class="r" style="left:0.00px;top:49.00px;width:1024.00px;height:2.50px;background:#d4d4d4;"></div>
<div class="r" style="left:3.00px;top:25.00px;width:1.50px;height:1.20px;background:#c8c8c8;"></div>
<div class="r" style="left:6.00px;top:25.00px;width:1.50px;height:1.20px;background:#c8c8c8;"></div>
<div class="r" style="left:3.00px;top:28.00px;width:1.50px;height:1.20px;background:#c8c8c8;"></div>
<div class="r" style="left:6.00px;top:28.00px;width:1.50px;height:1.20px;background:#c8c8c8;"></div>
<div class="r" style="left:3.00px;top:31.00px;width:1.50px;height:1.20px;background:#c8c8c8;"></div>
<div class="r" style="left:6.00px;top:31.00px;width:1.50px;height:1.20px;background:#c8c8c8;"></div>
<div class="r" style="left:3.00px;top:34.00px;width:1.50px;height:1.20px;background:#c8c8c8;"></div>
<div class="r" style="left:6.00px;top:34.00px;width:1.50px;height:1.20px;background:#c8c8c8;"></div>
<div class="r" style="left:3.00px;top:37.00px;width:1.50px;height:1.20px;background:#c8c8c8;"></div>
<div class="r" style="left:6.00px;top:37.00px;width:1.50px;height:1.20px;background:#c8c8c8;"></div>
<div class="r" style="left:3.00px;top:40.00px;width:1.50px;height:1.20px;background:#c8c8c8;"></div>
<div class="r" style="left:6.00px;top:40.00px;width:1.50px;height:1.20px;background:#c8c8c8;"></div>
<div class="r" style="left:3.00px;top:43.00px;width:1.50px;height:1.20px;background:#c8c8c8;"></div>
<div class="r" style="left:6.00px;top:43.00px;width:1.50px;height:1.20px;background:#c8c8c8;"></div>
<div class="r" style="left:9.00px;top:21.20px;width:72.70px;height:26.20px;background:#dedede;border:1px solid #c4c4c4;border-radius:3px;box-sizing:border-box;"></div>
<div class="t" style="left:27.50px;top:30.41px;font-size:10.70px;color:#000;letter-spacing:0.014px;">Interact</div>
<div class="t" style="left:101.60px;top:30.41px;font-size:10.70px;color:#000;letter-spacing:-0.409px;">Move Camera</div>
<div class="t" style="left:202.20px;top:30.41px;font-size:10.70px;color:#000;letter-spacing:-0.290px;">Select</div>
<div class="t" style="left:269.00px;top:30.41px;font-size:10.70px;color:#000;letter-spacing:-0.514px;">Focus Camera</div>
<div class="t" style="left:370.00px;top:30.41px;font-size:10.70px;color:#000;letter-spacing:-0.290px;">Measure</div>
<div class="t" style="left:446.60px;top:30.41px;font-size:10.70px;color:#000;letter-spacing:-0.252px;">2D Pose Estimate</div>
<div class="t" style="left:565.30px;top:30.41px;font-size:10.70px;color:#000;letter-spacing:-0.501px;">2D Goal Pose</div>
<div class="t" style="left:663.40px;top:30.41px;font-size:10.70px;color:#000;letter-spacing:-0.150px;">Publish Point</div>
<svg class="r" style="left:11px;top:26px" width="16" height="16" viewBox="0 0 16 16"><path d="M5 1.5v8.5l-1.5-1.5c-1-1-2.5 0-1.5 1.2l2.5 3.5c.6.8 1.4 1.3 2.5 1.3h5c1.2 0 2-.9 2-2v-5c0-.8-1.4-.8-1.4 0v-1c0-.8-1.4-.8-1.4 0v-.6c0-.8-1.4-.8-1.4 0v-.4c0-.8-1.4-.8-1.4 0V1.5c0-1-1.4-1-1.4 0z" fill="#fff" stroke="#111" stroke-width="1.1"/></svg>
<svg class="r" style="left:85.5px;top:26px" width="15" height="15" viewBox="0 0 15 15"><g fill="none" stroke="#777" stroke-width="1"><path d="M7.5 1L5 3.5h5zM7.5 14L5 11.5h5zM1 7.5L3.5 5v5zM14 7.5L11.5 5v5z"/><path d="M7.5 3v9M3 7.5h9" stroke-dasharray="1 1"/><rect x="4.5" y="5.5" width="6" height="4" stroke-dasharray="1 1"/></g></svg>
<svg class="r" style="left:186px;top:27px" width="16" height="14" viewBox="0 0 16 14"><rect x="0.5" y="0.5" width="14" height="12" fill="#f8f3b8" stroke="#333" stroke-width="1" stroke-dasharray="1.2 1"/><path d="M11 13L15 13L15 9Z" fill="#111"/></svg>
<svg class="r" style="left:252px;top:26px" width="15" height="15" viewBox="0 0 15 15"><g fill="none" stroke="#777" stroke-width="1"><circle cx="7.5" cy="7.5" r="4"/><circle cx="7.5" cy="7.5" r="2"/><path d="M7.5 0.5v14M0.5 7.5h14"/></g></svg>
<svg class="r" style="left:354px;top:31px" width="14" height="6" viewBox="0 0 14 6"><rect x="0.5" y="0.5" width="13" height="5" fill="#e8d890" stroke="#777" stroke-width="1"/><path d="M3 1v2M5.5 1v2M8 1v2M10.5 1v2" stroke="#777" stroke-width="0.8"/></svg>
<svg class="r" style="left:431px;top:27px" width="15" height="14" viewBox="0 0 15 14"><path d="M1 13L13 2" stroke="#22cc22" stroke-width="1.8"/><path d="M14 1L9 3L12 6Z" fill="#22cc22"/></svg>
<svg class="r" style="left:549.7px;top:27px" width="15" height="14" viewBox="0 0 15 14"><path d="M1 13L13 2" stroke="#22cc22" stroke-width="1.8"/><path d="M14 1L9 3L12 6Z" fill="#22cc22"/></svg>
<svg class="r" style="left:650px;top:26px" width="10" height="15" viewBox="0 0 10 15"><path d="M5 14.5C3 10 0.5 8 0.5 5A4.5 4.5 0 0 1 9.5 5C9.5 8 7 10 5 14.5Z" fill="#c8502a"/><circle cx="5" cy="5" r="1.6" fill="#7a2a10"/></svg>
<svg class="r" style="left:747px;top:27.5px" width="12" height="12" viewBox="0 0 12 12"><path d="M6 1v10M1 6h10" stroke="#3a78c8" stroke-width="2.6"/><path d="M6 1.6v8.8M1.6 6h8.8" stroke="#a8c8f0" stroke-width="0.9"/></svg>
<svg class="r" style="left:789px;top:31.5px" width="11" height="4" viewBox="0 0 11 4"><path d="M0 2h11" stroke="#3a78c8" stroke-width="2.6"/><path d="M0.6 2h9.8" stroke="#a8c8f0" stroke-width="0.8"/></svg>
<svg class="r" style="left:801px;top:41px" width="5" height="3" viewBox="0 0 5 3"><path d="M0 0h5L2.5 3Z" fill="#444"/></svg>
<div class="r" style="left:0.00px;top:52.00px;width:290.60px;height:18.70px;background:#b8b8b8;"></div>
<svg class="r" style="left:1.5px;top:55px" width="14" height="14" viewBox="0 0 14 14"><rect x="0.7" y="0.7" width="12.6" height="9" fill="#222"/><rect x="1.5" y="1.5" width="3.7" height="7.4" fill="#d88"/><rect x="5.2" y="1.5" width="3.6" height="7.4" fill="#8d8"/><rect x="8.8" y="1.5" width="3.7" height="7.4" fill="#aaf"/><path d="M7 9.5v2" stroke="#222" stroke-width="1.4"/><ellipse cx="7" cy="12.6" rx="3.5" ry="1" fill="none" stroke="#333" stroke-width="0.9"/></svg>
<div class="t" style="left:20.50px;top:56.03px;font-size:12.90px;color:#000;">Displays</div>
<div class="r" style="left:275.00px;top:53.90px;width:13.30px;height:12.90px;background:linear-gradient(#ffffff,#e8e8e8);border:1px solid #a8a8a8;border-radius:2px;box-sizing:border-box;"></div>
<svg class="r" style="left:276.65px;top:55.35px" width="10" height="10" viewBox="0 0 10 10"><circle cx="5" cy="5" r="4.6" fill="#d01818"/><path d="M3.2 3.2L6.8 6.8M6.8 3.2L3.2 6.8" stroke="#fff" stroke-width="1.3"/></svg>
<div class="r" style="left:0.00px;top:70.70px;width:290.60px;height:469.30px;background:#fff;"></div>
<div class="r" style="left:133.20px;top:70.70px;width:1.00px;height:469.30px;background:#e4e4e4;"></div>
<div class="r" style="left:278.40px;top:70.70px;width:12.20px;height:469.30px;background:linear-gradient(90deg,#f6f6f6,#ffffff 50%,#f0f0f0);border-left:1px solid #cfcfcf;border-right:1px solid #c8c8c8;box-sizing:border-box;"></div>
<div class="r" style="left:278.40px;top:82.00px;width:12.20px;height:1.00px;background:#d8d8d8;"></div>
<div class="r" style="left:278.40px;top:527.50px;width:12.20px;height:1.00px;background:#d8d8d8;"></div>
<div class="r" style="left:279.40px;top:497.00px;width:10.20px;height:30.50px;background:#e0e0e0;border-top:1px solid #cfcfcf;box-sizing:border-box;"></div>
<svg class="r" style="left:280.5px;top:74px" width="8" height="5" viewBox="0 0 8 5"><path d="M0.5 4.5h7L4 0.5Z" fill="#555"/></svg>
<svg class="r" style="left:280.5px;top:531.5px" width="8" height="5" viewBox="0 0 8 5"><path d="M0.5 0.5h7L4 4.5Z" fill="#555"/></svg>
<div class="r" style="left:0.00px;top:348.56px;width:278.40px;height:16.30px;background:#308cc6;"></div>
<div class="r" style="left:0;top:527.24px;width:278px;height:12.76px;overflow:hidden">
<div class="t" style="left:24.6px;top:2.00px;font-size:12.7px;color:#000">Autocompute V…</div>
</div>
<div class="t" style="left:26.00px;top:73.41px;font-size:12.70px;color:#000;">Global Options</div>
<div class="t" style="left:24.60px;top:89.69px;font-size:12.70px;color:#000;">Fixed Frame</div>
<div class="t" style="left:24.60px;top:105.97px;font-size:12.70px;color:#000;">Background Color</div>
<div class="t" style="left:24.60px;top:122.25px;font-size:12.70px;color:#000;">Frame Rate</div>
<div class="t" style="left:26.00px;top:138.53px;font-size:12.70px;color:#000;">Global Status: Ok</div>
<div class="t" style="left:43.00px;top:154.81px;font-size:12.70px;color:#000;">Fixed Frame</div>
<div class="t" style="left:43.00px;top:203.65px;font-size:12.70px;color:#000;">Status: Ok</div>
<div class="t" style="left:24.60px;top:219.93px;font-size:12.70px;color:#000;">Topic</div>
<div class="t" style="left:24.60px;top:236.21px;font-size:12.70px;color:#000;">Selectable</div>
<div class="t" style="left:24.60px;top:252.49px;font-size:12.70px;color:#000;">Style</div>
<div class="t" style="left:24.60px;top:268.76px;font-size:12.70px;color:#000;">Size (m)</div>
<div class="t" style="left:24.60px;top:285.05px;font-size:12.70px;color:#000;">Size (Pixels)</div>
<div class="t" style="left:24.60px;top:301.33px;font-size:12.70px;color:#000;">Alpha</div>
<div class="t" style="left:24.60px;top:317.61px;font-size:12.70px;color:#000;">Decay Time</div>
<div class="t" style="left:24.60px;top:333.88px;font-size:12.70px;color:#000;">Position Transf…</div>
<div class="t" style="left:24.60px;top:366.45px;font-size:12.70px;color:#000;">Channel Name</div>
<div class="t" style="left:24.60px;top:382.73px;font-size:12.70px;color:#000;">Use rainbow</div>
<div class="t" style="left:24.60px;top:399.00px;font-size:12.70px;color:#000;">Invert Rainbow</div>
<div class="t" style="left:24.60px;top:415.28px;font-size:12.70px;color:#000;">Min Color</div>
<div class="t" style="left:24.60px;top:431.57px;font-size:12.70px;color:#000;">Max Color</div>
<div class="t" style="left:24.60px;top:447.85px;font-size:12.70px;color:#000;">Autocompute I…</div>
<div class="t" style="left:24.60px;top:464.12px;font-size:12.70px;color:#000;">Min Intensity</div>
<div class="t" style="left:24.60px;top:480.40px;font-size:12.70px;color:#000;">Max Intensity</div>
<div class="t" style="left:24.60px;top:496.69px;font-size:12.70px;color:#000;">Color</div>
<div class="t" style="left:24.60px;top:512.97px;font-size:12.70px;color:#000;">Axis</div>
<div class="t" style="left:24.60px;top:350.16px;font-size:12.70px;color:#fff;">Color Transfor…</div>
<div class="t" style="left:26.00px;top:171.09px;font-size:12.70px;color:#2f7acb;font-weight:bold;">Grid</div>
<div class="t" style="left:26.00px;top:187.37px;font-size:12.70px;color:#2f7acb;font-weight:bold;">PointCloud2</div>
<div class="t" style="left:135.50px;top:218.93px;font-size:13.87px;color:#000;">/world/historyM/mod…</div>
<div class="t" style="left:135.50px;top:89.69px;font-size:12.70px;color:#000;">map</div>
<div class="t" style="left:135.50px;top:122.25px;font-size:12.70px;color:#000;">30</div>
<div class="t" style="left:135.50px;top:154.81px;font-size:12.70px;color:#000;">OK</div>
<div class="t" style="left:135.50px;top:252.49px;font-size:12.70px;color:#000;">Points</div>
<div class="t" style="left:135.50px;top:268.76px;font-size:12.70px;color:#000;">0.01</div>
<div class="t" style="left:135.50px;top:285.05px;font-size:12.70px;color:#000;">3</div>
<div class="t" style="left:135.50px;top:301.33px;font-size:12.70px;color:#000;">1</div>
<div class="t" style="left:135.50px;top:317.61px;font-size:12.70px;color:#000;">0</div>
<div class="t" style="left:135.50px;top:333.88px;font-size:12.70px;color:#000;">XYZ</div>
<div class="t" style="left:135.50px;top:366.45px;font-size:12.70px;color:#000;">intensity</div>
<div class="t" style="left:135.50px;top:464.12px;font-size:12.70px;color:#000;">0</div>
<div class="t" style="left:135.50px;top:480.40px;font-size:12.70px;color:#000;">0</div>
<div class="t" style="left:135.50px;top:512.97px;font-size:12.70px;color:#000;">Z</div>
<div class="t" style="left:135.50px;top:350.16px;font-size:12.70px;color:#fff;">AxisColor</div>
<div class="r" style="left:137.80px;top:106.06px;width:11.20px;height:10.70px;background:#303030;border:1px solid #111;box-sizing:border-box;"></div>
<div class="t" style="left:153.10px;top:105.97px;font-size:12.70px;color:#000;">48; 48; 48</div>
<div class="r" style="left:137.80px;top:415.38px;width:11.20px;height:10.70px;background:#000;"></div>
<div class="t" style="left:153.10px;top:415.28px;font-size:12.70px;color:#000;">0; 0; 0</div>
<div class="r" style="left:137.80px;top:431.66px;width:11.20px;height:10.70px;background:#fff;border:1px solid #222;box-sizing:border-box;"></div>
<div class="t" style="left:153.10px;top:431.57px;font-size:12.70px;color:#000;">255; 255; 255</div>
<div class="r" style="left:137.80px;top:496.78px;width:11.20px;height:10.70px;background:#fff;border:1px solid #222;box-sizing:border-box;"></div>
<div class="t" style="left:153.10px;top:496.69px;font-size:12.70px;color:#000;">255; 255; 255</div>
<div class="r" style="left:135.80px;top:170.88px;width:11.00px;height:11.00px;background:#fff;border:1px solid #b8b8b8;border-radius:1px;box-sizing:border-box;"></div>
<svg class="r" style="left:135.80px;top:170.88px" width="11" height="11" viewBox="0 0 11 11"><path d="M2.5 5.6L4.6 8.2L8.6 2.4" fill="none" stroke="#2f73c8" stroke-width="1.5"/></svg>
<div class="r" style="left:135.80px;top:187.16px;width:11.00px;height:11.00px;background:#fff;border:1px solid #b8b8b8;border-radius:1px;box-sizing:border-box;"></div>
<svg class="r" style="left:135.80px;top:187.16px" width="11" height="11" viewBox="0 0 11 11"><path d="M2.5 5.6L4.6 8.2L8.6 2.4" fill="none" stroke="#2f73c8" stroke-width="1.5"/></svg>
<div class="r" style="left:135.80px;top:236.00px;width:11.00px;height:11.00px;background:#fff;border:1px solid #b8b8b8;border-radius:1px;box-sizing:border-box;"></div>
<svg class="r" style="left:135.80px;top:236.00px" width="11" height="11" viewBox="0 0 11 11"><path d="M2.5 5.6L4.6 8.2L8.6 2.4" fill="none" stroke="#111" stroke-width="1.5"/></svg>
<div class="r" style="left:135.80px;top:382.52px;width:11.00px;height:11.00px;background:#fff;border:1px solid #b8b8b8;border-radius:1px;box-sizing:border-box;"></div>
<svg class="r" style="left:135.80px;top:382.52px" width="11" height="11" viewBox="0 0 11 11"><path d="M2.5 5.6L4.6 8.2L8.6 2.4" fill="none" stroke="#111" stroke-width="1.5"/></svg>
<div class="r" style="left:135.80px;top:398.80px;width:11.00px;height:11.00px;background:#fff;border:1px solid #b8b8b8;border-radius:1px;box-sizing:border-box;"></div>
<div class="r" style="left:135.80px;top:447.64px;width:11.00px;height:11.00px;background:#fff;border:1px solid #b8b8b8;border-radius:1px;box-sizing:border-box;"></div>
<svg class="r" style="left:135.80px;top:447.64px" width="11" height="11" viewBox="0 0 11 11"><path d="M2.5 5.6L4.6 8.2L8.6 2.4" fill="none" stroke="#111" stroke-width="1.5"/></svg>
<div class="r" style="left:135.80px;top:529.04px;width:11.00px;height:11.00px;background:#fff;border:1px solid #b8b8b8;border-radius:1px;box-sizing:border-box;"></div>
<svg class="r" style="left:135.80px;top:529.04px" width="11" height="11" viewBox="0 0 11 11"><path d="M2.5 5.6L4.6 8.2L8.6 2.4" fill="none" stroke="#111" stroke-width="1.5"/></svg>
<svg class="r" style="left:7.50px;top:138.52px" width="12" height="12" viewBox="0 0 12 12"><path d="M1 6.5L4 10L11 1.5" fill="none" stroke="#2a8a2a" stroke-width="1.7"/></svg>
<svg class="r" style="left:25.00px;top:154.80px" width="12" height="12" viewBox="0 0 12 12"><path d="M1 6.5L4 10L11 1.5" fill="none" stroke="#2a8a2a" stroke-width="1.7"/></svg>
<svg class="r" style="left:25.00px;top:203.64px" width="12" height="12" viewBox="0 0 12 12"><path d="M1 6.5L4 10L11 1.5" fill="none" stroke="#2a8a2a" stroke-width="1.7"/></svg>
<svg class="r" style="left:11.00px;top:206.14px" width="5" height="8" viewBox="0 0 5 8"><path d="M0.5 1L4 4L0.5 7Z" fill="#555"/></svg>
<svg class="r" style="left:11.00px;top:222.42px" width="5" height="8" viewBox="0 0 5 8"><path d="M0.5 1L4 4L0.5 7Z" fill="#555"/></svg>
<svg class="r" style="left:11.00px;top:531.74px" width="5" height="8" viewBox="0 0 5 8"><path d="M0.5 1L4 4L0.5 7Z" fill="#555"/></svg>
<svg class="r" style="left:6.5px;top:72.90px" width="13" height="13" viewBox="0 0 13 13"><g fill="none" stroke="#4a86d8" stroke-width="1.6"><circle cx="6.5" cy="6.5" r="4"/><circle cx="6.5" cy="6.5" r="1.6" stroke-width="1"/></g><g stroke="#4a86d8" stroke-width="1.8"><path d="M6.5 0.5v2.2M6.5 10.3v2.2M0.5 6.5h2.2M10.3 6.5h2.2M2.3 2.3l1.5 1.5M9.2 9.2l1.5 1.5M2.3 10.7l1.5-1.5M9.2 3.8l1.5-1.5"/></g></svg>
<svg class="r" style="left:7.5px;top:172.58px" width="12" height="8" viewBox="0 0 12 8"><path d="M6 0.8L11.2 4L6 7.2L0.8 4Z M3.4 2.4L8.6 5.6M8.6 2.4L3.4 5.6" fill="none" stroke="#444" stroke-width="1.1"/></svg>
<svg class="r" style="left:7px;top:187.36px" width="11" height="13" viewBox="0 0 11 13"><g fill="#2a84e0"><circle cx="3" cy="1" r="0.9"/><circle cx="6" cy="2.5" r="0.9"/><circle cx="1" cy="4" r="0.9"/><circle cx="4.5" cy="4.5" r="0.9"/><circle cx="8" cy="4" r="0.9"/><circle cx="2.5" cy="7" r="0.9"/><circle cx="6" cy="7" r="0.9"/><circle cx="9" cy="7.5" r="0.9"/><circle cx="4" cy="9.5" r="0.9"/><circle cx="7.5" cy="9.5" r="0.9"/><circle cx="1" cy="10" r="0.9"/><circle cx="3" cy="12" r="0.9"/></g></svg>
<div class="r" style="left:0.00px;top:540.00px;width:290.60px;height:1.00px;background:#cfcfcf;"></div>
<div class="r" style="left:0.00px;top:544.10px;width:290.70px;height:66.50px;background:#fff;border:1px solid #c4c4c4;border-left:none;box-sizing:border-box;"></div>
<div class="t" style="left:3.00px;top:549.90px;font-size:12.70px;color:#000;font-weight:bold;">Color Transformer</div>
<div class="t" style="left:3.00px;top:563.97px;font-size:13.33px;color:#000;">Set the transformer to use to set the color of the</div>
<div class="t" style="left:3.00px;top:578.50px;font-size:13.30px;color:#000;">points.</div>
<div class="r" style="left:0.80px;top:616.40px;width:67.30px;height:19.90px;background:linear-gradient(#fbfbfb,#ececec);border:1px solid #bdbdbd;border-radius:3px;box-sizing:border-box;"></div>
<div class="t" style="left:22.90px;top:621.15px;font-size:12.53px;color:#000;">Add</div>
<div class="r" style="left:74.30px;top:616.40px;width:66.90px;height:19.90px;background:linear-gradient(#fbfbfb,#ececec);border:1px solid #bdbdbd;border-radius:3px;box-sizing:border-box;"></div>
<div class="t" style="left:81.28px;top:621.00px;font-size:12.70px;color:#a6a6a6;">Duplicate</div>
<div class="r" style="left:147.50px;top:616.40px;width:68.10px;height:19.90px;background:linear-gradient(#fbfbfb,#ececec);border:1px solid #bdbdbd;border-radius:3px;box-sizing:border-box;"></div>
<div class="t" style="left:157.90px;top:621.00px;font-size:12.70px;color:#a6a6a6;">Remove</div>
<div class="r" style="left:221.40px;top:616.40px;width:67.60px;height:19.90px;background:linear-gradient(#fbfbfb,#ececec);border:1px solid #bdbdbd;border-radius:3px;box-sizing:border-box;"></div>
<div class="t" style="left:231.20px;top:621.00px;font-size:12.70px;color:#a6a6a6;">Rename</div>
<svg class="r" style="left:301px;top:342.5px" width="4.5" height="7" viewBox="0 0 4.5 7"><path d="M4.5 0L0 3.5L4.5 7Z" fill="#555"/></svg>
<svg class="r" style="left:779.7px;top:342.5px" width="4.5" height="7" viewBox="0 0 4.5 7"><path d="M0 0L4.5 3.5L0 7Z" fill="#555"/></svg>
<div class="r" style="left:290.60px;top:52.00px;width:1.00px;height:559.00px;background:#d6d6d6;"></div>
<div class="r" style="left:794.10px;top:52.00px;width:229.90px;height:17.80px;background:#b8b8b8;"></div>
<svg class="r" style="left:797px;top:56.5px" width="15" height="9" viewBox="0 0 15 9"><path d="M0.5 1L5 4.5L0.5 8Z" fill="#333"/><rect x="4.5" y="1" width="10" height="7" rx="3" fill="#333"/></svg>
<div class="t" style="left:816.30px;top:56.29px;font-size:12.72px;color:#000;">Views</div>
<div class="r" style="left:1009.00px;top:53.90px;width:13.90px;height:13.35px;background:linear-gradient(#ffffff,#e8e8e8);border:1px solid #a8a8a8;border-radius:2px;box-sizing:border-box;"></div>
<svg class="r" style="left:1010.95px;top:55.58px" width="10" height="10" viewBox="0 0 10 10"><circle cx="5" cy="5" r="4.6" fill="#d01818"/><path d="M3.2 3.2L6.8 6.8M6.8 3.2L3.2 6.8" stroke="#fff" stroke-width="1.3"/></svg>
<div class="t" style="left:796.00px;top:80.41px;font-size:12.22px;color:#000;">Type:</div>
<div class="r" style="left:832.20px;top:75.50px;width:117.40px;height:20.90px;background:linear-gradient(#fbfbfb,#ededed);border:1px solid #bdbdbd;border-radius:3px;box-sizing:border-box;"></div>
<div class="t" style="left:836px;top:79.03px;font-size:12.9px;width:96px;overflow:hidden;white-space:nowrap">Orbit (rviz_default_plugins)</div>
<svg class="r" style="left:937.8px;top:84.5px" width="6" height="4" viewBox="0 0 6 4"><path d="M0 0h6L3 3.5Z" fill="#555"/></svg>
<div class="r" style="left:955.40px;top:75.80px;width:68.10px;height:20.50px;background:linear-gradient(#fbfbfb,#ececec);border:1px solid #bdbdbd;border-radius:3px;box-sizing:border-box;"></div>
<div class="t" style="left:976.40px;top:79.89px;font-size:12.84px;color:#000;">Zero</div>
<div class="r" style="left:794.10px;top:103.40px;width:229.90px;height:507.80px;background:#fff;border:1px solid #c4c4c4;border-right:none;box-sizing:border-box;"></div>
<div class="r" style="left:909.40px;top:104.40px;width:1.00px;height:505.80px;background:#e4e4e4;"></div>
<svg class="r" style="left:799.80px;top:109.50px" width="8" height="5" viewBox="0 0 8 5"><path d="M0.5 0.5L7.5 0.5L4 4.5Z" fill="#555"/></svg>
<div class="t" style="left:815.00px;top:105.33px;font-size:12.91px;color:#000;font-weight:bold;">Current View</div>
<div class="t" style="left:912.50px;top:105.12px;font-size:13.15px;color:#000;font-weight:bold;">Orbit (rviz)</div>
<div class="t" style="left:832.00px;top:120.24px;font-size:12.60px;color:#000;">Near Clip …</div>
<div class="t" style="left:912.20px;top:120.24px;font-size:12.60px;color:#000;">0.01</div>
<div class="t" style="left:832.00px;top:134.89px;font-size:12.60px;color:#000;">Enable Ste…</div>
<div class="t" style="left:832.00px;top:149.54px;font-size:12.60px;color:#000;">Invert Z Axis</div>
<div class="t" style="left:832.00px;top:164.19px;font-size:12.60px;color:#000;">Target Fra…</div>
<div class="t" style="left:912.20px;top:164.19px;font-size:12.60px;color:#000;">&lt;Fixed Frame&gt;</div>
<div class="t" style="left:832.00px;top:178.84px;font-size:12.60px;color:#000;">Distance</div>
<div class="t" style="left:912.20px;top:178.84px;font-size:12.60px;color:#000;">57.8484</div>
<div class="t" style="left:832.00px;top:193.49px;font-size:12.60px;color:#000;">Focal Shap…</div>
<div class="t" style="left:912.20px;top:193.49px;font-size:12.60px;color:#000;">0.05</div>
<div class="t" style="left:832.00px;top:208.14px;font-size:12.60px;color:#000;">Focal Shap…</div>
<div class="t" style="left:832.00px;top:222.79px;font-size:12.60px;color:#000;">Yaw</div>
<div class="t" style="left:912.20px;top:222.79px;font-size:12.60px;color:#000;">2.24539</div>
<div class="t" style="left:832.00px;top:237.44px;font-size:12.60px;color:#000;">Pitch</div>
<div class="t" style="left:912.20px;top:237.44px;font-size:12.60px;color:#000;">0.415398</div>
<div class="t" style="left:832.00px;top:252.09px;font-size:12.60px;color:#000;">Focal Point</div>
<div class="t" style="left:912.20px;top:252.09px;font-size:12.60px;color:#000;">0.59683; -1.0875…</div>
<div class="r" style="left:911.80px;top:134.10px;width:11.50px;height:11.50px;background:#fff;border:1px solid #b8b8b8;border-radius:1px;box-sizing:border-box;"></div>
<div class="r" style="left:911.80px;top:148.75px;width:11.50px;height:11.50px;background:#fff;border:1px solid #b8b8b8;border-radius:1px;box-sizing:border-box;"></div>
<div class="r" style="left:911.80px;top:207.35px;width:11.50px;height:11.50px;background:#fff;border:1px solid #b8b8b8;border-radius:1px;box-sizing:border-box;"></div>
<svg class="r" style="left:911.80px;top:207.35px" width="11.5" height="11.5" viewBox="0 0 11 11"><path d="M2.5 5.6L4.6 8.2L8.6 2.4" fill="none" stroke="#111" stroke-width="1.5"/></svg>
<svg class="r" style="left:817.50px;top:137.80px" width="5" height="8" viewBox="0 0 5 8"><path d="M0.5 1L4 4L0.5 7Z" fill="#555"/></svg>
<svg class="r" style="left:817.50px;top:255.00px" width="5" height="8" viewBox="0 0 5 8"><path d="M0.5 1L4 4L0.5 7Z" fill="#555"/></svg>
<div class="r" style="left:795.50px;top:617.90px;width:72.20px;height:20.20px;background:linear-gradient(#fbfbfb,#ececec);border:1px solid #bdbdbd;border-radius:3px;box-sizing:border-box;"></div>
<div class="t" style="left:817.13px;top:622.50px;font-size:12.70px;color:#000;">Save</div>
<div class="r" style="left:873.40px;top:617.90px;width:72.20px;height:20.20px;background:linear-gradient(#fbfbfb,#ececec);border:1px solid #bdbdbd;border-radius:3px;box-sizing:border-box;"></div>
<div class="t" style="left:885.85px;top:622.50px;font-size:12.70px;color:#000;">Remove</div>
<div class="r" style="left:951.50px;top:617.90px;width:72.00px;height:20.20px;background:linear-gradient(#fbfbfb,#ececec);border:1px solid #bdbdbd;border-radius:3px;box-sizing:border-box;"></div>
<div class="t" style="left:963.50px;top:622.50px;font-size:12.70px;color:#000;">Rename</div>
<div class="r" style="left:0.00px;top:646.25px;width:1024.00px;height:18.05px;background:#b8b8b8;"></div>
<svg class="r" style="left:1.5px;top:648.5px" width="13" height="13" viewBox="0 0 13 13"><circle cx="6.5" cy="6.5" r="5.5" fill="#fff" stroke="#444" stroke-width="1.3"/><path d="M6.3 3v3.8h3" fill="none" stroke="#222" stroke-width="1.2"/></svg>
<div class="t" style="left:21.50px;top:650.44px;font-size:12.31px;color:#000;">Time</div>
<div class="r" style="left:1010.00px;top:648.00px;width:13.00px;height:13.30px;background:linear-gradient(#ffffff,#e8e8e8);border:1px solid #a8a8a8;border-radius:2px;box-sizing:border-box;"></div>
<svg class="r" style="left:1011.50px;top:649.65px" width="10" height="10" viewBox="0 0 10 10"><circle cx="5" cy="5" r="4.6" fill="#d01818"/><path d="M3.2 3.2L6.8 6.8M6.8 3.2L3.2 6.8" stroke="#fff" stroke-width="1.3"/></svg>
<div class="t" style="left:8.20px;top:677.51px;font-size:11.98px;color:#000;">ROS Time:</div>
<div class="r" style="left:73.20px;top:671.25px;width:120.55px;height:19.95px;background:#fff;border:1px solid #bcbcbc;border-radius:2px;box-sizing:border-box;"></div>
<div class="t" style="left:76.20px;top:676.90px;font-size:12.70px;color:#000;">1765894639.07</div>
<div class="t" style="left:199.00px;top:677.46px;font-size:12.04px;color:#000;">ROS Elapsed:</div>
<div class="r" style="left:282.30px;top:671.25px;width:120.20px;height:19.95px;background:#fff;border:1px solid #bcbcbc;border-radius:2px;box-sizing:border-box;"></div>
<div class="t" style="left:285.00px;top:677.06px;font-size:12.52px;color:#000;">323.29</div>
<div class="t" style="left:408.60px;top:676.63px;font-size:13.02px;color:#000;">Wall Time:</div>
<div class="r" style="left:474.20px;top:671.25px;width:121.00px;height:19.95px;background:#fff;border:1px solid #bcbcbc;border-radius:2px;box-sizing:border-box;"></div>
<div class="t" style="left:477.00px;top:676.76px;font-size:12.87px;color:#000;">1765894639.10</div>
<div class="t" style="left:601.40px;top:677.03px;font-size:12.56px;color:#000;">Wall Elapsed:</div>
<div class="r" style="left:683.20px;top:671.25px;width:121.20px;height:19.95px;background:#fff;border:1px solid #bcbcbc;border-radius:2px;box-sizing:border-box;"></div>
<div class="t" style="left:685.80px;top:676.89px;font-size:12.72px;color:#000;">323.29</div>
<div class="r" style="left:917.60px;top:676.00px;width:11.50px;height:11.50px;background:#fff;border:1px solid #b8b8b8;border-radius:1px;box-sizing:border-box;"></div>
<div class="t" style="left:934.00px;top:676.51px;font-size:13.16px;color:#000;">Experimental</div>
<div class="t" style="left:969.20px;top:702.82px;font-size:12.92px;color:#000;">31 fps</div>
<div class="r" style="left:1.00px;top:701.50px;width:43.50px;height:28.50px;background:linear-gradient(#fbfbfb,#ececec);border:1px solid #bdbdbd;border-radius:3px;box-sizing:border-box;"></div>
<div class="t" style="left:6.25px;top:706.34px;font-size:12.54px;color:#000;">Reset</div>
<div class="r" style="left:293.50px;top:340.20px;width:1.50px;height:1.20px;background:#c4c4c4;"></div>
<div class="r" style="left:791.00px;top:340.20px;width:1.50px;height:1.20px;background:#c4c4c4;"></div>
<div class="r" style="left:293.50px;top:342.80px;width:1.50px;height:1.20px;background:#c4c4c4;"></div>
<div class="r" style="left:791.00px;top:342.80px;width:1.50px;height:1.20px;background:#c4c4c4;"></div>
<div class="r" style="left:293.50px;top:345.40px;width:1.50px;height:1.20px;background:#c4c4c4;"></div>
<div class="r" style="left:791.00px;top:345.40px;width:1.50px;height:1.20px;background:#c4c4c4;"></div>
<div class="r" style="left:293.50px;top:348.00px;width:1.50px;height:1.20px;background:#c4c4c4;"></div>
<div class="r" style="left:791.00px;top:348.00px;width:1.50px;height:1.20px;background:#c4c4c4;"></div>
<div class="r" style="left:293.50px;top:350.60px;width:1.50px;height:1.20px;background:#c4c4c4;"></div>
<div class="r" style="left:791.00px;top:350.60px;width:1.50px;height:1.20px;background:#c4c4c4;"></div>
<div class="r" style="left:293.50px;top:353.20px;width:1.50px;height:1.20px;background:#c4c4c4;"></div>
<div class="r" style="left:791.00px;top:353.20px;width:1.50px;height:1.20px;background:#c4c4c4;"></div>
<div class="r" style="left:140.00px;top:541.60px;width:1.20px;height:1.20px;background:#c4c4c4;"></div>
<div class="r" style="left:143.00px;top:541.60px;width:1.20px;height:1.20px;background:#c4c4c4;"></div>
<div class="r" style="left:146.00px;top:541.60px;width:1.20px;height:1.20px;background:#c4c4c4;"></div>
<div class="r" style="left:149.00px;top:541.60px;width:1.20px;height:1.20px;background:#c4c4c4;"></div>
<div class="r" style="left:152.00px;top:541.60px;width:1.20px;height:1.20px;background:#c4c4c4;"></div>
<div class="r" style="left:155.00px;top:541.60px;width:1.20px;height:1.20px;background:#c4c4c4;"></div>
<div class="r" style="left:1018.00px;top:719.00px;width:1.50px;height:1.50px;background:#c8c8c8;"></div>
<div class="r" style="left:1021.00px;top:719.00px;width:1.50px;height:1.50px;background:#c8c8c8;"></div>
<div class="r" style="left:1024.00px;top:719.00px;width:1.50px;height:1.50px;background:#c8c8c8;"></div>
<div class="r" style="left:1021.00px;top:716.00px;width:1.50px;height:1.50px;background:#c8c8c8;"></div>
<div class="r" style="left:1024.00px;top:716.00px;width:1.50px;height:1.50px;background:#c8c8c8;"></div>
<div class="r" style="left:1024.00px;top:713.00px;width:1.50px;height:1.50px;background:#c8c8c8;"></div>
</body></html>
